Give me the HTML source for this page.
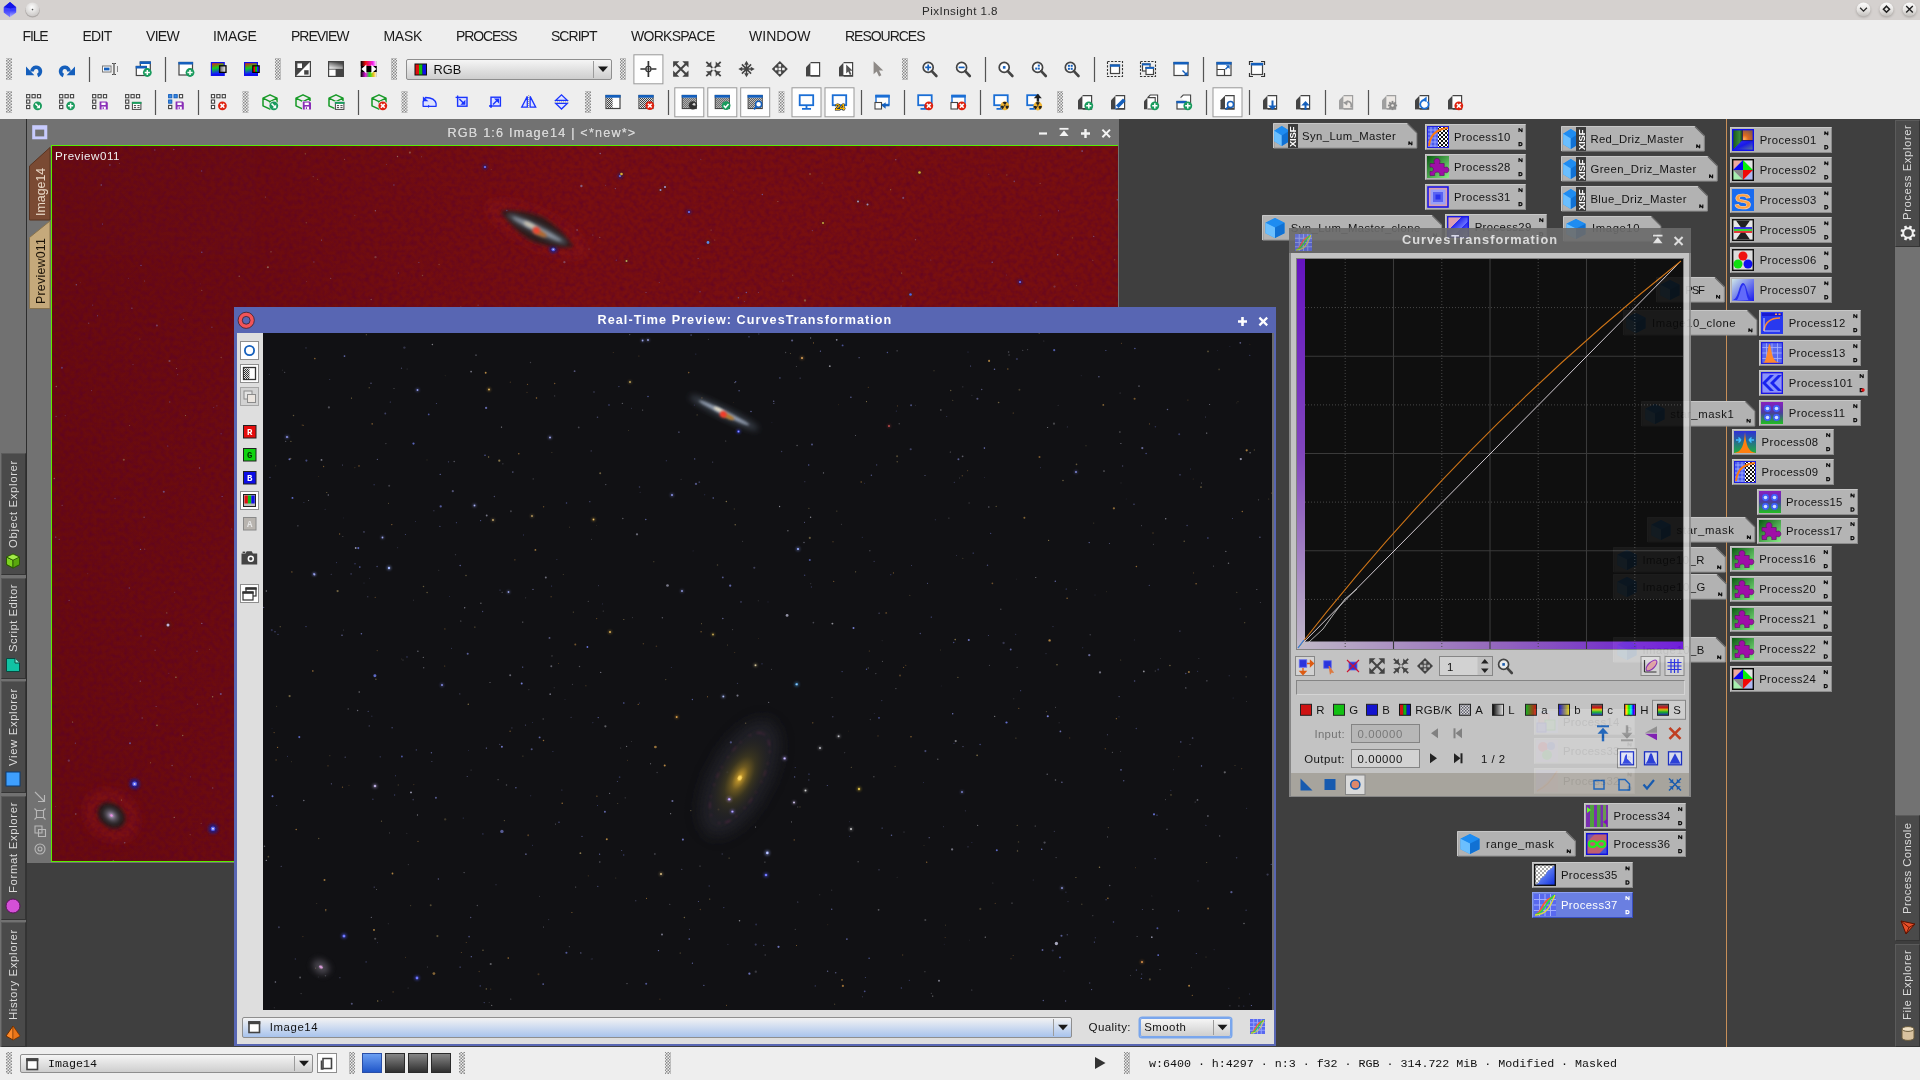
<!DOCTYPE html>
<html><head><meta charset="utf-8"><title>PixInsight 1.8</title>
<style>
html,body{margin:0;padding:0}
body{width:1920px;height:1080px;position:relative;overflow:hidden;background:#404040;
 font-family:"Liberation Sans",sans-serif;font-size:12px;color:#111}
.a{position:absolute}
.t{position:absolute;white-space:nowrap;line-height:1}
.mono{font-family:"Liberation Mono",monospace}
svg{position:absolute;overflow:visible}
.vt{position:absolute;white-space:nowrap;line-height:1;transform-origin:0 0;transform:rotate(-90deg);color:#dcdcdc;font-size:12.6px}
.card{position:absolute;background:#b5b5b5;box-sizing:border-box;border:1px solid #c9c9c9;border-right-color:#8d8d8d;border-bottom-color:#8d8d8d}
.ct{position:absolute;white-space:nowrap;line-height:1;font-size:12.4px;color:#151515}
.nd{position:absolute;font-size:6.5px;font-weight:bold;line-height:1;color:#111}
</style></head><body><div id="root" style="position:absolute;left:0;top:0;width:1920px;height:1080px;will-change:transform;opacity:.999">
<div class="a" style="left:0px;top:0px;width:1920px;height:20px;background:#d6d2d0"></div><svg style="left:0px;top:0px" width="60" height="20" viewBox="0 0 60 20"><defs><linearGradient id="gem" x1="0" y1="0" x2="0" y2="1"><stop offset="0" stop-color="#2a2cff"/><stop offset=".55" stop-color="#3a3cff"/><stop offset="1" stop-color="#b9b9ff"/></linearGradient><radialGradient id="rbt" cx=".45" cy=".35" r=".7"><stop offset="0" stop-color="#fdfdfd"/><stop offset="1" stop-color="#c9c6c4"/></radialGradient></defs><path d="M10 2l6.2 5.2v5.2l-6.2 4.8-6.2-4.8v-5.2z" fill="url(#gem)"/><path d="M10 2l6.2 5.2-6.2 1.2-6.2-1.2z" fill="#1414e8"/><path d="M10 8.4v8.8l-6.2-4.8v-5.2z" fill="#4a4cff" opacity=".55"/><ellipse cx="32.500" cy="10.600" rx="7.300" ry="7" fill="#8f8b88" opacity=".55"/><circle cx="32.500" cy="9.400" r="6.900" fill="url(#rbt)"/><circle cx="32.5" cy="9.6" r=".8" fill="#555"/></svg><div class="t" style="left:922.0px;top:5.0px;font-size:11.6px;color:#2b2b2b;letter-spacing:0.454px;line-height:12px;">PixInsight 1.8</div><svg style="left:0px;top:0px" width="1920" height="20" viewBox="0 0 1920 20"><defs><linearGradient id="rb2" x1="0" y1="0" x2="0" y2="1"><stop offset="0" stop-color="#fdfdfd"/><stop offset=".55" stop-color="#e6e4e2"/><stop offset="1" stop-color="#c4c1be"/></linearGradient><filter id="tbl" x="-30%" y="-30%" width="160%" height="160%"><feGaussianBlur stdDeviation=".9"/></filter></defs><ellipse cx="1863.5" cy="10.600" rx="7.300" ry="7" fill="#8f8b88" opacity=".55" filter="url(#tbl)"/><circle cx="1863.5" cy="9.400" r="6.900" fill="url(#rb2)"/><path d="M1860.1 7.8l3.400 3.400 3.400-3.400" stroke="#2a2a2a" stroke-width="1.300" fill="none"/><ellipse cx="1886.5" cy="10.600" rx="7.300" ry="7" fill="#8f8b88" opacity=".55" filter="url(#tbl)"/><circle cx="1886.5" cy="9.400" r="6.900" fill="url(#rb2)"/><path d="M1886.5 6.2l3 3-3 3-3-3z" stroke="#222" stroke-width="1.600" fill="none"/><ellipse cx="1909.5" cy="10.600" rx="7.300" ry="7" fill="#8f8b88" opacity=".55" filter="url(#tbl)"/><circle cx="1909.5" cy="9.400" r="6.900" fill="url(#rb2)"/><path d="M1906.2 6l6.600 6.600M1912.8 6l-6.600 6.600" stroke="#222" stroke-width="1.400"/></svg><div class="a" style="left:0px;top:20px;width:1920px;height:99px;background:#efefef"></div><div class="t" style="left:22.5px;top:28.0px;font-size:14px;color:#1c1c1c;letter-spacing:-1.142px;line-height:16px;">FILE</div><div class="t" style="left:82.5px;top:28.0px;font-size:14px;color:#1c1c1c;letter-spacing:-0.723px;line-height:16px;">EDIT</div><div class="t" style="left:146.0px;top:28.0px;font-size:14px;color:#1c1c1c;letter-spacing:-0.695px;line-height:16px;">VIEW</div><div class="t" style="left:213.0px;top:28.0px;font-size:14px;color:#1c1c1c;letter-spacing:-0.324px;line-height:16px;">IMAGE</div><div class="t" style="left:291.0px;top:28.0px;font-size:14px;color:#1c1c1c;letter-spacing:-1.009px;line-height:16px;">PREVIEW</div><div class="t" style="left:383.5px;top:28.0px;font-size:14px;color:#1c1c1c;letter-spacing:-0.294px;line-height:16px;">MASK</div><div class="t" style="left:456.0px;top:28.0px;font-size:14px;color:#1c1c1c;letter-spacing:-1.138px;line-height:16px;">PROCESS</div><div class="t" style="left:551.0px;top:28.0px;font-size:14px;color:#1c1c1c;letter-spacing:-0.973px;line-height:16px;">SCRIPT</div><div class="t" style="left:631.0px;top:28.0px;font-size:14px;color:#1c1c1c;letter-spacing:-0.720px;line-height:16px;">WORKSPACE</div><div class="t" style="left:749.0px;top:28.0px;font-size:14px;color:#1c1c1c;letter-spacing:0.012px;line-height:16px;">WINDOW</div><div class="t" style="left:845.0px;top:28.0px;font-size:14px;color:#1c1c1c;letter-spacing:-1.020px;line-height:16px;">RESOURCES</div><svg style="left:0px;top:0px" width="1920" height="119" viewBox="0 0 1920 119"><defs><pattern id="ck" width="2" height="2" patternUnits="userSpaceOnUse"><rect width="2" height="2" fill="#ddd"/><rect width="1" height="1" fill="#444"/><rect x="1" y="1" width="1" height="1" fill="#444"/></pattern><pattern id="grip" width="4" height="4" patternUnits="userSpaceOnUse"><rect width="4" height="4" fill="#efefef"/><rect width="2" height="2" fill="#7a7a7a"/><rect x="2" y="2" width="2" height="2" fill="#7a7a7a"/></pattern><pattern id="grip2" width="3" height="3" patternUnits="userSpaceOnUse"><rect width="3" height="3" fill="#ececec"/><rect width="1.500" height="1.500" fill="#8c8c8c"/><rect x="1.500" y="1.500" width="1.500" height="1.500" fill="#8c8c8c"/></pattern></defs><rect x="6.0" y="58" width="6" height="22" fill="url(#grip2)"/><rect x="275.0" y="58" width="6" height="22" fill="url(#grip2)"/><rect x="391.0" y="58" width="6" height="22" fill="url(#grip2)"/><rect x="620.0" y="58" width="6" height="22" fill="url(#grip2)"/><rect x="902.0" y="58" width="6" height="22" fill="url(#grip2)"/><rect x="6.0" y="91" width="6" height="22" fill="url(#grip2)"/><rect x="242.5" y="91" width="6" height="22" fill="url(#grip2)"/><rect x="401.5" y="91" width="6" height="22" fill="url(#grip2)"/><rect x="585.0" y="91" width="6" height="22" fill="url(#grip2)"/><rect x="778.5" y="91" width="6" height="22" fill="url(#grip2)"/><rect x="1057.0" y="91" width="6" height="22" fill="url(#grip2)"/><rect x="88.9" y="57" width="1.2" height="25" fill="#555"/><rect x="164.9" y="57" width="1.2" height="25" fill="#555"/><rect x="984.9" y="57" width="1.2" height="25" fill="#555"/><rect x="1093.9" y="57" width="1.2" height="25" fill="#555"/><rect x="1202.9" y="57" width="1.2" height="25" fill="#555"/><rect x="154.9" y="90" width="1.2" height="25" fill="#555"/><rect x="197.9" y="90" width="1.2" height="25" fill="#555"/><rect x="357.9" y="90" width="1.2" height="25" fill="#555"/><rect x="667.9" y="90" width="1.2" height="25" fill="#555"/><rect x="860.9" y="90" width="1.2" height="25" fill="#555"/><rect x="903.9" y="90" width="1.2" height="25" fill="#555"/><rect x="979.9" y="90" width="1.2" height="25" fill="#555"/><rect x="1205.9" y="90" width="1.2" height="25" fill="#555"/><rect x="1248.9" y="90" width="1.2" height="25" fill="#555"/><rect x="1324.9" y="90" width="1.2" height="25" fill="#555"/><rect x="1367.9" y="90" width="1.2" height="25" fill="#555"/><rect x="633.9" y="54.8" width="29" height="29" fill="#fff" stroke="#9a9a9a" stroke-width="1"/><g transform="translate(26.0,61.0)"><path d="M11.6 14.4A4.2 4.2 0 1 0 6 10.4" stroke="#1560bd" stroke-width="3.7" fill="none"/><path d="M0 14.2V5.6L8.4 14.2z" fill="#1560bd"/></g><g transform="translate(59.0,61.0)"><g transform="translate(16,0) scale(-1,1)"><path d="M11.6 14.4A4.2 4.2 0 1 0 6 10.4" stroke="#1560bd" stroke-width="3.7" fill="none"/><path d="M0 14.2V5.6L8.4 14.2z" fill="#1560bd"/></g></g><g transform="translate(102.0,61.0)"><rect x=".5" y="5" width="8.5" height="6" fill="#fff" stroke="#777" stroke-width="1"/><rect x="2" y="6.6" width="5.5" height="2.8" fill="#1560bd"/><path d="M10 2.5h1.5m1 0h1.5M12 2.5v11M10 13.5h1.5m1 0h1.5" stroke="#454545" stroke-width="1.2" fill="none"/><path d="M15.5 5v6" stroke="#888" stroke-width="1"/></g><g transform="translate(135.3,61.0)"><rect x="5" y="1" width="10" height="8" fill="#fff" stroke="#454545" stroke-width="1.2"/><rect x="4.4" y="0.4" width="11.2" height="2.6" fill="#1560bd"/><rect x="1" y="5.5" width="10" height="9" fill="#fff" stroke="#454545" stroke-width="1.2"/><rect x="0.4" y="4.9" width="11.2" height="2.6" fill="#1560bd"/><circle cx="12" cy="11.5" r="4.4" fill="#1a9c5e"/><path d="M9.4 11.5h5.2M12 8.9v5.2" stroke="#fff" stroke-width="1.5"/></g><g transform="translate(178.0,61.0)"><rect x="1" y="1.5" width="13.5" height="12.5" fill="#fff" stroke="#454545" stroke-width="1.2"/><rect x="0.4" y="0.9" width="14.7" height="2.6" fill="#1560bd"/><circle cx="12" cy="11.5" r="4.4" fill="#1a9c5e"/><path d="M9.4 11.5h5.2M12 8.9v5.2" stroke="#fff" stroke-width="1.5"/></g><g transform="translate(210.8,61.0)"><defs><linearGradient id="gq1" x1="0" y1="0" x2=".25" y2="1"><stop offset="0" stop-color="#e82010"/><stop offset=".5" stop-color="#10d020"/><stop offset="1" stop-color="#1020ff"/></linearGradient><linearGradient id="gq1g" x1="0" y1="0" x2="1" y2="0"><stop offset="0" stop-color="#666"/><stop offset="1" stop-color="#f4f4f4"/></linearGradient></defs><rect x="0" y="1" width="14" height="14" fill="#1010ee"/><rect x="1.2" y="2.2" width="11.6" height="10.6" fill="url(#gq1)"/><rect x="8.800" y="4.800" width="6.400" height="6.600" fill="url(#gq1g)" stroke="#000" stroke-width="1.300"/></g><g transform="translate(244.0,61.0)"><defs><linearGradient id="gq2" x1="0" y1="0" x2=".25" y2="1"><stop offset="0" stop-color="#e82010"/><stop offset=".5" stop-color="#10d020"/><stop offset="1" stop-color="#1020ff"/></linearGradient><linearGradient id="gq2g" x1="0" y1="0" x2="1" y2="0"><stop offset="0" stop-color="#666"/><stop offset="1" stop-color="#f4f4f4"/></linearGradient></defs><rect x="0" y="1" width="14" height="14" fill="#1010ee"/><rect x="1.2" y="2.2" width="11.6" height="10.6" fill="url(#gq2)"/><rect x="8.200" y="4.200" width="7.600" height="7.800" fill="#000"/><rect x="9.400" y="5.400" width="1.800" height="5.400" fill="#f00"/><rect x="11.200" y="5.400" width="1.800" height="5.400" fill="#0c0"/><rect x="13" y="5.400" width="1.700" height="5.400" fill="#22f"/></g><g transform="translate(295.0,61.0)"><rect x=".6" y=".6" width="14.8" height="14.8" fill="#fff" stroke="#454545" stroke-width="1.2"/><path d="M.6 .6h14.8L.6 15.400z" fill="#454545"/><rect x="2.4" y="2.4" width="4.6" height="4.6" fill="#fff"/><rect x="9.2" y="9.2" width="4.4" height="4.400" fill="#454545"/></g><g transform="translate(328.0,61.0)"><defs><linearGradient id="gg1" x1="0" y1="1" x2=".6" y2="0"><stop offset="0" stop-color="#fff"/><stop offset="1" stop-color="#4a4a4a"/></linearGradient></defs><rect x="0" y="0" width="16" height="16" fill="#454545"/><rect x="1.2" y="1.2" width="13.6" height="6.6" fill="url(#gg1)"/><rect x="1.2" y="8.6" width="6.4" height="6.2" fill="#fff"/></g><g transform="translate(360.8,61.0)"><defs><linearGradient id="rnb1" x1="0" y1="0" x2="1" y2="0"><stop offset="0" stop-color="#000"/><stop offset=".3" stop-color="#f01010"/><stop offset=".75" stop-color="#f020f0"/><stop offset="1" stop-color="#fff"/></linearGradient><linearGradient id="rnb2" x1="0" y1="0" x2="1" y2="0"><stop offset="0" stop-color="#000"/><stop offset=".3" stop-color="#e020e0"/><stop offset=".55" stop-color="#20e020"/><stop offset=".8" stop-color="#f0c020"/><stop offset="1" stop-color="#fff"/></linearGradient></defs><rect x="0" y="0" width="16" height="16" fill="#000"/><rect x="0" y="0" width="16" height="5" fill="url(#rnb1)"/><rect x="0" y="11" width="16" height="5" fill="url(#rnb2)"/><rect x="4" y="6" width="8.500" height="4" fill="#000"/><path d="M.6 8l5-4.600v9.200z" fill="#fff"/><path d="M15.600 8l-5-4.600v9.200z" fill="#fff"/><path d="M5 6.600h6v2.800h-6z" fill="#fff" opacity=".0"/></g><g transform="translate(640.4,61.0)"><path d="M8 0v16M0 8h16" stroke="#333" stroke-width="1.700"/><rect x="5.200" y="5.200" width="5.600" height="5.600" fill="#fff"/><circle cx="8" cy="8" r="2.600" fill="#fff" stroke="#333" stroke-width="1.200"/><path d="M8 5.400v5.200M5.400 8h5.200" stroke="#333" stroke-width="1.200"/></g><g transform="translate(672.8,61.0)"><path d="M2 2l12 12M14 2l-12 12" stroke="#454545" stroke-width="2"/><path d="M0.3 0.3h6.2l-6.2 6.2z" fill="#454545"/><path d="M15.7 0.3h-6.2l6.2 6.2z" fill="#454545"/><path d="M0.3 15.7h6.2l-6.2 -6.2z" fill="#454545"/><path d="M15.7 15.7h-6.2l6.2 -6.2z" fill="#454545"/></g><g transform="translate(705.5,61.0)"><path d="M.8 .8l14.4 14.4M15.2 .8l-14.4 14.4" stroke="#454545" stroke-width="1.8"/><path d="M5.8 5.8h-5.4l5.4 -5.4z" fill="#454545"/><path d="M10.2 5.8h5.4l-5.4 -5.4z" fill="#454545"/><path d="M5.8 10.2h-5.4l5.4 5.4z" fill="#454545"/><path d="M10.2 10.2h5.4l-5.4 5.4z" fill="#454545"/><rect x="6.6" y="6.6" width="2.8" height="2.8" fill="#efefef"/></g><g transform="translate(738.5,61.0)"><path d="M8 2v12M2 8h12M3.400 3.400l9.200 9.200M12.600 3.400l-9.200 9.200" stroke="#454545" stroke-width="1.500"/><path d="M8.00 -0.20L10.30 3.78L5.70 3.78z" fill="#454545"/><path d="M8.00 16.20L5.70 12.22L10.30 12.22z" fill="#454545"/><path d="M-0.20 8.00L3.78 5.70L3.78 10.30z" fill="#454545"/><path d="M16.20 8.00L12.22 10.30L12.22 5.70z" fill="#454545"/></g><g transform="translate(771.8,61.0)"><path d="M8 0l8 8-8 8-8-8z" fill="#454545"/><rect x="6.7" y="3.1000000000000005" width="2.600" height="2.600" fill="#efefef"/><rect x="3.1000000000000005" y="6.7" width="2.600" height="2.600" fill="#efefef"/><rect x="10.299999999999999" y="6.7" width="2.600" height="2.600" fill="#efefef"/><rect x="6.7" y="10.299999999999999" width="2.600" height="2.600" fill="#efefef"/><rect x="6.7" y="6.7" width="2.600" height="2.600" fill="#efefef"/></g><g transform="translate(805.0,61.0)"><path d="M1 6.2L5.6 1.6v13.6H1z" fill="#454545"/><path d="M5.6 1.6h9v13.6h-9" fill="#fff" stroke="#454545" stroke-width="1.2"/><path d="M1 14.6h13.6" stroke="#454545" stroke-width="1.2"/></g><g transform="translate(838.0,61.0)"><path d="M1 6.2L5.6 1.6v13.6H1z" fill="#454545"/><path d="M5.6 1.6h9v13.6h-9" fill="#fff" stroke="#454545" stroke-width="1.2"/><path d="M1 14.6h13.6" stroke="#454545" stroke-width="1.2"/><path transform="translate(8.2,3.6) scale(0.8)" d="M0 0v11l2.6-2.3 2 4.3 2-1-2-4.2h3.6z" fill="#555"/></g><g transform="translate(871.0,61.0)"><path transform="translate(2.6,0.2) scale(1.18)" d="M0 0v11l2.6-2.3 2 4.3 2-1-2-4.2h3.6z" fill="#8f8b88"/></g><g transform="translate(921.6,61.0)"><circle cx="6.6" cy="6.4" r="5" fill="#fff" stroke="#454545" stroke-width="1.7"/><path d="M10.2 10.2l4.6 4.8" stroke="#454545" stroke-width="2.6" stroke-linecap="round"/><path d="M3.6 6.4h6M6.6 3.4v6" stroke="#1560bd" stroke-width="1.7"/></g><g transform="translate(955.0,61.0)"><circle cx="6.6" cy="6.4" r="5" fill="#fff" stroke="#454545" stroke-width="1.7"/><path d="M10.2 10.2l4.6 4.8" stroke="#454545" stroke-width="2.6" stroke-linecap="round"/><path d="M3.6 6.4h6" stroke="#1560bd" stroke-width="1.7"/></g><g transform="translate(997.6,61.0)"><circle cx="6.6" cy="6.4" r="5" fill="#fff" stroke="#454545" stroke-width="1.7"/><path d="M10.2 10.2l4.6 4.8" stroke="#454545" stroke-width="2.6" stroke-linecap="round"/><rect x="5.3" y="5.1" width="2.6" height="2.6" fill="#1560bd"/></g><g transform="translate(1031.0,61.0)"><circle cx="6.6" cy="6.4" r="5" fill="#fff" stroke="#454545" stroke-width="1.7"/><path d="M10.2 10.2l4.6 4.8" stroke="#454545" stroke-width="2.6" stroke-linecap="round"/><rect x="6.8" y="3.6" width="2" height="2" fill="#1560bd"/><rect x="4.2" y="6.6" width="2" height="2" fill="#1560bd"/><rect x="6.8" y="6.6" width="2" height="2" fill="#1560bd"/></g><g transform="translate(1063.7,61.0)"><circle cx="6.6" cy="6.4" r="5" fill="#fff" stroke="#454545" stroke-width="1.7"/><path d="M10.2 10.2l4.6 4.8" stroke="#454545" stroke-width="2.6" stroke-linecap="round"/><rect x="4.2" y="3.8" width="2" height="2" fill="#1560bd"/><rect x="7" y="3.8" width="2" height="2" fill="#1560bd"/><rect x="4.2" y="6.8" width="2" height="2" fill="#1560bd"/><rect x="7" y="6.8" width="2" height="2" fill="#1560bd"/></g><g transform="translate(1107.0,61.0)"><rect x="0.5" y="0.5" width="15" height="15" fill="none" stroke="#333" stroke-width="1.1" stroke-dasharray="2.2 1.4"/><rect x="3.5" y="4" width="9" height="8.5" fill="#fff" stroke="#454545" stroke-width="1.2"/><rect x="2.9" y="3.4" width="10.2" height="2.4" fill="#1560bd"/></g><g transform="translate(1140.0,61.0)"><rect x="0.5" y="0.5" width="15" height="15" fill="none" stroke="#333" stroke-width="1.1" stroke-dasharray="2.2 1.4"/><rect x="2.5" y="3" width="7.5" height="7" fill="#fff" stroke="#454545" stroke-width="1.2"/><rect x="1.9" y="2.4" width="8.7" height="2" fill="#1560bd"/><rect x="6" y="6.5" width="7.5" height="7" fill="#fff" stroke="#454545" stroke-width="1.2"/><rect x="5.4" y="5.9" width="8.7" height="2" fill="#1560bd"/></g><g transform="translate(1173.0,61.0)"><rect x="1" y="1.5" width="14" height="13" fill="#fff" stroke="#454545" stroke-width="1.2"/><rect x="0.4" y="0.9" width="15.2" height="2.6" fill="#1560bd"/><path d="M9.5 9.5l4.5 4.5" stroke="#1560bd" stroke-width="1.4"/><path d="M14.6 14.6v-4.2l-4.2 4.2z" fill="#1560bd"/></g><g transform="translate(1216.0,61.0)"><rect x="1" y="1.5" width="14" height="13" fill="#fff" stroke="#454545" stroke-width="1.2"/><rect x="0.4" y="0.9" width="15.2" height="2.8" fill="#1560bd"/><path d="M1 8.5h7.5v6" stroke="#454545" stroke-width="1.2" fill="none"/><path d="M9.5 8.2l3.2-3.2" stroke="#1560bd" stroke-width="1.4"/><path d="M13.6 4.2v3.8l-3.8-3.8z" fill="#1560bd"/></g><g transform="translate(1249.0,61.0)"><path d="M.5 4v-3.5h3.5M12 .5h3.5v3.5M15.5 12v3.5h-3.5M4 15.5h-3.5v-3.5" fill="none" stroke="#333" stroke-width="1.2"/><rect x="2.5" y="2.5" width="11" height="11" fill="#fff" stroke="#454545" stroke-width="1.2"/><rect x="1.9" y="1.9" width="12.2" height="2.6" fill="#1560bd"/></g><rect x="674.8" y="87.8" width="29" height="29" fill="#fff" stroke="#9a9a9a" stroke-width="1"/><rect x="707.8" y="87.8" width="29" height="29" fill="#fff" stroke="#9a9a9a" stroke-width="1"/><rect x="740.7" y="87.8" width="29" height="29" fill="#fff" stroke="#9a9a9a" stroke-width="1"/><rect x="792.0" y="87.8" width="29" height="29" fill="#fff" stroke="#9a9a9a" stroke-width="1"/><rect x="825.0" y="87.8" width="29" height="29" fill="#fff" stroke="#9a9a9a" stroke-width="1"/><rect x="1213.0" y="87.8" width="29" height="29" fill="#fff" stroke="#9a9a9a" stroke-width="1"/><g transform="translate(26.0,94.0)"><rect x="0.6" y="0.6" width="3.2" height="3.2" fill="#fff" stroke="#454545" stroke-width="1.1"/><rect x="6" y="0.6" width="3.2" height="3.2" fill="#fff" stroke="#454545" stroke-width="1.1"/><rect x="11.4" y="0.6" width="3.2" height="3.2" fill="#fff" stroke="#454545" stroke-width="1.1"/><rect x="0.6" y="6" width="3.2" height="3.2" fill="#fff" stroke="#454545" stroke-width="1.1"/><rect x="0.6" y="11.4" width="3.2" height="3.2" fill="#fff" stroke="#454545" stroke-width="1.1"/><circle cx="11.6" cy="11.8" r="4.4" fill="#1a9c5e"/><path d="M9.399999999999999 9.600000000000001l3.6 3.6" stroke="#fff" stroke-width="1.5"/><path d="M14.0 10.600000000000001v3.6h-3.6z" fill="#fff"/></g><g transform="translate(59.0,94.0)"><rect x="0.6" y="0.6" width="3.2" height="3.2" fill="#fff" stroke="#454545" stroke-width="1.1"/><rect x="6" y="0.6" width="3.2" height="3.2" fill="#fff" stroke="#454545" stroke-width="1.1"/><rect x="11.4" y="0.6" width="3.2" height="3.2" fill="#fff" stroke="#454545" stroke-width="1.1"/><rect x="0.6" y="6" width="3.2" height="3.2" fill="#fff" stroke="#454545" stroke-width="1.1"/><rect x="0.6" y="11.4" width="3.2" height="3.2" fill="#fff" stroke="#454545" stroke-width="1.1"/><circle cx="11.6" cy="11.8" r="4.4" fill="#1a9c5e"/><path d="M9.0 11.8h5.2M11.6 9.200000000000001v5.2" stroke="#fff" stroke-width="1.5"/></g><g transform="translate(92.0,94.0)"><rect x="0.6" y="0.6" width="3.2" height="3.2" fill="#fff" stroke="#454545" stroke-width="1.1"/><rect x="6" y="0.6" width="3.2" height="3.2" fill="#fff" stroke="#454545" stroke-width="1.1"/><rect x="11.4" y="0.6" width="3.2" height="3.2" fill="#fff" stroke="#454545" stroke-width="1.1"/><rect x="0.6" y="6" width="3.2" height="3.2" fill="#fff" stroke="#454545" stroke-width="1.1"/><rect x="0.6" y="11.4" width="3.2" height="3.2" fill="#fff" stroke="#454545" stroke-width="1.1"/><path d="M7.6 7.6h7l1.2 1.2v6.8h-8.2z" fill="#8b2fb8"/><rect x="9.4" y="8.6" width="4.2" height="2.4" fill="#fff"/><rect x="9.6" y="12.6" width="4.2" height="3" fill="#fff"/><rect x="10.6" y="13.2" width="1.2" height="1.8" fill="#8b2fb8"/></g><g transform="translate(125.0,94.0)"><rect x="0.6" y="0.6" width="3.2" height="3.2" fill="#fff" stroke="#454545" stroke-width="1.1"/><rect x="6" y="0.6" width="3.2" height="3.2" fill="#fff" stroke="#454545" stroke-width="1.1"/><rect x="11.4" y="0.6" width="3.2" height="3.2" fill="#fff" stroke="#454545" stroke-width="1.1"/><rect x="0.6" y="6" width="3.2" height="3.2" fill="#fff" stroke="#454545" stroke-width="1.1"/><rect x="0.6" y="11.4" width="3.2" height="3.2" fill="#fff" stroke="#454545" stroke-width="1.1"/><rect x="7.4" y="8.4" width="8.5" height="7" fill="#fff" stroke="#454545" stroke-width="1"/><rect x="6.9" y="7.9" width="9.5" height="2" fill="#1a9c5e"/><path d="M8.9 11.600000000000001h2.2M12.4 11.600000000000001h2.2M8.9 13.600000000000001h2.2M12.4 13.600000000000001h2.2" stroke="#454545" stroke-width="1"/></g><g transform="translate(168.0,94.0)"><rect x="0.6" y="0.6" width="3.2" height="3.2" fill="#3b8de8" stroke="#1560bd" stroke-width="1"/><rect x="6" y="0.6" width="3.2" height="3.2" fill="#3b8de8" stroke="#1560bd" stroke-width="1"/><rect x="11.4" y="0.6" width="3.2" height="3.2" fill="#fff" stroke="#454545" stroke-width="1.1"/><rect x="0.6" y="6" width="3.2" height="3.2" fill="#3b8de8" stroke="#1560bd" stroke-width="1"/><rect x="0.6" y="11.4" width="3.2" height="3.2" fill="#fff" stroke="#454545" stroke-width="1.1"/><path d="M7.6 7.6h7l1.2 1.2v6.8h-8.2z" fill="#8b2fb8"/><rect x="9.4" y="8.6" width="4.2" height="2.4" fill="#fff"/><rect x="9.6" y="12.6" width="4.2" height="3" fill="#fff"/><rect x="10.6" y="13.2" width="1.2" height="1.8" fill="#8b2fb8"/></g><g transform="translate(210.8,94.0)"><rect x="0.6" y="0.6" width="3.2" height="3.2" fill="#fff" stroke="#454545" stroke-width="1.1"/><rect x="6" y="0.6" width="3.2" height="3.2" fill="#fff" stroke="#454545" stroke-width="1.1"/><rect x="11.4" y="0.6" width="3.2" height="3.2" fill="#fff" stroke="#454545" stroke-width="1.1"/><rect x="0.6" y="6" width="3.2" height="3.2" fill="#fff" stroke="#454545" stroke-width="1.1"/><rect x="0.6" y="11.4" width="3.2" height="3.2" fill="#fff" stroke="#454545" stroke-width="1.1"/><circle cx="11.6" cy="11.8" r="4.4" fill="#e0220f"/><path d="M9.7 9.9l3.8 3.8M13.5 9.9l-3.8 3.8" stroke="#fff" stroke-width="1.6"/></g><g transform="translate(262.0,94.0)"><path d="M8 .8l7 3.4v7.6l-7 3.4-7-3.4v-7.6zM1 4.2l7 3.4 7-3.4M8 7.6v7.6" fill="none" stroke="#169a26" stroke-width="1.5" stroke-linejoin="round"/><circle cx="11.8" cy="11.8" r="5" fill="#efefef"/><circle cx="11.8" cy="11.8" r="4.4" fill="#1a9c5e"/><path d="M9.600000000000001 9.600000000000001l3.6 3.6" stroke="#fff" stroke-width="1.5"/><path d="M14.200000000000001 10.600000000000001v3.6h-3.6z" fill="#fff"/></g><g transform="translate(295.0,94.0)"><path d="M8 .8l7 3.4v7.6l-7 3.4-7-3.4v-7.6zM1 4.2l7 3.4 7-3.4M8 7.6v7.6" fill="none" stroke="#169a26" stroke-width="1.5" stroke-linejoin="round"/><rect x="7" y="7" width="9.5" height="9.5" fill="#efefef"/><path d="M7.8 7.6h7l1.2 1.2v6.8h-8.2z" fill="#8b2fb8"/><rect x="9.6" y="8.6" width="4.2" height="2.4" fill="#fff"/><rect x="9.8" y="12.6" width="4.2" height="3" fill="#fff"/><rect x="10.8" y="13.2" width="1.2" height="1.8" fill="#8b2fb8"/></g><g transform="translate(328.0,94.0)"><path d="M8 .8l7 3.4v7.6l-7 3.4-7-3.4v-7.6zM1 4.2l7 3.4 7-3.4M8 7.6v7.6" fill="none" stroke="#169a26" stroke-width="1.5" stroke-linejoin="round"/><rect x="6.5" y="7" width="10" height="9.5" fill="#efefef"/><rect x="7.4" y="8.4" width="8.5" height="7" fill="#fff" stroke="#454545" stroke-width="1"/><rect x="6.9" y="7.9" width="9.5" height="2" fill="#1a9c5e"/><path d="M8.9 11.600000000000001h2.2M12.4 11.600000000000001h2.2M8.9 13.600000000000001h2.2M12.4 13.600000000000001h2.2" stroke="#454545" stroke-width="1"/></g><g transform="translate(371.0,94.0)"><path d="M8 .8l7 3.4v7.6l-7 3.4-7-3.4v-7.6zM1 4.2l7 3.4 7-3.4M8 7.6v7.6" fill="none" stroke="#169a26" stroke-width="1.5" stroke-linejoin="round"/><circle cx="11.8" cy="11.8" r="5" fill="#efefef"/><circle cx="11.8" cy="11.8" r="4.4" fill="#e0220f"/><path d="M9.9 9.9l3.8 3.8M13.700000000000001 9.9l-3.8 3.8" stroke="#fff" stroke-width="1.6"/></g><g transform="translate(421.5,94.0)"><path d="M1.600 12.300h13v-2.600C13.800 5.600 9.500 3.600 4 3.500L1.600 7.600z" fill="#dfe3ff" stroke="#1a35ff" stroke-width="1.300" stroke-linejoin="round"/><path d="M1.400 2.400l5.600 4.800h-5.600z" fill="#1a35ff"/><path d="M8.500 12.300l-2 -1.600v3.200z" fill="#1a35ff"/></g><g transform="translate(454.0,94.0)"><rect x="3.600" y="3.400" width="9.400" height="8.800" fill="#dfe3ff" stroke="#1a35ff" stroke-width="1.400"/><path d="M1.600 3.400h3M3.600 1.400v3" stroke="#1a35ff" stroke-width="1.300"/><path d="M11.400 10.800v-5l-5 5z" fill="#1a35ff"/><path d="M5.400 5l4 4" stroke="#1a35ff" stroke-width="1.400"/></g><g transform="translate(487.0,94.0)"><rect x="4" y="3.200" width="9.400" height="8.800" fill="#dfe3ff" stroke="#1a35ff" stroke-width="1.400"/><path d="M2 12h3M4 14v-3" stroke="#1a35ff" stroke-width="1.300"/><path d="M12 4.600h-5l5 5z" fill="#1a35ff"/><path d="M6 10.400l4-4" stroke="#1a35ff" stroke-width="1.400"/></g><g transform="translate(520.5,94.0)"><path d="M6.800 2.400v10.800h-5.600zM9.600 2.400v10.800h5.600z" fill="#dfe3ff" stroke="#1a35ff" stroke-width="1.300"/><path d="M8.200 1v14" stroke="#888" stroke-width=".9" stroke-dasharray="1 1"/></g><g transform="translate(553.5,94.0)"><path d="M2.200 6.400h11.600l-5.800-5.600zM2.200 9.400h11.600l-5.800 5.600z" fill="#dfe3ff" stroke="#1a35ff" stroke-width="1.300"/><path d="M1.400 7.900h13.200" stroke="#888" stroke-width=".9" stroke-dasharray="1 1"/></g><g transform="translate(605.0,94.0)"><rect x="1" y="1.5" width="14" height="13" fill="#fff" stroke="#454545" stroke-width="1.2"/><rect x="1.6" y="3.5" width="6" height="10.4" fill="url(#ck)"/><rect x=".4" y=".9" width="15.2" height="2.8" fill="#1560bd"/></g><g transform="translate(638.0,94.0)"><rect x="1" y="1.5" width="14" height="13" fill="#fff" stroke="#454545" stroke-width="1.2"/><rect x="1.6" y="3.5" width="13" height="10.4" fill="url(#ck)"/><rect x=".4" y=".9" width="15.2" height="2.8" fill="#1560bd"/><circle cx="11.8" cy="11.6" r="4.4" fill="#e0220f"/><path d="M9.9 9.7l3.8 3.8M13.700000000000001 9.7l-3.8 3.8" stroke="#fff" stroke-width="1.6"/></g><g transform="translate(681.3,94.0)"><rect x="1" y="1.5" width="14" height="13" fill="#fff" stroke="#454545" stroke-width="1.2"/><rect x="1.6" y="3.5" width="13" height="10.4" fill="url(#ck)"/><rect x=".4" y=".9" width="15.2" height="2.8" fill="#1560bd"/><circle cx="11.6" cy="11.4" r="4.2" fill="#333"/><path d="M12.799999999999999 8.8a3 3 0 0 1 1.6 2.4a3.4 3.4 0 0 1 -3.6 -0.6z" fill="#ddd"/></g><g transform="translate(714.3,94.0)"><rect x="1" y="1.5" width="14" height="13" fill="#fff" stroke="#454545" stroke-width="1.2"/><rect x="1.6" y="3.5" width="13" height="10.4" fill="url(#ck)"/><rect x=".4" y=".9" width="15.2" height="2.8" fill="#1560bd"/><circle cx="11.8" cy="11.6" r="4.4" fill="#1a9c5e"/><path d="M9.4 11.6l1.8 1.9 3-3.6" stroke="#fff" stroke-width="1.5" fill="none"/></g><g transform="translate(747.2,94.0)"><rect x="1" y="1.5" width="14" height="13" fill="#fff" stroke="#454545" stroke-width="1.2"/><rect x="1.6" y="3.5" width="13" height="10.4" fill="url(#ck)"/><rect x=".4" y=".9" width="15.2" height="2.8" fill="#1560bd"/><circle cx="11.5" cy="10.5" r="3.6" fill="#efefef" opacity="0"/><circle cx="11.4" cy="10.2" r="3" fill="#fff" stroke="#1560bd" stroke-width="1.5"/><path d="M9.4 12.399999999999999l-2.6 2.8" stroke="#1560bd" stroke-width="2"/></g><g transform="translate(798.5,94.0)"><rect x="1.2" y="1.2" width="13.5" height="10" fill="#fff" stroke="#1b6fd6" stroke-width="1.8"/><path d="M8 11.5v2.8M3.5 14.8h9" stroke="#1b6fd6" stroke-width="1.8"/></g><g transform="translate(831.5,94.0)"><rect x="1.2" y="1.2" width="13.5" height="10" fill="#fff" stroke="#1b6fd6" stroke-width="1.8"/><path d="M8 11.5v2.8M3.5 14.8h9" stroke="#1b6fd6" stroke-width="1.8"/><text x="3.6" y="15.6" font-family="Liberation Sans" font-weight="bold" font-size="9.5" fill="#f5b400" stroke="#111" stroke-width=".8" paint-order="stroke" letter-spacing="-.6">24</text></g><g transform="translate(874.0,94.0)"><rect x="2" y="1.5" width="13" height="9" fill="#fff" stroke="#1b6fd6" stroke-width="1.4"/><rect x="1.3" y="0.8" width="14.4" height="2.8" fill="#1b6fd6"/><rect x="1" y="8.5" width="6.5" height="6.5" fill="#fff" stroke="#454545" stroke-width="1.1"/><path d="M15.5 11.5h-6" stroke="#1560bd" stroke-width="1.6"/><path d="M7.6 11.5l4-3.2v6.4z" fill="#1560bd"/></g><g transform="translate(917.0,94.0)"><rect x="1.2" y="1.2" width="13.5" height="10" fill="#fff" stroke="#1b6fd6" stroke-width="1.8"/><path d="M8 11.5v2.8M3.5 14.8h9" stroke="#1b6fd6" stroke-width="1.8"/><circle cx="11.8" cy="11.8" r="4.4" fill="#e0220f"/><path d="M9.9 9.9l3.8 3.8M13.700000000000001 9.9l-3.8 3.8" stroke="#fff" stroke-width="1.6"/></g><g transform="translate(950.0,94.0)"><rect x="2" y="1.5" width="13" height="9" fill="#fff" stroke="#1b6fd6" stroke-width="1.4"/><rect x="1.3" y="0.8" width="14.4" height="2.8" fill="#1b6fd6"/><rect x="1" y="8.5" width="6.5" height="6.5" fill="#fff" stroke="#454545" stroke-width="1.1"/><circle cx="11.8" cy="11.8" r="4.4" fill="#e0220f"/><path d="M9.9 9.9l3.8 3.8M13.700000000000001 9.9l-3.8 3.8" stroke="#fff" stroke-width="1.6"/></g><g transform="translate(993.0,94.0)"><rect x="1.2" y="1.2" width="13.5" height="10" fill="#fff" stroke="#1b6fd6" stroke-width="1.8"/><path d="M8 11.5v2.8M3.5 14.8h9" stroke="#1b6fd6" stroke-width="1.8"/><circle cx="11.8" cy="11.8" r="4.4" fill="#f2b632"/><path d="M11.8 11.8L15.85 11.80A4.048000000000001 4.048000000000001 0 0 1 13.82 15.31z" fill="#222"/><path d="M11.8 11.8L9.78 15.31A4.048000000000001 4.048000000000001 0 0 1 7.75 11.80z" fill="#222"/><path d="M11.8 11.8L9.78 8.29A4.048000000000001 4.048000000000001 0 0 1 13.82 8.29z" fill="#222"/><circle cx="11.8" cy="11.8" r="1.3" fill="#f2b632"/><circle cx="11.8" cy="11.8" r=".7" fill="#222"/></g><g transform="translate(1026.0,94.0)"><rect x="1.2" y="1.2" width="11" height="10" fill="#fff" stroke="#1b6fd6" stroke-width="1.8"/><path d="M8 11.5v2.8M3.5 14.8h9" stroke="#1b6fd6" stroke-width="1.8"/><circle cx="11.8" cy="12" r="4.4" fill="#f2b632"/><path d="M11.8 12L15.85 12.00A4.048000000000001 4.048000000000001 0 0 1 13.82 15.51z" fill="#222"/><path d="M11.8 12L9.78 15.51A4.048000000000001 4.048000000000001 0 0 1 7.75 12.00z" fill="#222"/><path d="M11.8 12L9.78 8.49A4.048000000000001 4.048000000000001 0 0 1 13.82 8.49z" fill="#222"/><circle cx="11.8" cy="12" r="1.3" fill="#f2b632"/><circle cx="11.8" cy="12" r=".7" fill="#222"/><path d="M11.8 7.5v-4" stroke="#222" stroke-width="2.2"/><path d="M11.8 -.2l4 4.4h-8z" fill="#222"/></g><g transform="translate(1077.0,94.0)"><path d="M1 6.2L5.6 1.6v13.6H1z" fill="#454545"/><path d="M5.6 1.6h9v13.6h-9" fill="#fff" stroke="#454545" stroke-width="1.2"/><path d="M1 14.6h13.6" stroke="#454545" stroke-width="1.2"/><circle cx="11.8" cy="11.8" r="4.4" fill="#1a9c5e"/><path d="M9.200000000000001 11.8h5.2M11.8 9.200000000000001v5.2" stroke="#fff" stroke-width="1.5"/></g><g transform="translate(1110.0,94.0)"><path d="M1 6.2L5.6 1.6v13.6H1z" fill="#454545"/><path d="M5.6 1.6h9v13.6h-9" fill="#fff" stroke="#454545" stroke-width="1.2"/><path d="M1 14.6h13.6" stroke="#454545" stroke-width="1.2"/><path d="M5.2 14.8l1-3.6 6.8-6.8 2.6 2.6-6.8 6.8z" fill="#1560bd"/><path d="M5.2 14.8l1-3.6 2.6 2.6z" fill="#fff" stroke="#1560bd" stroke-width=".6"/></g><g transform="translate(1143.0,94.0)"><path d="M1 7.2L4.6 3.6v11.6H1z" fill="#454545"/><path d="M4.6 3.6l2.6-2.6h7.4v11" fill="#fff" stroke="#454545" stroke-width="1.1"/><path d="M4.6 3.6h7.6v11.4h-7.6" fill="#fff" stroke="#454545" stroke-width="1.1"/><circle cx="11.8" cy="11.8" r="4.4" fill="#1a9c5e"/><path d="M9.200000000000001 11.8h5.2M11.8 9.200000000000001v5.2" stroke="#fff" stroke-width="1.5"/></g><g transform="translate(1176.0,94.0)"><path d="M4.6 3.6l2.6-2.6h7.4v11" fill="#fff" stroke="#454545" stroke-width="1.1"/><rect x="1" y="7.5" width="9" height="7.5" fill="#fff" stroke="#454545" stroke-width="1.2"/><rect x="0.4" y="6.9" width="10.2" height="2.4" fill="#1560bd"/><circle cx="11.8" cy="11.8" r="4.4" fill="#1a9c5e"/><path d="M9.200000000000001 11.8h5.2M11.8 9.200000000000001v5.2" stroke="#fff" stroke-width="1.5"/></g><g transform="translate(1219.5,94.0)"><path d="M1 6.2L5.6 1.6v13.6H1z" fill="#454545"/><path d="M5.6 1.6h9v13.6h-9" fill="#fff" stroke="#454545" stroke-width="1.2"/><path d="M1 14.6h13.6" stroke="#454545" stroke-width="1.2"/><circle cx="11" cy="10.4" r="3" fill="#fff" stroke="#1560bd" stroke-width="1.5"/><path d="M9 12.600000000000001l-2.6 2.8" stroke="#1560bd" stroke-width="2"/></g><g transform="translate(1262.0,94.0)"><path d="M1 6.2L5.6 1.6v13.6H1z" fill="#454545"/><path d="M5.6 1.6h9v13.6h-9" fill="#fff" stroke="#454545" stroke-width="1.2"/><path d="M1 14.6h13.6" stroke="#454545" stroke-width="1.2"/><path d="M10.5 6.5v6" stroke="#1560bd" stroke-width="2"/><path d="M10.5 16l-4.2-4.6h8.4z" fill="#1560bd"/></g><g transform="translate(1295.0,94.0)"><path d="M1 6.2L5.6 1.6v13.6H1z" fill="#454545"/><path d="M5.6 1.6h9v13.6h-9" fill="#fff" stroke="#454545" stroke-width="1.2"/><path d="M1 14.6h13.6" stroke="#454545" stroke-width="1.2"/><path d="M10.5 10.5v5.5" stroke="#1560bd" stroke-width="2"/><path d="M10.5 7l-4.2 4.6h8.4z" fill="#1560bd"/></g><g transform="translate(1338.0,94.0)"><path d="M1 6.2L5.6 1.6v13.6H1z" fill="#a0a0a0"/><path d="M5.6 1.6h9v13.6h-9" fill="#eeeae6" stroke="#a0a0a0" stroke-width="1.2"/><path d="M1 14.6h13.6" stroke="#a0a0a0" stroke-width="1.2"/><path d="M13 13.5C14.4 9.6 12 6.6 8.6 7.6" stroke="#999" stroke-width="1.8" fill="none"/><path d="M5 8.4l5-1.8-1 5z" fill="#999"/></g><g transform="translate(1381.0,94.0)"><path d="M1 6.2L5.6 1.6v13.6H1z" fill="#a0a0a0"/><path d="M5.6 1.6h9v13.6h-9" fill="#eeeae6" stroke="#a0a0a0" stroke-width="1.2"/><path d="M1 14.6h13.6" stroke="#a0a0a0" stroke-width="1.2"/><path d="M13.90 11.50L16.10 11.50" stroke="#8a8a8a" stroke-width="1.8"/><path d="M13.20 13.20L14.75 14.75" stroke="#8a8a8a" stroke-width="1.8"/><path d="M11.50 13.90L11.50 16.10" stroke="#8a8a8a" stroke-width="1.8"/><path d="M9.80 13.20L8.25 14.75" stroke="#8a8a8a" stroke-width="1.8"/><path d="M9.10 11.50L6.90 11.50" stroke="#8a8a8a" stroke-width="1.8"/><path d="M9.80 9.80L8.25 8.25" stroke="#8a8a8a" stroke-width="1.8"/><path d="M11.50 9.10L11.50 6.90" stroke="#8a8a8a" stroke-width="1.8"/><path d="M13.20 9.80L14.75 8.25" stroke="#8a8a8a" stroke-width="1.8"/><circle cx="11.5" cy="11.5" r="3" fill="#8a8a8a"/><circle cx="11.5" cy="11.5" r="1.3" fill="#eeeae6"/></g><g transform="translate(1414.0,94.0)"><path d="M1 6.2L5.6 1.6v13.6H1z" fill="#454545"/><path d="M5.6 1.6h9v13.6h-9" fill="#fff" stroke="#454545" stroke-width="1.2"/><path d="M1 14.6h13.6" stroke="#454545" stroke-width="1.2"/><path d="M13.6 7.6a4.2 4.2 0 1 1 -3.4 -1.4" stroke="#1b6fd6" stroke-width="1.7" fill="none"/><path d="M12.6 2.6v5.4l-4.6-1.8z" fill="#1b6fd6"/></g><g transform="translate(1447.0,94.0)"><path d="M1 6.2L5.6 1.6v13.6H1z" fill="#454545"/><path d="M5.6 1.6h9v13.6h-9" fill="#fff" stroke="#454545" stroke-width="1.2"/><path d="M1 14.6h13.6" stroke="#454545" stroke-width="1.2"/><circle cx="11.8" cy="11.8" r="4.4" fill="#e0220f"/><path d="M9.9 9.9l3.8 3.8M13.700000000000001 9.9l-3.8 3.8" stroke="#fff" stroke-width="1.6"/></g></svg><div class="a" style="left:406px;top:58.5px;width:206px;height:21px;background:linear-gradient(#f6f6f6,#cfcfcf);border:1px solid #8f8f8f;box-sizing:border-box;border-radius:2px;"></div><div class="a" style="left:593px;top:60.5px;width:1px;height:17px;background:#9c9c9c"></div><svg style="left:0px;top:0px" width="1" height="1" viewBox="0 0 1 1"><path d="M598.0 66.4h10l-5 5.6z" fill="#1a1a1a"/></svg><svg style="left:413.5px;top:62.5px" width="14" height="13" viewBox="0 0 14 13"><rect x=".5" y=".5" width="12.5" height="12" fill="#111"/><rect x="1.5" y="1.5" width="3.5" height="10" fill="#e01010"/><rect x="5" y="1.5" width="3.5" height="10" fill="#10c010"/><rect x="8.5" y="1.5" width="3.5" height="10" fill="#1010e8"/></svg><div class="t" style="left:433.5px;top:62.0px;font-size:12.8px;color:#111;line-height:15px;">RGB</div><div class="a" style="left:0px;top:119px;width:1920px;height:928px;background:#404040"></div><div class="a" style="left:1726px;top:119px;width:1px;height:928px;background:#c8905a"></div><div class="a" style="left:0px;top:119px;width:27px;height:928px;background:#727272"></div><div class="a" style="left:26px;top:119px;width:1px;height:928px;background:#343434"></div><div class="a" style="left:1px;top:453px;width:25px;height:122px;background:#4b4b4b;box-sizing:border-box;border:1px solid #5c5c5c;border-right-color:#353535;border-bottom-color:#353535"></div><svg style="left:4.5px;top:553px" width="16" height="16" viewBox="0 0 16 16"><path d="M8 1l6.5 3v7.6l-6.5 3.4-6.5-3.4v-7.6z" fill="#7ed321" stroke="#2d5a06" stroke-width="1"/><path d="M1.5 4l6.5 3.2 6.5-3.2M8 7.2v7.8" fill="none" stroke="#2d5a06" stroke-width="1"/><path d="M8 7.2l6.5-3.2v7.6l-6.5 3.4z" fill="#5aa80e"/><path d="M8 1l6.5 3-6.5 3.2-6.5-3.2z" fill="#a4ec4a"/><path d="M8 1l6.5 3v7.6l-6.5 3.4-6.5-3.4v-7.6zM1.5 4l6.5 3.2 6.5-3.2M8 7.2v7.8" fill="none" stroke="#2d5a06" stroke-width=".9"/></svg><div class="vt" style="left:8.1px;top:548.0px;font-size:11.4px;color:#dcdcdc;letter-spacing:0.629px;">Object Explorer</div><div class="a" style="left:1px;top:578px;width:25px;height:101px;background:#4b4b4b;box-sizing:border-box;border:1px solid #5c5c5c;border-right-color:#353535;border-bottom-color:#353535"></div><svg style="left:4.5px;top:657px" width="16" height="16" viewBox="0 0 16 16"><path d="M1.5 1.5h8.5l4.5 4.5v8.5h-13z" fill="#12c3a4" stroke="#0a4a40" stroke-width="1"/><path d="M10 1.5v4.5h4.5" fill="#8ee8d8" stroke="#0a4a40" stroke-width="1"/></svg><div class="vt" style="left:8.1px;top:652.0px;font-size:11.4px;color:#dcdcdc;letter-spacing:0.455px;">Script Editor</div><div class="a" style="left:1px;top:681px;width:25px;height:112px;background:#4b4b4b;box-sizing:border-box;border:1px solid #5c5c5c;border-right-color:#353535;border-bottom-color:#353535"></div><svg style="left:4.5px;top:771px" width="16" height="16" viewBox="0 0 16 16"><rect x="1" y="1" width="14" height="14" fill="#3fa0ff" stroke="#0d3d75" stroke-width="1"/></svg><div class="vt" style="left:8.1px;top:766.0px;font-size:11.4px;color:#dcdcdc;letter-spacing:0.606px;">View Explorer</div><div class="a" style="left:1px;top:796px;width:25px;height:124px;background:#4b4b4b;box-sizing:border-box;border:1px solid #5c5c5c;border-right-color:#353535;border-bottom-color:#353535"></div><svg style="left:4.5px;top:898px" width="16" height="16" viewBox="0 0 16 16"><circle cx="8" cy="8" r="7" fill="#d551d8" stroke="#5a145c" stroke-width="1"/></svg><div class="vt" style="left:8.1px;top:893.0px;font-size:11.4px;color:#dcdcdc;letter-spacing:0.632px;">Format Explorer</div><div class="a" style="left:1px;top:922px;width:25px;height:125px;background:#4b4b4b;box-sizing:border-box;border:1px solid #5c5c5c;border-right-color:#353535;border-bottom-color:#353535"></div><svg style="left:4.5px;top:1025px" width="16" height="16" viewBox="0 0 16 16"><path d="M8 1l7 10-7 4-7-4z" fill="#ff8a2a" stroke="#6a2e00" stroke-width="1"/><path d="M8 1v14" stroke="#6a2e00" stroke-width="1"/><path d="M8 1l7 10-7 4z" fill="#e06a10" opacity=".6"/></svg><div class="vt" style="left:8.1px;top:1020.0px;font-size:11.4px;color:#dcdcdc;letter-spacing:0.620px;">History Explorer</div><div class="a" style="left:1894px;top:119px;width:26px;height:928px;background:#3f3f3f"></div><div class="a" style="left:1895px;top:247px;width:25px;height:568px;background:#737373"></div><div class="a" style="left:1895px;top:119.5px;width:25px;height:127.5px;background:#4b4b4b;box-sizing:border-box;border:1px solid #5c5c5c;border-right-color:#353535;border-bottom-color:#353535"></div><svg style="left:1899.7px;top:225px" width="16" height="16" viewBox="0 0 16 16"><path d="M12.16 9.72L15.02 10.91" stroke="#f2f2f2" stroke-width="2.6"/><path d="M9.72 12.16L10.91 15.02" stroke="#f2f2f2" stroke-width="2.6"/><path d="M6.28 12.16L5.09 15.02" stroke="#f2f2f2" stroke-width="2.6"/><path d="M3.84 9.72L0.98 10.91" stroke="#f2f2f2" stroke-width="2.6"/><path d="M3.84 6.28L0.98 5.09" stroke="#f2f2f2" stroke-width="2.6"/><path d="M6.28 3.84L5.09 0.98" stroke="#f2f2f2" stroke-width="2.6"/><path d="M9.72 3.84L10.91 0.98" stroke="#f2f2f2" stroke-width="2.6"/><path d="M12.16 6.28L15.02 5.09" stroke="#f2f2f2" stroke-width="2.6"/><circle cx="8" cy="8" r="4.8" fill="none" stroke="#f2f2f2" stroke-width="2"/></svg><div class="vt" style="left:1902.1px;top:220.0px;font-size:11.4px;color:#dcdcdc;letter-spacing:0.544px;">Process Explorer</div><div class="a" style="left:1895px;top:815px;width:25px;height:125.5px;background:#4b4b4b;box-sizing:border-box;border:1px solid #5c5c5c;border-right-color:#353535;border-bottom-color:#353535"></div><svg style="left:1899.7px;top:918.5px" width="16" height="16" viewBox="0 0 16 16"><path d="M1 2l14 3-9 10z" fill="#e8502a" stroke="#5a1200" stroke-width="1"/><path d="M1 2l8 6.5 6-3.5M9 8.5l-3 6.5" fill="none" stroke="#5a1200" stroke-width=".9"/></svg><div class="vt" style="left:1902.1px;top:913.5px;font-size:11.4px;color:#dcdcdc;letter-spacing:0.355px;">Process Console</div><div class="a" style="left:1895px;top:943.7px;width:25px;height:103.29999999999995px;background:#4b4b4b;box-sizing:border-box;border:1px solid #5c5c5c;border-right-color:#353535;border-bottom-color:#353535"></div><svg style="left:1899.7px;top:1025px" width="16" height="16" viewBox="0 0 16 16"><path d="M2 4v9a6 2.4 0 0 0 12 0v-9" fill="#d9c3a0" stroke="#6a5a3a" stroke-width="1"/><ellipse cx="8" cy="4" rx="6" ry="2.4" fill="#efe0c4" stroke="#6a5a3a" stroke-width="1"/></svg><div class="vt" style="left:1902.1px;top:1020.0px;font-size:11.4px;color:#dcdcdc;letter-spacing:0.493px;">File Explorer</div><div class="a" style="left:27px;top:119px;width:1092px;height:744px;background:#737373"></div><div class="a" style="left:26px;top:119px;width:1px;height:744px;background:#2e2e2e"></div><div class="t" style="left:447.5px;top:126.0px;font-size:12.6px;color:#d6d6d6;letter-spacing:1.209px;line-height:14px;text-shadow:0 0 .4px #d6d6d6;">RGB 1:6 Image14 | &lt;*new*&gt;</div><svg style="left:32px;top:125px" width="16" height="15" viewBox="0 0 16 15"><rect x="1" y="1" width="13.5" height="12.5" fill="#c9ccff"/><rect x="3.2" y="4.6" width="9" height="6.8" fill="#737373" stroke="#c9ccff" stroke-width="0"/><rect x="1" y="1" width="13.5" height="12.5" fill="none" stroke="#c9ccff" stroke-width="1.6"/></svg><svg style="left:0px;top:0px" width="1200" height="150" viewBox="0 0 1200 150"><path d="M1039 133.5h8" stroke="#f4f4f4" stroke-width="2.2"/><path d="M1059.5 128.8h9" stroke="#f4f4f4" stroke-width="1.8"/><path d="M1064 130.5l4.6 5.6h-9.2z" fill="#f4f4f4"/><path d="M1081 133.5h9M1085.5 129v9" stroke="#f4f4f4" stroke-width="2.4"/><path d="M1102.4 129.6l7.6 7.6M1110 129.6l-7.6 7.6" stroke="#f4f4f4" stroke-width="2"/></svg><svg style="left:27px;top:140px" width="26" height="175" viewBox="0 0 26 175"><path d="M2.500 26l20.500-18.500v72.500h-20.500z" fill="#7b4b33" stroke="#5b3420" stroke-width="1"/><path d="M2.500 97.500l20.500-16.500v87.500h-20.500z" fill="#c6aa7c" stroke="#8a744e" stroke-width="1"/></svg><div class="vt" style="left:34.600px;top:215.500px;font-size:12.400px;color:#ead9c8">Image14</div><div class="vt" style="left:34.600px;top:303.500px;font-size:12.400px;letter-spacing:.23px;color:#1c1408">Preview011</div><svg style="left:32px;top:789px" width="16" height="70" viewBox="0 0 16 70"><g stroke="#b9b9b9" stroke-width="1.1" fill="none"><path d="M3 3l9 9M12.5 6v6.5h-6.5"/><path d="M4.5 21.5h7v7h-7zM2.5 19.5l2 2M13.5 19.5l-2 2M2.5 30.5l2-2M13.5 30.5l-2-2"/><path d="M3 37h7v7h-7zM6.5 40.5h7v7h-7z"/><circle cx="8" cy="60" r="5"/><circle cx="8" cy="60" r="2"/></g></svg><div class="a" style="left:51px;top:145px;width:1066px;height:715px;border:1px solid #58f000;border-right:none;overflow:hidden"><svg style="left:0;top:0" width="1066" height="715" viewBox="0 0 1066 715"><defs><filter id="bl05" x="-50%" y="-50%" width="200%" height="200%"><feGaussianBlur stdDeviation=".55"/></filter><filter id="bl1" x="-50%" y="-50%" width="200%" height="200%"><feGaussianBlur stdDeviation="1.4"/></filter><filter id="bl2" x="-50%" y="-50%" width="200%" height="200%"><feGaussianBlur stdDeviation="2.2"/></filter><filter id="bl4" x="-50%" y="-50%" width="200%" height="200%"><feGaussianBlur stdDeviation="5"/></filter><filter id="nz" x="0" y="0" width="100%" height="100%"><feTurbulence type="fractalNoise" baseFrequency=".22" numOctaves="2" seed="7"/><feColorMatrix type="matrix" values="0 0 0 0 0.1  0 0 0 0 0  0 0 0 0 0.03  2 0 0 0 -0.72"/></filter></defs><defs><linearGradient id="redbg" x1="0" y1="0" x2="1" y2="0"><stop offset="0" stop-color="#6a0c0f"/><stop offset=".2" stop-color="#6e0d10"/><stop offset=".5" stop-color="#7a1011"/><stop offset="1" stop-color="#791010"/></linearGradient></defs><rect width="1066" height="715" fill="url(#redbg)"/><g transform="translate(485,83) rotate(26)"><ellipse rx="56" ry="19" fill="#8c1412" opacity=".6" filter="url(#bl4)"/></g><g transform="translate(59.5,669.5) rotate(38)"><ellipse rx="30" ry="25" fill="#8c1412" opacity=".55" filter="url(#bl4)"/></g><rect width="1066" height="715" filter="url(#nz)" opacity=".5"/><circle cx="482.2" cy="400.2" r="0.99" fill="#8a80b0" opacity="0.68"/><circle cx="202.4" cy="574.8" r="0.66" fill="#a09868" opacity="0.34"/><circle cx="323.4" cy="64.8" r="0.69" fill="#8f8cb8" opacity="0.57"/><circle cx="422.3" cy="323.9" r="0.68" fill="#8a80b0" opacity="0.31"/><circle cx="563.3" cy="42.6" r="0.53" fill="#8f8cb8" opacity="0.65"/><circle cx="347.8" cy="422.5" r="0.53" fill="#7880c8" opacity="0.52"/><circle cx="706.2" cy="327.0" r="0.80" fill="#8f8cb8" opacity="0.62"/><circle cx="336.1" cy="164.2" r="0.47" fill="#8f8cb8" opacity="0.48"/><circle cx="902.5" cy="276.4" r="1.14" fill="#8f8cb8" opacity="0.40"/><circle cx="988.2" cy="37.4" r="0.70" fill="#b0a890" opacity="0.33"/><circle cx="671.0" cy="556.6" r="0.48" fill="#7880c8" opacity="0.31"/><circle cx="437.1" cy="659.8" r="0.70" fill="#8f8cb8" opacity="0.33"/><circle cx="849.6" cy="127.0" r="0.61" fill="#a09868" opacity="0.74"/><circle cx="820.3" cy="299.7" r="0.59" fill="#a09868" opacity="0.30"/><circle cx="921.4" cy="697.0" r="0.80" fill="#8f8cb8" opacity="0.39"/><circle cx="420.3" cy="610.9" r="0.49" fill="#a09868" opacity="0.40"/><circle cx="275.3" cy="552.5" r="0.55" fill="#8f8cb8" opacity="0.33"/><circle cx="222.5" cy="455.2" r="0.58" fill="#8a80b0" opacity="0.50"/><circle cx="1022.4" cy="345.9" r="0.75" fill="#a09868" opacity="0.58"/><circle cx="331.3" cy="163.3" r="0.70" fill="#a09868" opacity="0.63"/><circle cx="1002.5" cy="140.6" r="1.15" fill="#8a80b0" opacity="0.34"/><circle cx="50.5" cy="78.0" r="0.54" fill="#6a78d0" opacity="0.62"/><circle cx="273.9" cy="589.0" r="0.55" fill="#a09868" opacity="0.72"/><circle cx="1041.7" cy="90.4" r="0.68" fill="#8a80b0" opacity="0.58"/><circle cx="298.7" cy="655.9" r="0.46" fill="#7880c8" opacity="0.49"/><circle cx="265.5" cy="33.3" r="0.64" fill="#a09868" opacity="0.34"/><circle cx="147.5" cy="322.0" r="0.71" fill="#8a80b0" opacity="0.56"/><circle cx="149.6" cy="25.1" r="0.77" fill="#6a78d0" opacity="0.44"/><circle cx="35.8" cy="427.8" r="0.47" fill="#7880c8" opacity="0.44"/><circle cx="1065.3" cy="53.8" r="0.71" fill="#6a78d0" opacity="0.63"/><circle cx="138.1" cy="688.8" r="0.48" fill="#b0a890" opacity="0.71"/><circle cx="928.6" cy="298.3" r="0.75" fill="#8a80b0" opacity="0.31"/><circle cx="706.0" cy="271.1" r="0.48" fill="#8f8cb8" opacity="0.59"/><circle cx="1058.9" cy="629.1" r="0.59" fill="#6a78d0" opacity="0.61"/><circle cx="488.0" cy="330.8" r="0.63" fill="#8a80b0" opacity="0.31"/><circle cx="641.0" cy="343.9" r="0.69" fill="#b0a890" opacity="0.65"/><circle cx="703.7" cy="347.7" r="0.95" fill="#a09868" opacity="0.61"/><circle cx="215.9" cy="121.3" r="1.06" fill="#b0a890" opacity="0.52"/><circle cx="257.4" cy="289.4" r="0.67" fill="#a09868" opacity="0.70"/><circle cx="409.8" cy="416.9" r="0.50" fill="#b0a890" opacity="0.46"/><circle cx="954.8" cy="29.0" r="0.79" fill="#a09868" opacity="0.35"/><circle cx="502.5" cy="661.9" r="0.58" fill="#8a80b0" opacity="0.52"/><circle cx="336.2" cy="600.0" r="0.98" fill="#8f8cb8" opacity="0.67"/><circle cx="296.5" cy="434.4" r="0.55" fill="#7880c8" opacity="0.44"/><circle cx="843.8" cy="13.7" r="0.61" fill="#8f8cb8" opacity="0.65"/><circle cx="284.0" cy="557.2" r="0.79" fill="#8f8cb8" opacity="0.50"/><circle cx="671.5" cy="468.4" r="0.79" fill="#6a78d0" opacity="0.39"/><circle cx="878.2" cy="183.1" r="0.71" fill="#8a80b0" opacity="0.62"/><circle cx="190.9" cy="194.7" r="0.69" fill="#8a80b0" opacity="0.53"/><circle cx="1062.6" cy="113.8" r="0.69" fill="#a09868" opacity="0.34"/><circle cx="994.2" cy="516.5" r="0.61" fill="#6a78d0" opacity="0.70"/><circle cx="7.2" cy="393.3" r="0.63" fill="#7880c8" opacity="0.51"/><circle cx="694.3" cy="146.5" r="0.74" fill="#6a78d0" opacity="0.72"/><circle cx="131.6" cy="173.2" r="0.48" fill="#7880c8" opacity="0.54"/><circle cx="843.0" cy="229.1" r="1.14" fill="#7880c8" opacity="0.53"/><circle cx="39.6" cy="244.6" r="0.55" fill="#8f8cb8" opacity="0.40"/><circle cx="924.8" cy="306.7" r="0.64" fill="#6a78d0" opacity="0.65"/><circle cx="149.8" cy="106.3" r="0.70" fill="#6a78d0" opacity="0.61"/><circle cx="1008.2" cy="352.2" r="0.83" fill="#a09868" opacity="0.50"/><circle cx="595.7" cy="594.3" r="0.51" fill="#8a80b0" opacity="0.68"/><circle cx="596.9" cy="222.9" r="0.75" fill="#8a80b0" opacity="0.39"/><circle cx="906.9" cy="692.4" r="0.65" fill="#a09868" opacity="0.48"/><circle cx="121.8" cy="3.5" r="0.64" fill="#8f8cb8" opacity="0.53"/><circle cx="427.0" cy="572.8" r="0.62" fill="#6a78d0" opacity="0.38"/><circle cx="992.3" cy="328.1" r="1.12" fill="#b0a890" opacity="0.42"/><circle cx="504.4" cy="90.8" r="0.74" fill="#b0a890" opacity="0.54"/><circle cx="115.8" cy="300.0" r="0.54" fill="#6a78d0" opacity="0.65"/><circle cx="24.3" cy="138.8" r="0.69" fill="#7880c8" opacity="0.63"/><circle cx="260.6" cy="356.7" r="0.65" fill="#8a80b0" opacity="0.58"/><circle cx="765.1" cy="501.5" r="0.81" fill="#6a78d0" opacity="0.49"/><circle cx="564.3" cy="114.2" r="0.67" fill="#6a78d0" opacity="0.40"/><circle cx="230.4" cy="388.2" r="0.50" fill="#6a78d0" opacity="0.58"/><circle cx="370.5" cy="129.5" r="0.76" fill="#a09868" opacity="0.40"/><circle cx="1064.2" cy="634.6" r="0.53" fill="#6a78d0" opacity="0.34"/><circle cx="413.5" cy="310.9" r="1.02" fill="#6a78d0" opacity="0.36"/><circle cx="429.4" cy="489.9" r="0.52" fill="#6a78d0" opacity="0.46"/><circle cx="875.2" cy="258.3" r="0.67" fill="#7880c8" opacity="0.53"/><circle cx="730.9" cy="135.1" r="0.49" fill="#8f8cb8" opacity="0.64"/><circle cx="653.8" cy="647.1" r="0.52" fill="#8f8cb8" opacity="0.39"/><circle cx="895.7" cy="708.1" r="0.84" fill="#8f8cb8" opacity="0.36"/><circle cx="725.9" cy="55.5" r="0.59" fill="#b0a890" opacity="0.53"/><circle cx="458.5" cy="429.7" r="0.70" fill="#a09868" opacity="0.38"/><circle cx="483.9" cy="528.6" r="0.52" fill="#a09868" opacity="0.34"/><circle cx="844.6" cy="231.4" r="0.74" fill="#6a78d0" opacity="0.72"/><circle cx="607.3" cy="136.5" r="0.57" fill="#7880c8" opacity="0.43"/><circle cx="123.9" cy="531.2" r="0.78" fill="#a09868" opacity="0.70"/><circle cx="937.9" cy="496.8" r="0.72" fill="#b0a890" opacity="0.39"/><circle cx="197.0" cy="570.1" r="0.49" fill="#7880c8" opacity="0.75"/><circle cx="962.3" cy="35.4" r="0.79" fill="#7880c8" opacity="0.45"/><circle cx="703.3" cy="407.2" r="0.59" fill="#b0a890" opacity="0.59"/><circle cx="747.5" cy="544.6" r="0.81" fill="#8a80b0" opacity="0.35"/><circle cx="252.7" cy="317.2" r="0.72" fill="#6a78d0" opacity="0.47"/><circle cx="104.9" cy="179.4" r="1.02" fill="#8a80b0" opacity="0.49"/><circle cx="555.0" cy="605.2" r="0.61" fill="#6a78d0" opacity="0.33"/><circle cx="637.0" cy="542.9" r="0.78" fill="#a09868" opacity="0.47"/><circle cx="1034.1" cy="611.8" r="0.66" fill="#b0a890" opacity="0.73"/><circle cx="448.5" cy="376.6" r="0.58" fill="#7880c8" opacity="0.52"/><circle cx="287.6" cy="664.6" r="0.71" fill="#8f8cb8" opacity="0.31"/><circle cx="261.2" cy="30.6" r="0.71" fill="#b0a890" opacity="0.32"/><circle cx="335.9" cy="284.4" r="0.70" fill="#7880c8" opacity="0.33"/><circle cx="965.3" cy="307.1" r="0.79" fill="#a09868" opacity="0.32"/><circle cx="105.0" cy="579.3" r="0.86" fill="#a09868" opacity="0.57"/><circle cx="122.7" cy="446.3" r="0.52" fill="#8f8cb8" opacity="0.46"/><circle cx="164.9" cy="259.8" r="0.60" fill="#8a80b0" opacity="0.42"/><circle cx="620.7" cy="300.0" r="0.64" fill="#a09868" opacity="0.73"/><circle cx="782.7" cy="170.5" r="0.76" fill="#8a80b0" opacity="0.58"/><circle cx="382.9" cy="194.1" r="0.65" fill="#8a80b0" opacity="0.39"/><circle cx="297.0" cy="171.2" r="1.00" fill="#6a78d0" opacity="0.71"/><circle cx="936.8" cy="28.2" r="0.54" fill="#b0a890" opacity="0.31"/><circle cx="40.6" cy="159.1" r="0.71" fill="#6a78d0" opacity="0.37"/><circle cx="250.2" cy="701.8" r="0.57" fill="#7880c8" opacity="0.45"/><circle cx="794.0" cy="599.6" r="0.49" fill="#8a80b0" opacity="0.68"/><circle cx="819.7" cy="317.7" r="0.59" fill="#a09868" opacity="0.47"/><circle cx="696.8" cy="707.3" r="0.64" fill="#6a78d0" opacity="0.67"/><circle cx="196.0" cy="467.5" r="0.61" fill="#7880c8" opacity="0.34"/><circle cx="88.5" cy="403.4" r="0.69" fill="#7880c8" opacity="0.67"/><circle cx="9.9" cy="221.8" r="1.04" fill="#6a78d0" opacity="0.44"/><circle cx="772.8" cy="496.2" r="0.50" fill="#7880c8" opacity="0.60"/><circle cx="348.7" cy="648.0" r="0.60" fill="#8a80b0" opacity="0.71"/><circle cx="1002.0" cy="653.1" r="0.73" fill="#7880c8" opacity="0.51"/><circle cx="235.8" cy="692.0" r="0.63" fill="#8f8cb8" opacity="0.46"/><circle cx="389.7" cy="259.8" r="0.59" fill="#a09868" opacity="0.63"/><circle cx="392.6" cy="279.0" r="0.66" fill="#a09868" opacity="0.38"/><circle cx="809.0" cy="629.8" r="0.46" fill="#8a80b0" opacity="0.33"/><circle cx="169.2" cy="211.6" r="0.74" fill="#b0a890" opacity="0.33"/><circle cx="582.9" cy="563.5" r="0.48" fill="#6a78d0" opacity="0.35"/><circle cx="334.5" cy="18.6" r="0.48" fill="#6a78d0" opacity="0.49"/><circle cx="759.2" cy="349.6" r="0.94" fill="#b0a890" opacity="0.48"/><circle cx="360.1" cy="692.3" r="0.62" fill="#8a80b0" opacity="0.66"/><circle cx="77.3" cy="442.0" r="0.71" fill="#6a78d0" opacity="0.46"/><circle cx="4.1" cy="270.3" r="0.61" fill="#8a80b0" opacity="0.59"/><circle cx="558.4" cy="507.7" r="0.60" fill="#b0a890" opacity="0.71"/><circle cx="261.9" cy="116.0" r="0.69" fill="#7880c8" opacity="0.39"/><circle cx="453.0" cy="208.8" r="0.82" fill="#7880c8" opacity="0.63"/><circle cx="323.5" cy="111.2" r="1.16" fill="#b0a890" opacity="0.31"/><circle cx="512.8" cy="572.3" r="0.52" fill="#7880c8" opacity="0.40"/><circle cx="250.9" cy="512.8" r="0.53" fill="#a09868" opacity="0.70"/><circle cx="429.1" cy="651.1" r="1.05" fill="#8a80b0" opacity="0.52"/><circle cx="277.7" cy="634.5" r="0.94" fill="#8a80b0" opacity="0.65"/><circle cx="98.5" cy="616.7" r="0.53" fill="#a09868" opacity="0.66"/><circle cx="410.4" cy="377.2" r="0.55" fill="#8f8cb8" opacity="0.60"/><circle cx="253.3" cy="7.8" r="0.58" fill="#a09868" opacity="0.62"/><circle cx="646.1" cy="112.5" r="0.56" fill="#7880c8" opacity="0.71"/><circle cx="863.5" cy="93.7" r="0.67" fill="#8a80b0" opacity="0.54"/><circle cx="160.6" cy="550.8" r="0.74" fill="#a09868" opacity="0.67"/><circle cx="87.9" cy="193.0" r="0.48" fill="#b0a890" opacity="0.61"/><circle cx="88.3" cy="535.2" r="0.63" fill="#8f8cb8" opacity="0.66"/><circle cx="444.5" cy="655.5" r="0.74" fill="#a09868" opacity="0.32"/><circle cx="440.4" cy="353.3" r="1.19" fill="#7880c8" opacity="0.44"/><circle cx="81.0" cy="218.6" r="0.70" fill="#7880c8" opacity="0.33"/><circle cx="149.8" cy="477.4" r="0.71" fill="#8f8cb8" opacity="0.59"/><circle cx="13.2" cy="269.6" r="0.53" fill="#8a80b0" opacity="0.35"/><circle cx="822.8" cy="612.1" r="0.70" fill="#8a80b0" opacity="0.37"/><circle cx="669.2" cy="670.3" r="0.78" fill="#b0a890" opacity="0.55"/><circle cx="92.7" cy="134.9" r="0.49" fill="#7880c8" opacity="0.73"/><circle cx="600.0" cy="517.5" r="0.74" fill="#8f8cb8" opacity="0.35"/><circle cx="662.8" cy="94.0" r="0.51" fill="#a09868" opacity="0.48"/><circle cx="892.2" cy="423.8" r="0.53" fill="#a09868" opacity="0.74"/><circle cx="462.4" cy="551.4" r="0.74" fill="#8a80b0" opacity="0.36"/><circle cx="219.0" cy="105.8" r="0.62" fill="#b0a890" opacity="0.58"/><circle cx="774.9" cy="438.4" r="0.73" fill="#a09868" opacity="0.60"/><circle cx="648.8" cy="13.3" r="0.57" fill="#6a78d0" opacity="0.50"/><circle cx="594.0" cy="146.5" r="0.55" fill="#8f8cb8" opacity="0.58"/><circle cx="168.8" cy="548.1" r="1.02" fill="#7880c8" opacity="0.58"/><circle cx="547.3" cy="410.5" r="0.78" fill="#6a78d0" opacity="0.62"/><circle cx="997.7" cy="405.7" r="0.68" fill="#8f8cb8" opacity="0.36"/><circle cx="509.4" cy="298.5" r="0.48" fill="#7880c8" opacity="0.42"/><circle cx="941.3" cy="323.4" r="0.53" fill="#8a80b0" opacity="0.54"/><circle cx="597.7" cy="400.6" r="0.77" fill="#7880c8" opacity="0.57"/><circle cx="130.7" cy="589.6" r="0.76" fill="#a09868" opacity="0.64"/><circle cx="387.1" cy="118.6" r="0.73" fill="#b0a890" opacity="0.31"/><circle cx="192.0" cy="705.7" r="1.06" fill="#7880c8" opacity="0.64"/><circle cx="903.3" cy="648.1" r="0.67" fill="#8f8cb8" opacity="0.37"/><circle cx="439.2" cy="23.6" r="0.49" fill="#b0a890" opacity="0.38"/><circle cx="554.1" cy="188.5" r="0.57" fill="#6a78d0" opacity="0.65"/><circle cx="769.3" cy="563.1" r="0.62" fill="#8f8cb8" opacity="0.51"/><circle cx="438.6" cy="446.0" r="0.72" fill="#7880c8" opacity="0.52"/><circle cx="1060.3" cy="599.3" r="0.96" fill="#b0a890" opacity="0.35"/><circle cx="122.2" cy="671.3" r="0.63" fill="#b0a890" opacity="0.71"/><circle cx="341.9" cy="39.1" r="0.77" fill="#6a78d0" opacity="0.47"/><circle cx="343.2" cy="564.5" r="1.15" fill="#a09868" opacity="0.36"/><circle cx="476.5" cy="359.4" r="0.47" fill="#6a78d0" opacity="0.35"/><circle cx="970.0" cy="389.7" r="0.78" fill="#8f8cb8" opacity="0.75"/><circle cx="779.0" cy="623.1" r="0.64" fill="#8a80b0" opacity="0.66"/><circle cx="236.4" cy="533.8" r="0.77" fill="#8f8cb8" opacity="0.53"/><circle cx="138.5" cy="630.8" r="0.61" fill="#7880c8" opacity="0.41"/><circle cx="319.0" cy="232.2" r="0.76" fill="#8a80b0" opacity="0.48"/><circle cx="380.0" cy="418.6" r="0.46" fill="#7880c8" opacity="0.44"/><circle cx="531.3" cy="667.8" r="0.99" fill="#a09868" opacity="0.39"/><circle cx="915.7" cy="495.2" r="0.56" fill="#7880c8" opacity="0.70"/><circle cx="17.1" cy="454.3" r="0.65" fill="#8a80b0" opacity="0.58"/><circle cx="204.1" cy="629.3" r="0.49" fill="#6a78d0" opacity="0.67"/><circle cx="1024.8" cy="195.8" r="0.76" fill="#7880c8" opacity="0.61"/><circle cx="999.7" cy="318.3" r="0.53" fill="#7880c8" opacity="0.35"/><circle cx="736.8" cy="192.3" r="0.63" fill="#7880c8" opacity="0.66"/><circle cx="397.1" cy="473.3" r="1.04" fill="#a09868" opacity="0.74"/><circle cx="954.6" cy="129.1" r="0.50" fill="#6a78d0" opacity="0.34"/><circle cx="1047.9" cy="314.8" r="0.64" fill="#8f8cb8" opacity="0.30"/><circle cx="625.3" cy="384.1" r="0.65" fill="#a09868" opacity="0.43"/><circle cx="805.6" cy="175.8" r="0.64" fill="#a09868" opacity="0.66"/><circle cx="160.7" cy="642.0" r="0.77" fill="#8a80b0" opacity="0.47"/><circle cx="990.6" cy="357.4" r="0.64" fill="#6a78d0" opacity="0.71"/><circle cx="342.0" cy="345.7" r="0.55" fill="#6a78d0" opacity="0.61"/><circle cx="554.9" cy="680.3" r="0.72" fill="#a09868" opacity="0.35"/><circle cx="464.3" cy="477.9" r="0.54" fill="#6a78d0" opacity="0.66"/><circle cx="251.5" cy="349.7" r="0.65" fill="#b0a890" opacity="0.42"/><circle cx="215.9" cy="694.0" r="0.61" fill="#a09868" opacity="0.45"/><circle cx="648.4" cy="435.1" r="0.63" fill="#6a78d0" opacity="0.42"/><circle cx="851.2" cy="51.9" r="1.03" fill="#8a80b0" opacity="0.56"/><circle cx="769.9" cy="445.6" r="0.60" fill="#6a78d0" opacity="0.44"/><circle cx="662.2" cy="375.7" r="0.66" fill="#8f8cb8" opacity="0.59"/><circle cx="544.3" cy="270.9" r="0.62" fill="#6a78d0" opacity="0.67"/><circle cx="838.6" cy="43.7" r="0.58" fill="#a09868" opacity="0.62"/><circle cx="1020.4" cy="91.8" r="0.66" fill="#a09868" opacity="0.37"/><circle cx="485.4" cy="532.6" r="0.53" fill="#8a80b0" opacity="0.36"/><circle cx="418.9" cy="213.1" r="0.48" fill="#8f8cb8" opacity="0.61"/><circle cx="764.3" cy="697.9" r="0.55" fill="#8f8cb8" opacity="0.55"/><circle cx="257.6" cy="330.0" r="0.95" fill="#7880c8" opacity="0.73"/><circle cx="984.1" cy="156.1" r="0.65" fill="#8f8cb8" opacity="0.63"/><circle cx="604.9" cy="652.1" r="1.17" fill="#a09868" opacity="0.51"/><circle cx="418.9" cy="602.8" r="0.72" fill="#a09868" opacity="0.49"/><circle cx="262.8" cy="567.2" r="0.62" fill="#b0a890" opacity="0.40"/><circle cx="498.6" cy="220.6" r="0.80" fill="#6a78d0" opacity="0.38"/><circle cx="519.3" cy="386.3" r="0.47" fill="#7880c8" opacity="0.46"/><circle cx="292.6" cy="13.3" r="0.54" fill="#b0a890" opacity="0.56"/><circle cx="692.3" cy="155.5" r="0.47" fill="#6a78d0" opacity="0.72"/><circle cx="383.5" cy="547.5" r="0.77" fill="#8f8cb8" opacity="0.75"/><circle cx="894.2" cy="321.7" r="0.95" fill="#7880c8" opacity="0.65"/><circle cx="553.6" cy="39.3" r="0.53" fill="#8f8cb8" opacity="0.38"/><circle cx="547.8" cy="91.3" r="0.59" fill="#b0a890" opacity="0.54"/><circle cx="145.0" cy="505.2" r="0.70" fill="#6a78d0" opacity="0.47"/><circle cx="938.2" cy="596.7" r="0.61" fill="#a09868" opacity="0.47"/><circle cx="923.1" cy="161.6" r="0.57" fill="#a09868" opacity="0.36"/><circle cx="904.2" cy="534.2" r="0.45" fill="#6a78d0" opacity="0.43"/><circle cx="714.7" cy="657.1" r="0.69" fill="#6a78d0" opacity="0.35"/><circle cx="825.9" cy="267.5" r="0.54" fill="#b0a890" opacity="0.35"/><circle cx="525.4" cy="350.3" r="0.91" fill="#6a78d0" opacity="0.43"/><circle cx="169.1" cy="287.8" r="0.51" fill="#6a78d0" opacity="0.62"/><circle cx="554.8" cy="531.1" r="1.12" fill="#b0a890" opacity="0.56"/><circle cx="747.7" cy="395.5" r="0.46" fill="#b0a890" opacity="0.35"/><circle cx="969.7" cy="652.4" r="0.58" fill="#8a80b0" opacity="0.43"/><circle cx="766.7" cy="633.5" r="0.46" fill="#7880c8" opacity="0.70"/><circle cx="603.1" cy="187.3" r="0.52" fill="#b0a890" opacity="0.47"/><circle cx="364.0" cy="641.9" r="0.70" fill="#a09868" opacity="0.65"/><circle cx="668.7" cy="443.9" r="0.60" fill="#7880c8" opacity="0.33"/><circle cx="494.6" cy="321.4" r="0.95" fill="#a09868" opacity="0.61"/><circle cx="290.9" cy="353.9" r="0.46" fill="#8a80b0" opacity="0.39"/><circle cx="243.6" cy="486.3" r="0.45" fill="#8a80b0" opacity="0.74"/><circle cx="3.7" cy="391.1" r="0.72" fill="#8f8cb8" opacity="0.58"/><circle cx="597.8" cy="594.2" r="0.93" fill="#7880c8" opacity="0.35"/><circle cx="20.6" cy="576.0" r="0.59" fill="#a09868" opacity="0.73"/><circle cx="878.8" cy="114.0" r="0.62" fill="#8a80b0" opacity="0.43"/><circle cx="442.2" cy="262.3" r="0.62" fill="#6a78d0" opacity="0.41"/><circle cx="346.4" cy="127.1" r="0.49" fill="#8f8cb8" opacity="0.75"/><circle cx="871.8" cy="633.2" r="0.75" fill="#8a80b0" opacity="0.65"/><circle cx="512.4" cy="116.2" r="1.15" fill="#8f8cb8" opacity="0.46"/><circle cx="423.6" cy="528.7" r="0.54" fill="#6a78d0" opacity="0.41"/><circle cx="763.0" cy="233.7" r="0.72" fill="#8a80b0" opacity="0.67"/><circle cx="604.9" cy="300.7" r="0.67" fill="#7880c8" opacity="0.66"/><circle cx="133.5" cy="269.5" r="0.53" fill="#a09868" opacity="0.74"/><circle cx="503.0" cy="496.1" r="0.77" fill="#7880c8" opacity="0.61"/><circle cx="447.0" cy="451.5" r="0.78" fill="#a09868" opacity="0.32"/><circle cx="760.3" cy="84.6" r="0.55" fill="#6a78d0" opacity="0.54"/><circle cx="854.6" cy="289.3" r="1.13" fill="#b0a890" opacity="0.38"/><circle cx="71.8" cy="313.7" r="1.06" fill="#a09868" opacity="0.48"/><circle cx="658.5" cy="547.2" r="0.96" fill="#6a78d0" opacity="0.40"/><circle cx="301.3" cy="619.7" r="0.74" fill="#8a80b0" opacity="0.72"/><circle cx="268.0" cy="349.1" r="0.56" fill="#8f8cb8" opacity="0.42"/><circle cx="606.4" cy="195.7" r="0.56" fill="#8f8cb8" opacity="0.52"/><circle cx="390.0" cy="185.6" r="0.47" fill="#7880c8" opacity="0.60"/><circle cx="4.3" cy="240.5" r="0.73" fill="#b0a890" opacity="0.52"/><circle cx="441.9" cy="577.0" r="0.47" fill="#8a80b0" opacity="0.58"/><circle cx="881.7" cy="180.5" r="0.55" fill="#a09868" opacity="0.75"/><circle cx="472.5" cy="596.1" r="0.51" fill="#8f8cb8" opacity="0.73"/><circle cx="574.6" cy="482.5" r="0.46" fill="#8a80b0" opacity="0.44"/><circle cx="548.2" cy="7.5" r="0.79" fill="#8f8cb8" opacity="0.65"/><circle cx="282.4" cy="175.2" r="1.00" fill="#7880c8" opacity="0.66"/><circle cx="882.3" cy="548.9" r="0.84" fill="#b0a890" opacity="0.48"/><circle cx="751.8" cy="179.1" r="0.81" fill="#8a80b0" opacity="0.36"/><circle cx="345.0" cy="517.9" r="0.55" fill="#7880c8" opacity="0.58"/><circle cx="479.5" cy="223.2" r="0.68" fill="#8a80b0" opacity="0.34"/><circle cx="356.9" cy="530.3" r="0.71" fill="#8a80b0" opacity="0.44"/><circle cx="219.6" cy="248.4" r="0.58" fill="#a09868" opacity="0.49"/><circle cx="10.1" cy="359.3" r="0.56" fill="#8a80b0" opacity="0.68"/><circle cx="811.7" cy="14.9" r="0.47" fill="#8a80b0" opacity="0.35"/><circle cx="1052.7" cy="307.5" r="0.89" fill="#b0a890" opacity="0.65"/><circle cx="946.4" cy="581.0" r="0.59" fill="#7880c8" opacity="0.70"/><circle cx="829.0" cy="375.4" r="0.71" fill="#6a78d0" opacity="0.47"/><circle cx="686.4" cy="151.8" r="0.76" fill="#6a78d0" opacity="0.58"/><circle cx="538.2" cy="405.9" r="0.74" fill="#6a78d0" opacity="0.63"/><circle cx="465.0" cy="334.1" r="0.63" fill="#b0a890" opacity="0.57"/><circle cx="610.6" cy="368.4" r="0.67" fill="#b0a890" opacity="0.43"/><circle cx="49.2" cy="39.0" r="0.64" fill="#7880c8" opacity="0.75"/><circle cx="786.7" cy="223.8" r="0.80" fill="#b0a890" opacity="0.32"/><circle cx="1032.0" cy="538.3" r="0.84" fill="#a09868" opacity="0.68"/><circle cx="692.1" cy="670.5" r="0.73" fill="#8a80b0" opacity="0.41"/><circle cx="278.7" cy="132.2" r="0.57" fill="#8a80b0" opacity="0.66"/><circle cx="484.0" cy="383.5" r="0.88" fill="#7880c8" opacity="0.73"/><circle cx="254.3" cy="76.7" r="0.71" fill="#a09868" opacity="0.33"/><circle cx="529.4" cy="40.0" r="1.19" fill="#8f8cb8" opacity="0.66"/><circle cx="161.8" cy="261.6" r="0.46" fill="#7880c8" opacity="0.73"/><circle cx="234.1" cy="206.3" r="0.67" fill="#8f8cb8" opacity="0.68"/><circle cx="657.8" cy="644.8" r="0.80" fill="#a09868" opacity="0.54"/><circle cx="337.3" cy="684.3" r="1.02" fill="#b0a890" opacity="0.47"/><circle cx="870.4" cy="500.4" r="0.78" fill="#6a78d0" opacity="0.57"/><circle cx="740.7" cy="129.2" r="0.69" fill="#b0a890" opacity="0.32"/><circle cx="296.6" cy="184.9" r="0.67" fill="#7880c8" opacity="0.39"/><circle cx="1060.5" cy="494.5" r="0.58" fill="#7880c8" opacity="0.65"/><circle cx="213.4" cy="51.1" r="0.58" fill="#8a80b0" opacity="0.48"/><circle cx="486.9" cy="362.1" r="0.94" fill="#6a78d0" opacity="0.49"/><circle cx="525.1" cy="84.1" r="0.76" fill="#8f8cb8" opacity="0.60"/><circle cx="485.0" cy="667.6" r="0.71" fill="#8a80b0" opacity="0.40"/><circle cx="681.9" cy="262.4" r="0.65" fill="#6a78d0" opacity="0.73"/><circle cx="312.3" cy="496.9" r="0.54" fill="#b0a890" opacity="0.47"/><circle cx="632.5" cy="619.4" r="0.55" fill="#8f8cb8" opacity="0.67"/><circle cx="906.4" cy="422.4" r="0.48" fill="#a09868" opacity="0.34"/><circle cx="387.6" cy="267.8" r="0.68" fill="#7880c8" opacity="0.75"/><circle cx="869.5" cy="624.3" r="0.50" fill="#8f8cb8" opacity="0.46"/><circle cx="495.5" cy="226.0" r="0.66" fill="#a09868" opacity="0.74"/><circle cx="1058.1" cy="282.5" r="0.68" fill="#6a78d0" opacity="0.35"/><circle cx="61.3" cy="714.8" r="0.73" fill="#a09868" opacity="0.53"/><circle cx="622.9" cy="355.6" r="0.63" fill="#8f8cb8" opacity="0.63"/><circle cx="89.0" cy="119.3" r="0.67" fill="#6a78d0" opacity="0.71"/><circle cx="707.1" cy="693.5" r="0.76" fill="#b0a890" opacity="0.51"/><circle cx="16.8" cy="614.7" r="1.16" fill="#8f8cb8" opacity="0.35"/><circle cx="440.2" cy="401.2" r="1.11" fill="#8f8cb8" opacity="0.44"/><circle cx="540.8" cy="89.1" r="0.50" fill="#8f8cb8" opacity="0.53"/><circle cx="328.8" cy="252.2" r="0.66" fill="#b0a890" opacity="0.32"/><circle cx="232.0" cy="323.0" r="0.61" fill="#8f8cb8" opacity="0.66"/><circle cx="537.0" cy="102.9" r="0.51" fill="#8a80b0" opacity="0.58"/><circle cx="920.9" cy="689.1" r="0.45" fill="#a09868" opacity="0.66"/><circle cx="116.8" cy="527.2" r="0.55" fill="#8a80b0" opacity="0.31"/><circle cx="117.5" cy="215.0" r="1.06" fill="#8f8cb8" opacity="0.48"/><circle cx="319.2" cy="153.5" r="0.68" fill="#b0a890" opacity="0.45"/><circle cx="521.3" cy="467.6" r="1.18" fill="#8a80b0" opacity="0.74"/><circle cx="988.3" cy="69.5" r="0.54" fill="#8a80b0" opacity="0.42"/><circle cx="392.1" cy="306.9" r="0.58" fill="#b0a890" opacity="0.45"/><circle cx="124.5" cy="222.5" r="0.51" fill="#b0a890" opacity="0.55"/><circle cx="426.1" cy="159.2" r="0.58" fill="#7880c8" opacity="0.46"/><circle cx="1013.7" cy="371.7" r="0.71" fill="#7880c8" opacity="0.48"/><circle cx="1030.1" cy="5.1" r="0.79" fill="#7880c8" opacity="0.73"/><circle cx="739.6" cy="600.7" r="0.72" fill="#8f8cb8" opacity="0.44"/><circle cx="530.5" cy="369.1" r="0.47" fill="#8f8cb8" opacity="0.40"/><circle cx="628.4" cy="577.5" r="1.06" fill="#7880c8" opacity="0.48"/><circle cx="304.6" cy="486.1" r="0.79" fill="#7880c8" opacity="0.45"/><circle cx="338.3" cy="585.8" r="0.67" fill="#8f8cb8" opacity="0.75"/><circle cx="522.7" cy="282.6" r="0.50" fill="#7880c8" opacity="0.59"/><circle cx="23.8" cy="668.0" r="0.65" fill="#8f8cb8" opacity="0.67"/><circle cx="510.8" cy="239.9" r="0.77" fill="#8f8cb8" opacity="0.38"/><circle cx="89.0" cy="490.0" r="0.71" fill="#6a78d0" opacity="0.50"/><circle cx="125.8" cy="228.7" r="0.48" fill="#8f8cb8" opacity="0.73"/><circle cx="379.4" cy="594.6" r="0.70" fill="#b0a890" opacity="0.44"/><circle cx="1016.8" cy="400.5" r="0.88" fill="#b0a890" opacity="0.45"/><circle cx="149.2" cy="677.4" r="0.55" fill="#b0a890" opacity="0.31"/><circle cx="460.5" cy="269.9" r="0.77" fill="#b0a890" opacity="0.50"/><circle cx="851.4" cy="365.7" r="0.64" fill="#a09868" opacity="0.65"/><circle cx="345.5" cy="10.5" r="0.68" fill="#b0a890" opacity="0.57"/><circle cx="554.3" cy="277.8" r="0.74" fill="#7880c8" opacity="0.65"/><circle cx="157.6" cy="503.2" r="0.48" fill="#b0a890" opacity="0.41"/><circle cx="278.5" cy="522.2" r="0.54" fill="#8f8cb8" opacity="0.66"/><circle cx="271.6" cy="173.9" r="0.77" fill="#8f8cb8" opacity="0.55"/><circle cx="1040.1" cy="650.4" r="0.62" fill="#a09868" opacity="0.38"/><circle cx="660.9" cy="485.8" r="0.50" fill="#6a78d0" opacity="0.46"/><circle cx="170.1" cy="350.5" r="0.61" fill="#7880c8" opacity="0.66"/><circle cx="104.1" cy="560.6" r="0.52" fill="#8a80b0" opacity="0.63"/><circle cx="366.9" cy="116.6" r="0.51" fill="#7880c8" opacity="0.61"/><circle cx="388.0" cy="680.0" r="0.55" fill="#6a78d0" opacity="0.74"/><circle cx="117.7" cy="256.0" r="0.76" fill="#6a78d0" opacity="0.43"/><circle cx="269.6" cy="94.1" r="0.55" fill="#7880c8" opacity="0.66"/><circle cx="1005.7" cy="108.8" r="0.74" fill="#8a80b0" opacity="0.68"/><circle cx="649.6" cy="388.8" r="0.64" fill="#6a78d0" opacity="0.62"/><circle cx="628.1" cy="456.5" r="0.60" fill="#7880c8" opacity="0.59"/><circle cx="578.3" cy="343.9" r="0.57" fill="#a09868" opacity="0.72"/><circle cx="539.0" cy="404.7" r="0.53" fill="#8a80b0" opacity="0.35"/><circle cx="1002.6" cy="469.9" r="0.77" fill="#8f8cb8" opacity="0.72"/><circle cx="1024.5" cy="139.6" r="0.57" fill="#a09868" opacity="0.33"/><circle cx="710.3" cy="48.5" r="0.65" fill="#6a78d0" opacity="0.74"/><circle cx="1039.0" cy="657.6" r="0.60" fill="#6a78d0" opacity="0.38"/><circle cx="561.5" cy="253.3" r="0.52" fill="#6a78d0" opacity="0.35"/><circle cx="148.7" cy="137.9" r="0.46" fill="#8a80b0" opacity="0.34"/><circle cx="958.8" cy="183.1" r="0.55" fill="#a09868" opacity="0.74"/><circle cx="1012.6" cy="661.6" r="1.17" fill="#8f8cb8" opacity="0.57"/><circle cx="848.0" cy="712.5" r="0.76" fill="#7880c8" opacity="0.72"/><circle cx="92.1" cy="371.3" r="0.81" fill="#8f8cb8" opacity="0.43"/><circle cx="320.6" cy="705.9" r="0.50" fill="#a09868" opacity="0.61"/><circle cx="554.1" cy="414.8" r="0.73" fill="#8f8cb8" opacity="0.47"/><circle cx="1021.4" cy="154.6" r="0.53" fill="#7880c8" opacity="0.45"/><circle cx="369.6" cy="10.7" r="0.54" fill="#8a80b0" opacity="0.47"/><circle cx="770.6" cy="372.6" r="0.68" fill="#b0a890" opacity="0.38"/><circle cx="159.9" cy="181.2" r="0.72" fill="#7880c8" opacity="0.38"/><circle cx="722.9" cy="436.3" r="0.65" fill="#8a80b0" opacity="0.69"/><circle cx="196.7" cy="166.0" r="0.57" fill="#6a78d0" opacity="0.39"/><circle cx="36.7" cy="177.2" r="0.69" fill="#8a80b0" opacity="0.41"/><circle cx="232.2" cy="296.3" r="0.95" fill="#7880c8" opacity="0.33"/><circle cx="78.0" cy="597.3" r="0.97" fill="#6a78d0" opacity="0.65"/><circle cx="360.5" cy="565.2" r="0.55" fill="#8a80b0" opacity="0.72"/><circle cx="72.7" cy="696.7" r="0.82" fill="#8f8cb8" opacity="0.47"/><circle cx="69.4" cy="653.9" r="0.52" fill="#b0a890" opacity="0.73"/><circle cx="993.0" cy="244.5" r="0.86" fill="#6a78d0" opacity="0.44"/><circle cx="45.6" cy="169.7" r="0.53" fill="#6a78d0" opacity="0.70"/><circle cx="712.4" cy="262.7" r="0.77" fill="#a09868" opacity="0.72"/><circle cx="76.4" cy="132.2" r="0.47" fill="#7880c8" opacity="0.44"/><circle cx="620.9" cy="195.8" r="0.74" fill="#b0a890" opacity="0.64"/><circle cx="561.5" cy="677.2" r="0.53" fill="#8f8cb8" opacity="0.71"/><circle cx="1039.9" cy="667.9" r="0.52" fill="#7880c8" opacity="0.59"/><circle cx="111.8" cy="345.8" r="1.04" fill="#7880c8" opacity="0.57"/><circle cx="901.8" cy="332.5" r="0.78" fill="#6a78d0" opacity="0.31"/><circle cx="813.0" cy="286.4" r="0.51" fill="#a09868" opacity="0.48"/><circle cx="876.9" cy="687.3" r="0.60" fill="#b0a890" opacity="0.58"/><circle cx="67.3" cy="17.6" r="0.51" fill="#8f8cb8" opacity="0.45"/><circle cx="903.9" cy="401.8" r="0.54" fill="#6a78d0" opacity="0.44"/><circle cx="380.1" cy="632.0" r="0.60" fill="#8a80b0" opacity="0.56"/><circle cx="273.3" cy="678.8" r="0.69" fill="#8a80b0" opacity="0.68"/><circle cx="940.2" cy="116.3" r="0.79" fill="#7880c8" opacity="0.64"/><circle cx="995.5" cy="224.2" r="0.59" fill="#6a78d0" opacity="0.73"/><circle cx="302.8" cy="69.3" r="0.57" fill="#8a80b0" opacity="0.35"/><circle cx="794.4" cy="572.4" r="0.69" fill="#6a78d0" opacity="0.52"/><circle cx="286.8" cy="410.6" r="0.61" fill="#8f8cb8" opacity="0.44"/><circle cx="681.4" cy="44.1" r="0.46" fill="#8a80b0" opacity="0.50"/><circle cx="90.2" cy="572.0" r="0.74" fill="#8f8cb8" opacity="0.41"/><circle cx="962.4" cy="360.3" r="0.64" fill="#8f8cb8" opacity="0.52"/><circle cx="514.0" cy="207.8" r="0.63" fill="#7880c8" opacity="0.72"/><circle cx="689.3" cy="493.1" r="0.55" fill="#6a78d0" opacity="0.71"/><circle cx="730.3" cy="570.2" r="0.73" fill="#a09868" opacity="0.35"/><circle cx="507.1" cy="510.8" r="0.73" fill="#8a80b0" opacity="0.60"/><circle cx="502.0" cy="460.5" r="0.59" fill="#6a78d0" opacity="0.69"/><circle cx="1040.8" cy="114.2" r="0.55" fill="#b0a890" opacity="0.44"/><circle cx="198.2" cy="496.4" r="0.79" fill="#8a80b0" opacity="0.59"/><circle cx="798.5" cy="478.4" r="0.59" fill="#b0a890" opacity="0.65"/><circle cx="931.2" cy="406.9" r="1.06" fill="#b0a890" opacity="0.40"/><circle cx="758.0" cy="27.9" r="1.00" fill="#a09868" opacity="0.40"/><circle cx="659.1" cy="84.1" r="0.60" fill="#b0a890" opacity="0.42"/><circle cx="199.7" cy="463.2" r="0.78" fill="#7880c8" opacity="0.45"/><circle cx="57.9" cy="19.0" r="0.65" fill="#7880c8" opacity="0.73"/><circle cx="825.2" cy="238.3" r="0.63" fill="#b0a890" opacity="0.33"/><circle cx="103.1" cy="504.2" r="0.71" fill="#8a80b0" opacity="0.41"/><circle cx="212.4" cy="415.3" r="0.56" fill="#8f8cb8" opacity="0.45"/><circle cx="1022.0" cy="211.4" r="1.14" fill="#8a80b0" opacity="0.49"/><circle cx="433.6" cy="168.3" r="0.79" fill="#8f8cb8" opacity="0.49"/><circle cx="507.4" cy="297.4" r="0.73" fill="#8a80b0" opacity="0.71"/><circle cx="267.8" cy="387.0" r="1.01" fill="#a09868" opacity="0.38"/><circle cx="1052.1" cy="439.9" r="0.79" fill="#6a78d0" opacity="0.56"/><circle cx="996.6" cy="191.7" r="0.46" fill="#8f8cb8" opacity="0.51"/><circle cx="461.0" cy="76.2" r="0.78" fill="#8f8cb8" opacity="0.55"/><circle cx="2.3" cy="332.4" r="0.75" fill="#b0a890" opacity="0.52"/><circle cx="836.5" cy="175.0" r="0.53" fill="#8a80b0" opacity="0.48"/><circle cx="92.7" cy="403.2" r="0.65" fill="#b0a890" opacity="0.31"/><circle cx="77.7" cy="279.6" r="0.49" fill="#a09868" opacity="0.68"/><circle cx="518.8" cy="420.3" r="0.79" fill="#8f8cb8" opacity="0.45"/><circle cx="23.4" cy="597.2" r="0.65" fill="#6a78d0" opacity="0.48"/><circle cx="945.6" cy="184.1" r="0.70" fill="#b0a890" opacity="0.39"/><circle cx="706.4" cy="146.4" r="0.52" fill="#8f8cb8" opacity="0.49"/><circle cx="323.8" cy="552.5" r="0.62" fill="#8a80b0" opacity="0.50"/><circle cx="400.8" cy="642.1" r="1.11" fill="#b0a890" opacity="0.70"/><circle cx="79.9" cy="162.2" r="0.66" fill="#8a80b0" opacity="0.60"/><circle cx="712.9" cy="311.1" r="0.53" fill="#8f8cb8" opacity="0.54"/><circle cx="1044.6" cy="244.3" r="0.46" fill="#b0a890" opacity="0.46"/><circle cx="454.8" cy="64.6" r="0.75" fill="#7880c8" opacity="0.75"/><circle cx="209.6" cy="652.6" r="0.65" fill="#a09868" opacity="0.68"/><circle cx="417.1" cy="422.1" r="0.72" fill="#6a78d0" opacity="0.46"/><circle cx="509.7" cy="183.2" r="0.59" fill="#a09868" opacity="0.74"/><circle cx="145.5" cy="558.2" r="0.70" fill="#8f8cb8" opacity="0.42"/><circle cx="604.6" cy="377.7" r="0.51" fill="#6a78d0" opacity="0.66"/><circle cx="527.1" cy="348.4" r="1.19" fill="#6a78d0" opacity="0.37"/><circle cx="645.8" cy="329.2" r="0.80" fill="#8a80b0" opacity="0.31"/><circle cx="309.4" cy="309.3" r="0.45" fill="#8a80b0" opacity="0.61"/><circle cx="735.8" cy="592.3" r="0.55" fill="#7880c8" opacity="0.56"/><circle cx="547.6" cy="385.7" r="0.59" fill="#7880c8" opacity="0.58"/><circle cx="889.5" cy="437.1" r="0.46" fill="#8f8cb8" opacity="0.59"/><circle cx="28.5" cy="136.8" r="0.47" fill="#8a80b0" opacity="0.31"/><circle cx="872.9" cy="614.6" r="0.70" fill="#6a78d0" opacity="0.44"/><circle cx="865.1" cy="646.6" r="0.70" fill="#8f8cb8" opacity="0.50"/><circle cx="865.9" cy="407.5" r="0.80" fill="#a09868" opacity="0.55"/><circle cx="641.7" cy="228.4" r="0.77" fill="#b0a890" opacity="0.70"/><circle cx="187.2" cy="130.3" r="0.72" fill="#b0a890" opacity="0.46"/><circle cx="753.0" cy="154.5" r="1.15" fill="#a09868" opacity="0.52"/><circle cx="63.0" cy="352.5" r="0.75" fill="#6a78d0" opacity="0.33"/><circle cx="896.6" cy="388.4" r="0.48" fill="#8f8cb8" opacity="0.57"/><circle cx="812.0" cy="351.7" r="0.59" fill="#8f8cb8" opacity="0.49"/><circle cx="968.9" cy="439.4" r="0.47" fill="#a09868" opacity="0.61"/><circle cx="343.7" cy="334.2" r="0.65" fill="#7880c8" opacity="0.41"/><circle cx="3.7" cy="660.5" r="0.46" fill="#7880c8" opacity="0.44"/><circle cx="631.1" cy="192.1" r="0.75" fill="#b0a890" opacity="0.60"/><circle cx="202.5" cy="389.7" r="1.15" fill="#6a78d0" opacity="0.50"/><circle cx="765.4" cy="174.6" r="0.58" fill="#7880c8" opacity="0.51"/><circle cx="563.8" cy="381.1" r="0.76" fill="#a09868" opacity="0.43"/><circle cx="315.7" cy="280.0" r="0.46" fill="#b0a890" opacity="0.43"/><circle cx="203.9" cy="621.1" r="0.69" fill="#6a78d0" opacity="0.47"/><circle cx="1006.4" cy="64.7" r="0.53" fill="#8a80b0" opacity="0.75"/><circle cx="977.5" cy="597.3" r="0.54" fill="#7880c8" opacity="0.54"/><circle cx="548.8" cy="221.5" r="1.01" fill="#8f8cb8" opacity="0.54"/><circle cx="120.1" cy="619.5" r="0.70" fill="#8f8cb8" opacity="0.50"/><circle cx="1055.0" cy="640.6" r="0.64" fill="#8f8cb8" opacity="0.56"/><circle cx="184.6" cy="331.8" r="1.07" fill="#a09868" opacity="0.72"/><circle cx="695.4" cy="580.9" r="1.17" fill="#8a80b0" opacity="0.31"/><circle cx="234.5" cy="469.5" r="0.48" fill="#7880c8" opacity="0.45"/><circle cx="1021.0" cy="399.5" r="0.67" fill="#7880c8" opacity="0.38"/><circle cx="849.1" cy="160.0" r="0.57" fill="#6a78d0" opacity="0.66"/><circle cx="149.8" cy="144.3" r="0.51" fill="#b0a890" opacity="0.59"/><circle cx="1049.4" cy="575.6" r="1.10" fill="#7880c8" opacity="0.59"/><circle cx="655.8" cy="668.8" r="0.65" fill="#b0a890" opacity="0.70"/><circle cx="699.8" cy="277.2" r="0.60" fill="#6a78d0" opacity="0.74"/><circle cx="255.8" cy="199.4" r="1.07" fill="#8f8cb8" opacity="0.41"/><circle cx="740.9" cy="272.4" r="1.07" fill="#8f8cb8" opacity="0.74"/><circle cx="713.9" cy="448.9" r="0.70" fill="#b0a890" opacity="0.30"/><circle cx="437.5" cy="420.5" r="0.54" fill="#8f8cb8" opacity="0.31"/><circle cx="1047.7" cy="265.4" r="0.50" fill="#8a80b0" opacity="0.59"/><circle cx="648.0" cy="145.8" r="0.68" fill="#6a78d0" opacity="0.55"/><circle cx="254.6" cy="135.6" r="0.48" fill="#8f8cb8" opacity="0.36"/><circle cx="408.9" cy="161.2" r="0.58" fill="#a09868" opacity="0.64"/><circle cx="770.1" cy="36.9" r="0.50" fill="#a09868" opacity="0.58"/><circle cx="955.4" cy="172.7" r="0.50" fill="#6a78d0" opacity="0.32"/><circle cx="902.2" cy="430.1" r="0.81" fill="#8f8cb8" opacity="0.40"/><circle cx="191.8" cy="322.0" r="0.48" fill="#8a80b0" opacity="0.38"/><circle cx="179.8" cy="382.9" r="0.50" fill="#8a80b0" opacity="0.64"/><circle cx="102.8" cy="4.0" r="0.80" fill="#8f8cb8" opacity="0.39"/><circle cx="357.9" cy="6.6" r="1.04" fill="#b0a890" opacity="0.43"/><circle cx="304.8" cy="475.3" r="0.73" fill="#7880c8" opacity="0.72"/><circle cx="114.8" cy="466.9" r="0.55" fill="#a09868" opacity="0.64"/><circle cx="836.1" cy="500.1" r="0.87" fill="#b0a890" opacity="0.69"/><circle cx="82.6" cy="637.9" r="5.28" fill="#1f1f8a" opacity=".85" filter="url(#bl1)"/><circle cx="82.6" cy="637.9" r="2.4" fill="#5a64f0" filter="url(#bl05)"/><circle cx="82.6" cy="637.9" r="1.008" fill="#dcd8ff" filter="url(#bl05)"/><circle cx="161" cy="682.8" r="5.06" fill="#1f1f8a" opacity=".85" filter="url(#bl1)"/><circle cx="161" cy="682.8" r="2.3" fill="#5a64f0" filter="url(#bl05)"/><circle cx="161" cy="682.8" r="0.9659999999999999" fill="#dcd8ff" filter="url(#bl05)"/><circle cx="501.3" cy="103.3" r="4.18" fill="#1f1f8a" opacity=".85" filter="url(#bl1)"/><circle cx="501.3" cy="103.3" r="1.9" fill="#5a64f0" filter="url(#bl05)"/><circle cx="501.3" cy="103.3" r="0.7979999999999999" fill="#dcd8ff" filter="url(#bl05)"/><circle cx="433" cy="21" r="2.4200000000000004" fill="#1f1f8a" opacity=".85" filter="url(#bl1)"/><circle cx="433" cy="21" r="1.1" fill="#5a64f0" filter="url(#bl05)"/><circle cx="433" cy="21" r="0.462" fill="#dcd8ff" filter="url(#bl05)"/><circle cx="568" cy="30" r="2.4200000000000004" fill="#1f1f8a" opacity=".85" filter="url(#bl1)"/><circle cx="568" cy="30" r="1.1" fill="#5a64f0" filter="url(#bl05)"/><circle cx="568" cy="30" r="0.462" fill="#dcd8ff" filter="url(#bl05)"/><circle cx="637" cy="66" r="2.2" fill="#1f1f8a" opacity=".85" filter="url(#bl1)"/><circle cx="637" cy="66" r="1" fill="#5a64f0" filter="url(#bl05)"/><circle cx="637" cy="66" r="0.42" fill="#dcd8ff" filter="url(#bl05)"/><circle cx="968" cy="136" r="2.2" fill="#1f1f8a" opacity=".85" filter="url(#bl1)"/><circle cx="968" cy="136" r="1" fill="#5a64f0" filter="url(#bl05)"/><circle cx="968" cy="136" r="0.42" fill="#dcd8ff" filter="url(#bl05)"/><circle cx="569.5" cy="28" r="2.3400000000000003" fill="#3a2a20" opacity=".5" filter="url(#bl1)"/><circle cx="569.5" cy="28" r="1.3" fill="#d8b030" filter="url(#bl05)"/><circle cx="867.5" cy="26.5" r="2.3400000000000003" fill="#3a2a20" opacity=".5" filter="url(#bl1)"/><circle cx="867.5" cy="26.5" r="1.3" fill="#c8b030" filter="url(#bl05)"/><circle cx="771" cy="77" r="1.8" fill="#3a2a20" opacity=".5" filter="url(#bl1)"/><circle cx="771" cy="77" r="1" fill="#c0b040" filter="url(#bl05)"/><circle cx="656" cy="96.5" r="2.52" fill="#3a2a20" opacity=".5" filter="url(#bl1)"/><circle cx="656" cy="96.5" r="1.4" fill="#5a8ae8" filter="url(#bl05)"/><circle cx="858.5" cy="148.5" r="2.3400000000000003" fill="#3a2a20" opacity=".5" filter="url(#bl1)"/><circle cx="858.5" cy="148.5" r="1.3" fill="#4a6ae8" filter="url(#bl05)"/><circle cx="613" cy="41" r="1.8" fill="#3a2a20" opacity=".5" filter="url(#bl1)"/><circle cx="613" cy="41" r="1" fill="#a0a0d8" filter="url(#bl05)"/><circle cx="608.5" cy="44" r="1.8" fill="#3a2a20" opacity=".5" filter="url(#bl1)"/><circle cx="608.5" cy="44" r="1" fill="#9090d0" filter="url(#bl05)"/><circle cx="806" cy="55.5" r="1.8" fill="#3a2a20" opacity=".5" filter="url(#bl1)"/><circle cx="806" cy="55.5" r="1" fill="#a0a0c0" filter="url(#bl05)"/><circle cx="815.5" cy="58.5" r="1.8" fill="#3a2a20" opacity=".5" filter="url(#bl1)"/><circle cx="815.5" cy="58.5" r="1" fill="#a090c0" filter="url(#bl05)"/><circle cx="574.5" cy="115" r="1.8" fill="#3a2a20" opacity=".5" filter="url(#bl1)"/><circle cx="574.5" cy="115" r="1" fill="#b0b060" filter="url(#bl05)"/><circle cx="116" cy="479" r="2.7" fill="#3a2a20" opacity=".5" filter="url(#bl1)"/><circle cx="116" cy="479" r="1.5" fill="#c0b8e0" filter="url(#bl05)"/><g transform="translate(485,83) rotate(26)"><path d="M-41 0C-24 -10 -9 -13 0 -13C10 -13 27 -8 41 0C27 9 10 13 0 13C-9 13 -24 9 -41 0z" fill="#2a1e1e" filter="url(#bl2)"/><ellipse rx="33" ry="5.200" fill="#4d525c" filter="url(#bl2)"/><ellipse rx="27" ry="2.600" fill="#8a929e" filter="url(#bl1)"/><ellipse cx="-8" cy="-.5" rx="7" ry="2" fill="#d2cab6" filter="url(#bl1)"/><ellipse cx="5" cy="2.500" rx="7" ry="2.600" fill="#b86a2c" filter="url(#bl1)"/><ellipse cx="0" cy="1.500" rx="3.600" ry="3.600" fill="#ee4430" filter="url(#bl1)"/></g><g transform="translate(59.5,669.5) rotate(38)"><ellipse rx="15" ry="11.500" fill="#241a1a" filter="url(#bl2)"/><ellipse rx="8.500" ry="6" fill="#5a5560" filter="url(#bl2)"/><ellipse rx="3.400" ry="2.600" fill="#a898b8" filter="url(#bl1)"/><ellipse rx="1.500" ry="1.300" fill="#f090e8" filter="url(#bl05)"/></g></svg></div><div class="t" style="left:55.0px;top:150.0px;font-size:11.6px;color:#f0f0f0;letter-spacing:0.525px;line-height:12px;">Preview011</div><svg style="left:1272.9px;top:123.2px" width="144.8" height="26.6" viewBox="0 0 144.8 26.6"><path d="M.5 .5h134.0l9.3 9.3v15.3h-142.8z" fill="#b3b3b3" stroke="#8d8d8d" stroke-width="1"/><path d="M.5 25.1v-24.6h134.0" fill="none" stroke="#c9c9c9" stroke-width="1"/><path d="M134.5 .5l9.3 9.3" stroke="#6a6a6a" stroke-width="1.200"/></svg><svg style="left:1273.4px;top:125.0px" width="22" height="22" viewBox="0 0 22 22"><g transform="translate(0,0) scale(.8,1)"><path d="M11 1l9.500 4.800v10.400l-9.500 4.800-9.500-4.800v-10.400z" fill="#2b95f0"/><path d="M11 1l9.500 4.800-9.500 4.600-9.500-4.600z" fill="#1f8df2"/><path d="M1.500 5.800l9.500 4.600v10.600l-9.500-4.800z" fill="#6cc0ff"/><path d="M20.500 5.800l-9.500 4.600v10.600l9.500-4.800z" fill="#1272d4"/></g></svg><div class="a" style="left:1288.0px;top:124.10000000000001px;width:9.7px;height:23.9px;background:#3c3c3c"></div><div class="vt" style="left:1288.4px;top:147.2px;font-size:9.400px;font-weight:bold;color:#fff;letter-spacing:-.15px">XISF</div><div class="t" style="left:1302.1px;top:130.0px;font-size:11.3px;color:#151515;letter-spacing:0.389px;line-height:12px;">Syn_Lum_Master</div><svg style="left:0px;top:0px" width="1" height="1" viewBox="0 0 1 1"><path d="M1408.8999999999999 145.10000000000002v-3.600l3 3.600v-3.600" stroke="#111" stroke-width="1.150" stroke-linejoin="bevel" fill="none"/></svg><svg style="left:1561.2px;top:126.2px" width="144.3" height="26.6" viewBox="0 0 144.3 26.6"><path d="M.5 .5h133.5l9.3 9.3v15.3h-142.3z" fill="#b3b3b3" stroke="#8d8d8d" stroke-width="1"/><path d="M.5 25.1v-24.6h133.5" fill="none" stroke="#c9c9c9" stroke-width="1"/><path d="M134.0 .5l9.3 9.3" stroke="#6a6a6a" stroke-width="1.200"/></svg><svg style="left:1561.7px;top:128.0px" width="22" height="22" viewBox="0 0 22 22"><g transform="translate(0,0) scale(.8,1)"><path d="M11 1l9.500 4.800v10.400l-9.500 4.800-9.500-4.800v-10.400z" fill="#2b95f0"/><path d="M11 1l9.500 4.800-9.500 4.600-9.500-4.600z" fill="#1f8df2"/><path d="M1.500 5.800l9.500 4.600v10.600l-9.500-4.800z" fill="#6cc0ff"/><path d="M20.500 5.800l-9.500 4.600v10.600l9.500-4.800z" fill="#1272d4"/></g></svg><div class="a" style="left:1576.3px;top:127.10000000000001px;width:9.7px;height:23.9px;background:#3c3c3c"></div><div class="vt" style="left:1576.7px;top:150.2px;font-size:9.400px;font-weight:bold;color:#fff;letter-spacing:-.15px">XISF</div><div class="t" style="left:1590.4px;top:133.0px;font-size:11.3px;color:#151515;letter-spacing:0.372px;line-height:12px;">Red_Driz_Master</div><svg style="left:0px;top:0px" width="1" height="1" viewBox="0 0 1 1"><path d="M1696.6999999999998 148.10000000000002v-3.600l3 3.600v-3.600" stroke="#111" stroke-width="1.150" stroke-linejoin="bevel" fill="none"/></svg><svg style="left:1561.2px;top:156.2px" width="157.2" height="26.6" viewBox="0 0 157.2 26.6"><path d="M.5 .5h146.39999999999998l9.3 9.3v15.3h-155.2z" fill="#b3b3b3" stroke="#8d8d8d" stroke-width="1"/><path d="M.5 25.1v-24.6h146.39999999999998" fill="none" stroke="#c9c9c9" stroke-width="1"/><path d="M146.89999999999998 .5l9.3 9.3" stroke="#6a6a6a" stroke-width="1.200"/></svg><svg style="left:1561.7px;top:158.0px" width="22" height="22" viewBox="0 0 22 22"><g transform="translate(0,0) scale(.8,1)"><path d="M11 1l9.500 4.800v10.400l-9.500 4.800-9.500-4.800v-10.400z" fill="#2b95f0"/><path d="M11 1l9.500 4.800-9.500 4.600-9.500-4.600z" fill="#1f8df2"/><path d="M1.500 5.800l9.500 4.600v10.600l-9.500-4.800z" fill="#6cc0ff"/><path d="M20.500 5.800l-9.500 4.600v10.600l9.500-4.800z" fill="#1272d4"/></g></svg><div class="a" style="left:1576.3px;top:157.1px;width:9.7px;height:23.9px;background:#3c3c3c"></div><div class="vt" style="left:1576.7px;top:180.2px;font-size:9.400px;font-weight:bold;color:#fff;letter-spacing:-.15px">XISF</div><div class="t" style="left:1590.4px;top:163.0px;font-size:11.3px;color:#151515;letter-spacing:0.459px;line-height:12px;">Green_Driz_Master</div><svg style="left:0px;top:0px" width="1" height="1" viewBox="0 0 1 1"><path d="M1709.6 178.1v-3.600l3 3.600v-3.600" stroke="#111" stroke-width="1.150" stroke-linejoin="bevel" fill="none"/></svg><svg style="left:1561.2px;top:186.2px" width="147.4" height="26.6" viewBox="0 0 147.4 26.6"><path d="M.5 .5h136.6l9.3 9.3v15.3h-145.4z" fill="#b3b3b3" stroke="#8d8d8d" stroke-width="1"/><path d="M.5 25.1v-24.6h136.6" fill="none" stroke="#c9c9c9" stroke-width="1"/><path d="M137.1 .5l9.3 9.3" stroke="#6a6a6a" stroke-width="1.200"/></svg><svg style="left:1561.7px;top:188.0px" width="22" height="22" viewBox="0 0 22 22"><g transform="translate(0,0) scale(.8,1)"><path d="M11 1l9.500 4.800v10.400l-9.500 4.800-9.500-4.800v-10.400z" fill="#2b95f0"/><path d="M11 1l9.500 4.800-9.500 4.600-9.500-4.600z" fill="#1f8df2"/><path d="M1.500 5.800l9.500 4.600v10.600l-9.500-4.800z" fill="#6cc0ff"/><path d="M20.500 5.800l-9.500 4.600v10.600l9.500-4.800z" fill="#1272d4"/></g></svg><div class="a" style="left:1576.3px;top:187.1px;width:9.7px;height:23.9px;background:#3c3c3c"></div><div class="vt" style="left:1576.7px;top:210.2px;font-size:9.400px;font-weight:bold;color:#fff;letter-spacing:-.15px">XISF</div><div class="t" style="left:1590.4px;top:193.0px;font-size:11.3px;color:#151515;letter-spacing:0.425px;line-height:12px;">Blue_Driz_Master</div><svg style="left:0px;top:0px" width="1" height="1" viewBox="0 0 1 1"><path d="M1699.8 208.1v-3.600l3 3.600v-3.600" stroke="#111" stroke-width="1.150" stroke-linejoin="bevel" fill="none"/></svg><svg style="left:1261.6px;top:215.2px" width="180.6" height="26.6" viewBox="0 0 180.6 26.6"><path d="M.5 .5h169.79999999999998l9.3 9.3v15.3h-178.6z" fill="#b3b3b3" stroke="#8d8d8d" stroke-width="1"/><path d="M.5 25.1v-24.6h169.79999999999998" fill="none" stroke="#c9c9c9" stroke-width="1"/><path d="M170.29999999999998 .5l9.3 9.3" stroke="#6a6a6a" stroke-width="1.200"/></svg><svg style="left:1264.1px;top:217.0px" width="22" height="22" viewBox="0 0 22 22"><path d="M11 1l9.500 4.800v10.400l-9.500 4.800-9.500-4.800v-10.400z" fill="#2b95f0"/><path d="M11 1l9.500 4.800-9.500 4.600-9.500-4.600z" fill="#1f8df2"/><path d="M1.500 5.800l9.500 4.600v10.600l-9.500-4.800z" fill="#6cc0ff"/><path d="M20.500 5.800l-9.500 4.600v10.600l9.500-4.800z" fill="#1272d4"/></svg><div class="t" style="left:1290.8px;top:222.0px;font-size:11.3px;color:#151515;letter-spacing:0.397px;line-height:12px;">Syn_Lum_Master_clone</div><svg style="left:0px;top:0px" width="1" height="1" viewBox="0 0 1 1"><path d="M1433.3999999999996 237.1v-3.600l3 3.600v-3.600" stroke="#111" stroke-width="1.150" stroke-linejoin="bevel" fill="none"/></svg><svg style="left:1562.9px;top:215.7px" width="98.80000000000001" height="26.6" viewBox="0 0 98.80000000000001 26.6"><path d="M.5 .5h88.00000000000001l9.3 9.3v15.3h-96.80000000000001z" fill="#b3b3b3" stroke="#8d8d8d" stroke-width="1"/><path d="M.5 25.1v-24.6h88.00000000000001" fill="none" stroke="#c9c9c9" stroke-width="1"/><path d="M88.50000000000001 .5l9.3 9.3" stroke="#6a6a6a" stroke-width="1.200"/></svg><svg style="left:1565.4px;top:217.5px" width="22" height="22" viewBox="0 0 22 22"><path d="M11 1l9.500 4.800v10.400l-9.500 4.800-9.500-4.800v-10.400z" fill="#2b95f0"/><path d="M11 1l9.500 4.800-9.500 4.600-9.500-4.600z" fill="#1f8df2"/><path d="M1.500 5.800l9.500 4.600v10.600l-9.500-4.800z" fill="#6cc0ff"/><path d="M20.500 5.800l-9.500 4.600v10.600l9.500-4.800z" fill="#1272d4"/></svg><div class="t" style="left:1592.1px;top:222.0px;font-size:11.3px;color:#151515;letter-spacing:0.575px;line-height:12px;">Image10</div><svg style="left:0px;top:0px" width="1" height="1" viewBox="0 0 1 1"><path d="M1652.8999999999999 237.6v-3.600l3 3.600v-3.600" stroke="#111" stroke-width="1.150" stroke-linejoin="bevel" fill="none"/></svg><svg style="left:1656.1px;top:276.7px" width="69.30000000000001" height="26.6" viewBox="0 0 69.30000000000001 26.6"><path d="M.5 .5h58.500000000000014l9.3 9.3v15.3h-67.30000000000001z" fill="#b3b3b3" stroke="#8d8d8d" stroke-width="1"/><path d="M.5 25.1v-24.6h58.500000000000014" fill="none" stroke="#c9c9c9" stroke-width="1"/><path d="M59.000000000000014 .5l9.3 9.3" stroke="#6a6a6a" stroke-width="1.200"/></svg><svg style="left:1658.6px;top:278.5px" width="22" height="22" viewBox="0 0 22 22"><path d="M11 1l9.500 4.800v10.400l-9.500 4.800-9.500-4.800v-10.400z" fill="#2b95f0"/><path d="M11 1l9.500 4.800-9.500 4.600-9.500-4.600z" fill="#1f8df2"/><path d="M1.500 5.800l9.500 4.600v10.600l-9.500-4.800z" fill="#6cc0ff"/><path d="M20.500 5.800l-9.500 4.600v10.600l9.500-4.800z" fill="#1272d4"/></svg><div class="t" style="left:1685.3px;top:284.0px;font-size:11.3px;color:#151515;letter-spacing:-1.159px;line-height:12px;">PSF</div><svg style="left:0px;top:0px" width="1" height="1" viewBox="0 0 1 1"><path d="M1716.5999999999997 298.6v-3.600l3 3.600v-3.600" stroke="#111" stroke-width="1.150" stroke-linejoin="bevel" fill="none"/></svg><svg style="left:1622.9px;top:310.2px" width="134.8" height="26.6" viewBox="0 0 134.8 26.6"><path d="M.5 .5h124.00000000000001l9.3 9.3v15.3h-132.8z" fill="#b3b3b3" stroke="#8d8d8d" stroke-width="1"/><path d="M.5 25.1v-24.6h124.00000000000001" fill="none" stroke="#c9c9c9" stroke-width="1"/><path d="M124.50000000000001 .5l9.3 9.3" stroke="#6a6a6a" stroke-width="1.200"/></svg><svg style="left:1625.4px;top:312.0px" width="22" height="22" viewBox="0 0 22 22"><path d="M11 1l9.500 4.800v10.400l-9.500 4.800-9.500-4.800v-10.400z" fill="#2b95f0"/><path d="M11 1l9.500 4.800-9.500 4.600-9.500-4.600z" fill="#1f8df2"/><path d="M1.500 5.800l9.500 4.600v10.600l-9.500-4.800z" fill="#6cc0ff"/><path d="M20.500 5.800l-9.500 4.600v10.600l9.500-4.800z" fill="#1272d4"/></svg><div class="t" style="left:1652.1px;top:317.0px;font-size:11.3px;color:#151515;letter-spacing:0.517px;line-height:12px;">Image10_clone</div><svg style="left:0px;top:0px" width="1" height="1" viewBox="0 0 1 1"><path d="M1748.8999999999999 332.1v-3.600l3 3.600v-3.600" stroke="#111" stroke-width="1.150" stroke-linejoin="bevel" fill="none"/></svg><svg style="left:1641.1px;top:400.7px" width="114.80000000000001" height="26.6" viewBox="0 0 114.80000000000001 26.6"><path d="M.5 .5h104.00000000000001l9.3 9.3v15.3h-112.80000000000001z" fill="#b3b3b3" stroke="#8d8d8d" stroke-width="1"/><path d="M.5 25.1v-24.6h104.00000000000001" fill="none" stroke="#c9c9c9" stroke-width="1"/><path d="M104.50000000000001 .5l9.3 9.3" stroke="#6a6a6a" stroke-width="1.200"/></svg><svg style="left:1643.6px;top:402.5px" width="22" height="22" viewBox="0 0 22 22"><path d="M11 1l9.500 4.800v10.400l-9.500 4.800-9.500-4.800v-10.400z" fill="#2b95f0"/><path d="M11 1l9.500 4.800-9.500 4.600-9.500-4.600z" fill="#1f8df2"/><path d="M1.500 5.800l9.500 4.600v10.600l-9.500-4.800z" fill="#6cc0ff"/><path d="M20.500 5.800l-9.500 4.600v10.600l9.500-4.800z" fill="#1272d4"/></svg><div class="t" style="left:1670.3px;top:408.0px;font-size:11.3px;color:#151515;letter-spacing:0.560px;line-height:12px;">star_mask1</div><svg style="left:0px;top:0px" width="1" height="1" viewBox="0 0 1 1"><path d="M1747.0999999999997 422.6v-3.600l3 3.600v-3.600" stroke="#111" stroke-width="1.150" stroke-linejoin="bevel" fill="none"/></svg><svg style="left:1647.4px;top:517.2px" width="108.80000000000001" height="26.6" viewBox="0 0 108.80000000000001 26.6"><path d="M.5 .5h98.00000000000001l9.3 9.3v15.3h-106.80000000000001z" fill="#b3b3b3" stroke="#8d8d8d" stroke-width="1"/><path d="M.5 25.1v-24.6h98.00000000000001" fill="none" stroke="#c9c9c9" stroke-width="1"/><path d="M98.50000000000001 .5l9.3 9.3" stroke="#6a6a6a" stroke-width="1.200"/></svg><svg style="left:1649.9px;top:519.0px" width="22" height="22" viewBox="0 0 22 22"><path d="M11 1l9.500 4.800v10.400l-9.500 4.800-9.500-4.800v-10.400z" fill="#2b95f0"/><path d="M11 1l9.500 4.800-9.500 4.600-9.500-4.600z" fill="#1f8df2"/><path d="M1.500 5.800l9.500 4.600v10.600l-9.500-4.800z" fill="#6cc0ff"/><path d="M20.500 5.800l-9.500 4.600v10.600l9.500-4.800z" fill="#1272d4"/></svg><div class="t" style="left:1676.6px;top:524.0px;font-size:11.3px;color:#151515;letter-spacing:0.653px;line-height:12px;">star_mask</div><svg style="left:0px;top:0px" width="1" height="1" viewBox="0 0 1 1"><path d="M1747.3999999999999 539.1v-3.600l3 3.600v-3.600" stroke="#111" stroke-width="1.150" stroke-linejoin="bevel" fill="none"/></svg><svg style="left:1613.2px;top:547.2px" width="113.30000000000001" height="26.6" viewBox="0 0 113.30000000000001 26.6"><path d="M.5 .5h102.50000000000001l9.3 9.3v15.3h-111.30000000000001z" fill="#b3b3b3" stroke="#8d8d8d" stroke-width="1"/><path d="M.5 25.1v-24.6h102.50000000000001" fill="none" stroke="#c9c9c9" stroke-width="1"/><path d="M103.00000000000001 .5l9.3 9.3" stroke="#6a6a6a" stroke-width="1.200"/></svg><svg style="left:1615.7px;top:549.0px" width="22" height="22" viewBox="0 0 22 22"><path d="M11 1l9.500 4.800v10.400l-9.500 4.800-9.500-4.800v-10.400z" fill="#2b95f0"/><path d="M11 1l9.500 4.800-9.500 4.600-9.500-4.600z" fill="#1f8df2"/><path d="M1.500 5.800l9.500 4.600v10.600l-9.500-4.800z" fill="#6cc0ff"/><path d="M20.500 5.800l-9.500 4.600v10.600l9.500-4.800z" fill="#1272d4"/></svg><div class="t" style="left:1642.4px;top:554.0px;font-size:11.3px;color:#151515;letter-spacing:0.453px;line-height:12px;">Image10_R</div><svg style="left:0px;top:0px" width="1" height="1" viewBox="0 0 1 1"><path d="M1717.6999999999998 569.1v-3.600l3 3.600v-3.600" stroke="#111" stroke-width="1.150" stroke-linejoin="bevel" fill="none"/></svg><svg style="left:1613.2px;top:574.2px" width="114.30000000000001" height="26.6" viewBox="0 0 114.30000000000001 26.6"><path d="M.5 .5h103.50000000000001l9.3 9.3v15.3h-112.30000000000001z" fill="#b3b3b3" stroke="#8d8d8d" stroke-width="1"/><path d="M.5 25.1v-24.6h103.50000000000001" fill="none" stroke="#c9c9c9" stroke-width="1"/><path d="M104.00000000000001 .5l9.3 9.3" stroke="#6a6a6a" stroke-width="1.200"/></svg><svg style="left:1615.7px;top:576.0px" width="22" height="22" viewBox="0 0 22 22"><path d="M11 1l9.500 4.800v10.400l-9.500 4.800-9.500-4.800v-10.400z" fill="#2b95f0"/><path d="M11 1l9.500 4.800-9.500 4.600-9.500-4.600z" fill="#1f8df2"/><path d="M1.500 5.800l9.500 4.600v10.600l-9.500-4.800z" fill="#6cc0ff"/><path d="M20.500 5.800l-9.500 4.600v10.600l9.500-4.800z" fill="#1272d4"/></svg><div class="t" style="left:1642.4px;top:581.0px;font-size:11.3px;color:#151515;letter-spacing:0.494px;line-height:12px;">Image10_G</div><svg style="left:0px;top:0px" width="1" height="1" viewBox="0 0 1 1"><path d="M1718.6999999999998 596.1v-3.600l3 3.600v-3.600" stroke="#111" stroke-width="1.150" stroke-linejoin="bevel" fill="none"/></svg><svg style="left:1613.2px;top:637.2px" width="113.30000000000001" height="26.6" viewBox="0 0 113.30000000000001 26.6"><path d="M.5 .5h102.50000000000001l9.3 9.3v15.3h-111.30000000000001z" fill="#b3b3b3" stroke="#8d8d8d" stroke-width="1"/><path d="M.5 25.1v-24.6h102.50000000000001" fill="none" stroke="#c9c9c9" stroke-width="1"/><path d="M103.00000000000001 .5l9.3 9.3" stroke="#6a6a6a" stroke-width="1.200"/></svg><svg style="left:1615.7px;top:639.0px" width="22" height="22" viewBox="0 0 22 22"><path d="M11 1l9.500 4.800v10.400l-9.500 4.800-9.500-4.800v-10.400z" fill="#2b95f0"/><path d="M11 1l9.500 4.800-9.500 4.600-9.500-4.600z" fill="#1f8df2"/><path d="M1.500 5.800l9.500 4.600v10.600l-9.500-4.800z" fill="#6cc0ff"/><path d="M20.500 5.800l-9.500 4.600v10.600l9.500-4.800z" fill="#1272d4"/></svg><div class="t" style="left:1642.4px;top:644.0px;font-size:11.3px;color:#151515;letter-spacing:0.522px;line-height:12px;">Image10_B</div><svg style="left:0px;top:0px" width="1" height="1" viewBox="0 0 1 1"><path d="M1717.6999999999998 659.1v-3.600l3 3.600v-3.600" stroke="#111" stroke-width="1.150" stroke-linejoin="bevel" fill="none"/></svg><svg style="left:1456.8px;top:831.2px" width="119.30000000000001" height="26.6" viewBox="0 0 119.30000000000001 26.6"><path d="M.5 .5h108.50000000000001l9.3 9.3v15.3h-117.30000000000001z" fill="#b3b3b3" stroke="#8d8d8d" stroke-width="1"/><path d="M.5 25.1v-24.6h108.50000000000001" fill="none" stroke="#c9c9c9" stroke-width="1"/><path d="M109.00000000000001 .5l9.3 9.3" stroke="#6a6a6a" stroke-width="1.200"/></svg><svg style="left:1459.3px;top:833.0px" width="22" height="22" viewBox="0 0 22 22"><path d="M11 1l9.500 4.800v10.400l-9.500 4.800-9.500-4.800v-10.400z" fill="#2b95f0"/><path d="M11 1l9.500 4.800-9.500 4.600-9.500-4.600z" fill="#1f8df2"/><path d="M1.500 5.800l9.500 4.600v10.600l-9.500-4.800z" fill="#6cc0ff"/><path d="M20.500 5.800l-9.500 4.600v10.600l9.500-4.800z" fill="#1272d4"/></svg><div class="t" style="left:1486.0px;top:838.0px;font-size:11.3px;color:#151515;letter-spacing:0.632px;line-height:12px;">range_mask</div><svg style="left:0px;top:0px" width="1" height="1" viewBox="0 0 1 1"><path d="M1567.2999999999997 853.1v-3.600l3 3.600v-3.600" stroke="#111" stroke-width="1.150" stroke-linejoin="bevel" fill="none"/></svg><div class="card" style="left:1424.5px;top:124px;width:101.9px;height:25.800px;"></div><svg style="left:1426.5px;top:126px" width="22" height="22" viewBox="0 0 22 22"><defs><pattern id="cc1" width="4" height="4" patternUnits="userSpaceOnUse"><rect width="4" height="4" fill="#fff"/><rect width="2" height="2" fill="#111"/><rect x="2" y="2" width="2" height="2" fill="#111"/></pattern></defs><rect width="22" height="22" fill="#4a5cf0"/><path d="M4 0v22M8 0v22M0 4h22M0 8h22M0 12h22M0 16h22M0 20h22" stroke="#aab4ff" stroke-width=".8"/><rect x="11" y="1" width="11" height="20" fill="url(#cc1)"/><rect x=".5" y=".5" width="21" height="21" fill="none" stroke="#2020e0" stroke-width="1"/><path d="M2 20C3 9 10 3 21 2" stroke="#ff7a10" stroke-width="1.8" fill="none"/></svg><div class="t" style="left:1453.9px;top:131.0px;font-size:11.3px;color:#151515;letter-spacing:0.390px;line-height:12px;">Process10</div><svg style="left:0px;top:0px" width="1" height="1" viewBox="0 0 1 1"><path d="M1519.0 131.9v-3.600l3 3.600v-3.600" stroke="#111" stroke-width="1.150" stroke-linejoin="bevel" fill="none"/><path d="M1519.1000000000001 142.5v3.200h1.300a1.600 1.600 0 0 0 0-3.200z" stroke="#111" stroke-width="1.250" fill="none"/></svg><div class="card" style="left:1424.5px;top:154px;width:101.9px;height:25.800px;"></div><svg style="left:1426.5px;top:156px" width="22" height="22" viewBox="0 0 22 22"><defs><linearGradient id="pz2" x1="0" y1="0" x2="1" y2="1"><stop offset="0" stop-color="#0a5a12"/><stop offset="1" stop-color="#8af088"/></linearGradient></defs><rect width="22" height="22" fill="url(#pz2)"/><path d="M3 7.5h4.6c-1.6-3 .4-5 2.4-5s4 2 2.4 5h4.8v4.2c3-1.6 4.6.2 4.6 2.2s-1.8 3.8-4.6 2.2v3.4h-4.6c1-2.2-.4-3.4-2.4-3.4s-3.4 1.400-2.400 3.400h-4.800v-4.200c1.800 1 3.400-.200 3.400-2s-1.600-3-3.400-2z" fill="#a010a8" stroke="#5a0a60" stroke-width=".6"/></svg><div class="t" style="left:1453.9px;top:161.0px;font-size:11.3px;color:#151515;letter-spacing:0.390px;line-height:12px;">Process28</div><svg style="left:0px;top:0px" width="1" height="1" viewBox="0 0 1 1"><path d="M1519.0 161.9v-3.600l3 3.600v-3.600" stroke="#111" stroke-width="1.150" stroke-linejoin="bevel" fill="none"/><path d="M1519.1000000000001 172.5v3.200h1.300a1.600 1.600 0 0 0 0-3.200z" stroke="#111" stroke-width="1.250" fill="none"/></svg><div class="card" style="left:1424.5px;top:184px;width:101.9px;height:25.800px;"></div><svg style="left:1426.5px;top:186px" width="22" height="22" viewBox="0 0 22 22"><rect width="22" height="22" fill="#d8a0b0"/><rect x="1" y="1" width="20" height="20" fill="none" stroke="#1818e8" stroke-width="1.6"/><rect x="3.5" y="3.5" width="15" height="15" fill="#9aa0f8"/><rect x="6" y="6" width="10" height="10" fill="#5a64f4"/><rect x="8.5" y="8.500" width="5" height="5" fill="#2a34ee"/></svg><div class="t" style="left:1453.9px;top:191.0px;font-size:11.3px;color:#151515;letter-spacing:0.390px;line-height:12px;">Process31</div><svg style="left:0px;top:0px" width="1" height="1" viewBox="0 0 1 1"><path d="M1519.0 191.9v-3.600l3 3.600v-3.600" stroke="#111" stroke-width="1.150" stroke-linejoin="bevel" fill="none"/><path d="M1519.1000000000001 202.5v3.200h1.300a1.600 1.600 0 0 0 0-3.200z" stroke="#111" stroke-width="1.250" fill="none"/></svg><div class="card" style="left:1445.3px;top:214px;width:101.9px;height:25.800px;"></div><svg style="left:1447.3px;top:216px" width="22" height="22" viewBox="0 0 22 22"><defs><linearGradient id="dg4" x1="0" y1="0" x2="1" y2="1"><stop offset="0" stop-color="#e8a0a0"/><stop offset=".35" stop-color="#d8a0b8"/><stop offset=".36" stop-color="#2a2af0"/><stop offset=".6" stop-color="#6a74ff"/><stop offset=".61" stop-color="#2a2af0"/><stop offset="1" stop-color="#8a94ff"/></linearGradient></defs><rect width="22" height="22" fill="url(#dg4)"/><rect x=".7" y=".7" width="20.6" height="20.6" fill="none" stroke="#1818e8" stroke-width="1.4"/></svg><div class="t" style="left:1474.7px;top:221.0px;font-size:11.3px;color:#151515;letter-spacing:0.390px;line-height:12px;">Process29</div><svg style="left:0px;top:0px" width="1" height="1" viewBox="0 0 1 1"><path d="M1539.8 221.9v-3.600l3 3.600v-3.600" stroke="#111" stroke-width="1.150" stroke-linejoin="bevel" fill="none"/><path d="M1539.9 232.5v3.200h1.300a1.600 1.600 0 0 0 0-3.200z" stroke="#111" stroke-width="1.250" fill="none"/></svg><div class="card" style="left:1730.3px;top:127.2px;width:101.9px;height:25.800px;"></div><svg style="left:1732.3px;top:129.2px" width="22" height="22" viewBox="0 0 22 22"><defs><linearGradient id="p1g5" x1="0" y1="0" x2="1" y2="0"><stop offset="0" stop-color="#1a5a1a"/><stop offset=".7" stop-color="#3a8a3a"/><stop offset="1" stop-color="#1a4a1a"/></linearGradient><radialGradient id="p1o5" cx=".15" cy=".9" r="1"><stop offset="0" stop-color="#ffb060"/><stop offset=".4" stop-color="#e06a20"/><stop offset="1" stop-color="#8a5a48"/></radialGradient><linearGradient id="p1b5" x1="0" y1="0" x2="1" y2="1"><stop offset="0" stop-color="#3a3aff"/><stop offset=".5" stop-color="#1a1ae8"/><stop offset="1" stop-color="#5a7a9a"/></linearGradient></defs><rect width="22" height="22" fill="#1010f0"/><path d="M1.200 1.200h9v10.600l-9 9z" fill="url(#p1g5)"/><rect x="10.600" y="1.200" width="10.200" height="10" fill="url(#p1o5)"/><path d="M10.200 11.600h10.600v9.200h-19.600z" fill="url(#p1b5)"/><path d="M10.400 1.200v10.400h10.400" stroke="#1a1a1a" stroke-width=".8" fill="none" opacity=".7"/><rect x=".6" y=".6" width="20.800" height="20.800" fill="none" stroke="#1010f0" stroke-width="1.200"/></svg><div class="t" style="left:1759.7px;top:134.0px;font-size:11.3px;color:#151515;letter-spacing:0.390px;line-height:12px;">Process01</div><svg style="left:0px;top:0px" width="1" height="1" viewBox="0 0 1 1"><path d="M1824.8 135.10000000000002v-3.600l3 3.600v-3.600" stroke="#111" stroke-width="1.150" stroke-linejoin="bevel" fill="none"/><path d="M1824.9 145.70000000000002v3.200h1.300a1.600 1.600 0 0 0 0-3.200z" stroke="#111" stroke-width="1.250" fill="none"/></svg><div class="card" style="left:1730.3px;top:157.2px;width:101.9px;height:25.800px;"></div><svg style="left:1732.3px;top:159.2px" width="22" height="22" viewBox="0 0 22 22"><rect width="22" height="22" fill="#f4f4f4"/><path d="M1 1h10l-10 10z" fill="#f0a8a0"/><path d="M21 1v10l-10-10z" fill="#e4e4e4"/><path d="M1 21v-10l10 10z" fill="#a8f0b0"/><path d="M21 21h-10l10-10z" fill="#b0b8f0"/><path d="M11 1v10h-10z" fill="#0808f0"/><path d="M11 1l10 10h-10z" fill="#08f008"/><path d="M1 11h10v10z" fill="#8a8a8a"/><path d="M11 11h10l-10 10z" fill="#f00808"/><rect x=".7" y=".7" width="20.600" height="20.600" fill="none" stroke="#080808" stroke-width="1.400"/></svg><div class="t" style="left:1759.7px;top:164.0px;font-size:11.3px;color:#151515;letter-spacing:0.390px;line-height:12px;">Process02</div><svg style="left:0px;top:0px" width="1" height="1" viewBox="0 0 1 1"><path d="M1824.8 165.1v-3.600l3 3.600v-3.600" stroke="#111" stroke-width="1.150" stroke-linejoin="bevel" fill="none"/><path d="M1824.9 175.7v3.200h1.300a1.600 1.600 0 0 0 0-3.200z" stroke="#111" stroke-width="1.250" fill="none"/></svg><div class="card" style="left:1730.3px;top:187.2px;width:101.9px;height:25.800px;"></div><svg style="left:1732.3px;top:189.2px" width="22" height="22" viewBox="0 0 22 22"><rect width="22" height="22" fill="#1a6cf0"/><text x="11" y="18.500" text-anchor="middle" font-family="Liberation Sans" font-weight="bold" font-size="23" fill="#ffa040" stroke="#ffd0a0" stroke-width=".6" transform="translate(-1.500,1.200) scale(1.12,1)">S</text></svg><div class="t" style="left:1759.7px;top:194.0px;font-size:11.3px;color:#151515;letter-spacing:0.390px;line-height:12px;">Process03</div><svg style="left:0px;top:0px" width="1" height="1" viewBox="0 0 1 1"><path d="M1824.8 195.1v-3.600l3 3.600v-3.600" stroke="#111" stroke-width="1.150" stroke-linejoin="bevel" fill="none"/><path d="M1824.9 205.7v3.200h1.300a1.600 1.600 0 0 0 0-3.200z" stroke="#111" stroke-width="1.250" fill="none"/></svg><div class="card" style="left:1730.3px;top:217.2px;width:101.9px;height:25.800px;"></div><svg style="left:1732.3px;top:219.2px" width="22" height="22" viewBox="0 0 22 22"><rect width="22" height="22" fill="#e8e8e8"/><path d="M4 1.500h14l-5 7h-4zM4 20.500h14l-5-7h-4z" fill="#222"/><path d="M2 9h18" stroke="#1010e0" stroke-width="1.6"/><path d="M2 11h18" stroke="#10d010" stroke-width="1.6"/><path d="M2 13h18" stroke="#e01010" stroke-width="1.600"/><rect x=".7" y=".7" width="20.6" height="20.6" fill="none" stroke="#111" stroke-width="1.4"/></svg><div class="t" style="left:1759.7px;top:224.0px;font-size:11.3px;color:#151515;letter-spacing:0.390px;line-height:12px;">Process05</div><svg style="left:0px;top:0px" width="1" height="1" viewBox="0 0 1 1"><path d="M1824.8 225.1v-3.600l3 3.600v-3.600" stroke="#111" stroke-width="1.150" stroke-linejoin="bevel" fill="none"/><path d="M1824.9 235.7v3.200h1.300a1.600 1.600 0 0 0 0-3.200z" stroke="#111" stroke-width="1.250" fill="none"/></svg><div class="card" style="left:1730.3px;top:247.2px;width:101.9px;height:25.800px;"></div><svg style="left:1732.3px;top:249.2px" width="22" height="22" viewBox="0 0 22 22"><rect width="22" height="22" fill="#ddd"/><circle cx="11" cy="7" r="4.5" fill="#f01010"/><circle cx="6" cy="15" r="4.5" fill="#10e010"/><circle cx="16" cy="15" r="4.500" fill="#1010f0"/><rect x=".7" y=".7" width="20.6" height="20.6" fill="none" stroke="#111" stroke-width="1.4"/></svg><div class="t" style="left:1759.7px;top:254.0px;font-size:11.3px;color:#151515;letter-spacing:0.390px;line-height:12px;">Process06</div><svg style="left:0px;top:0px" width="1" height="1" viewBox="0 0 1 1"><path d="M1824.8 255.1v-3.600l3 3.600v-3.600" stroke="#111" stroke-width="1.150" stroke-linejoin="bevel" fill="none"/><path d="M1824.9 265.7v3.200h1.300a1.600 1.600 0 0 0 0-3.200z" stroke="#111" stroke-width="1.250" fill="none"/></svg><div class="card" style="left:1730.3px;top:277.2px;width:101.9px;height:25.800px;"></div><svg style="left:1732.3px;top:279.2px" width="22" height="22" viewBox="0 0 22 22"><defs><linearGradient id="bl10" x1="0" y1="0" x2="1" y2="1"><stop offset="0" stop-color="#d0e8e8"/><stop offset="1" stop-color="#1a1af0"/></linearGradient></defs><rect width="22" height="22" fill="url(#bl10)"/><path d="M1 21C7 19 7 4 11 4s4 15 10 17z" fill="#2a30f0"/><path d="M5 21C8 17 9 6 11.500 6s2 10 5 15z" fill="#7a84ff" opacity=".7"/></svg><div class="t" style="left:1759.7px;top:284.0px;font-size:11.3px;color:#151515;letter-spacing:0.390px;line-height:12px;">Process07</div><svg style="left:0px;top:0px" width="1" height="1" viewBox="0 0 1 1"><path d="M1824.8 285.1v-3.600l3 3.600v-3.600" stroke="#111" stroke-width="1.150" stroke-linejoin="bevel" fill="none"/><path d="M1824.9 295.7v3.200h1.300a1.600 1.600 0 0 0 0-3.200z" stroke="#111" stroke-width="1.250" fill="none"/></svg><div class="card" style="left:1759.3px;top:310px;width:101.9px;height:25.800px;"></div><svg style="left:1761.3px;top:312px" width="22" height="22" viewBox="0 0 22 22"><rect width="22" height="22" fill="#2a3af0"/><rect x="1" y="1" width="20" height="3" fill="#1a1ad0"/><path d="M3 19C4 10 9 6 19 6" stroke="#ff8a30" stroke-width="1.600" fill="none"/><path d="M3 6v13h16" stroke="#c0c8ff" stroke-width="1" fill="none"/><rect x="14" y="1.500" width="2" height="1.500" fill="#ffa050"/><rect x="17.500" y="1.500" width="2" height="1.500" fill="#ffa050"/></svg><div class="t" style="left:1788.7px;top:317.0px;font-size:11.3px;color:#151515;letter-spacing:0.390px;line-height:12px;">Process12</div><svg style="left:0px;top:0px" width="1" height="1" viewBox="0 0 1 1"><path d="M1853.8 317.90000000000003v-3.600l3 3.600v-3.600" stroke="#111" stroke-width="1.150" stroke-linejoin="bevel" fill="none"/><path d="M1853.9 328.5v3.200h1.300a1.600 1.600 0 0 0 0-3.200z" stroke="#111" stroke-width="1.250" fill="none"/></svg><div class="card" style="left:1759.3px;top:340px;width:101.9px;height:25.800px;"></div><svg style="left:1761.3px;top:342px" width="22" height="22" viewBox="0 0 22 22"><rect width="22" height="22" fill="#5a6af0"/><path d="M5.500 0v22M11 0v22M16.500 0v22M0 5.500h22M0 11h22M0 16.500h22" stroke="#aab4ff" stroke-width=".8"/><path d="M2 21C6 20 7 2 8.500 2s1.500 10 4 14 4 4.500 8 5z" fill="#ff8a30"/><rect x=".6" y=".6" width="20.800" height="20.800" fill="none" stroke="#2020e0" stroke-width="1.200"/></svg><div class="t" style="left:1788.7px;top:347.0px;font-size:11.3px;color:#151515;letter-spacing:0.390px;line-height:12px;">Process13</div><svg style="left:0px;top:0px" width="1" height="1" viewBox="0 0 1 1"><path d="M1853.8 347.90000000000003v-3.600l3 3.600v-3.600" stroke="#111" stroke-width="1.150" stroke-linejoin="bevel" fill="none"/><path d="M1853.9 358.5v3.200h1.300a1.600 1.600 0 0 0 0-3.200z" stroke="#111" stroke-width="1.250" fill="none"/></svg><div class="card" style="left:1759.3px;top:370px;width:108.3px;height:25.800px;"></div><svg style="left:1761.3px;top:372px" width="22" height="22" viewBox="0 0 22 22"><rect width="22" height="22" fill="#d0a0c0"/><rect x="1.500" y="1.500" width="19" height="19" fill="#8a94ff"/><path d="M13 3l-8 8 8 8h-4l-8-8 8-8zM21 3l-8 8 8 8h-4l-8-8 8-8z" fill="#1a24f0"/><rect x=".7" y=".7" width="20.6" height="20.6" fill="none" stroke="#1818e8" stroke-width="1.4"/></svg><div class="t" style="left:1788.7px;top:377.0px;font-size:11.3px;color:#151515;letter-spacing:0.483px;line-height:12px;">Process101</div><svg style="left:0px;top:0px" width="1" height="1" viewBox="0 0 1 1"><path d="M1860.1999999999998 377.90000000000003v-3.600l3 3.600v-3.600" stroke="#111" stroke-width="1.150" stroke-linejoin="bevel" fill="none"/><path d="M1860.3 388.5v3.200h1.300a1.600 1.600 0 0 0 0-3.200z" stroke="#111" stroke-width="1.250" fill="none"/></svg><div class="card" style="left:1759.3px;top:400px;width:101.9px;height:25.800px;"></div><svg style="left:1761.3px;top:402px" width="22" height="22" viewBox="0 0 22 22"><defs><linearGradient id="dt14" x1="0" y1="0" x2="0" y2="1"><stop offset="0" stop-color="#8a20c0"/><stop offset=".5" stop-color="#4a40a0"/><stop offset="1" stop-color="#20c020"/></linearGradient></defs><rect width="22" height="22" fill="url(#dt14)"/><circle cx="6.5" cy="6.5" r="3.400" fill="#4060ff"/><circle cx="6.5" cy="6.5" r="1.800" fill="#d0e0ff"/><circle cx="15.5" cy="6.5" r="3.400" fill="#4060ff"/><circle cx="15.5" cy="6.5" r="1.800" fill="#d0e0ff"/><circle cx="6.5" cy="15.5" r="3.400" fill="#4060ff"/><circle cx="6.5" cy="15.5" r="1.800" fill="#d0e0ff"/><circle cx="15.5" cy="15.5" r="3.400" fill="#4060ff"/><circle cx="15.5" cy="15.5" r="1.800" fill="#d0e0ff"/></svg><div class="t" style="left:1788.7px;top:407.0px;font-size:11.3px;color:#151515;letter-spacing:0.483px;line-height:12px;">Process11</div><svg style="left:0px;top:0px" width="1" height="1" viewBox="0 0 1 1"><path d="M1853.8 407.90000000000003v-3.600l3 3.600v-3.600" stroke="#111" stroke-width="1.150" stroke-linejoin="bevel" fill="none"/><path d="M1853.9 418.5v3.200h1.300a1.600 1.600 0 0 0 0-3.200z" stroke="#111" stroke-width="1.250" fill="none"/></svg><div class="card" style="left:1732.2px;top:429px;width:101.9px;height:25.800px;"></div><svg style="left:1734.2px;top:431px" width="22" height="22" viewBox="0 0 22 22"><defs><linearGradient id="pk15" x1="0" y1="0" x2="0" y2="1"><stop offset="0" stop-color="#3030d8"/><stop offset="1" stop-color="#20b040"/></linearGradient></defs><rect width="22" height="22" fill="url(#pk15)"/><path d="M0 22C8 21 10 14 11 1c1 13 3 20 11 21z" fill="#ff8010"/><path d="M2 9h5M7 9l-2.500-2.500M7 9l-2.500 2.500M20 9h-5M15 9l2.500-2.500M15 9l2.500 2.500" stroke="#40c0ff" stroke-width="1.400" fill="none"/></svg><div class="t" style="left:1761.6px;top:436.0px;font-size:11.3px;color:#151515;letter-spacing:0.390px;line-height:12px;">Process08</div><svg style="left:0px;top:0px" width="1" height="1" viewBox="0 0 1 1"><path d="M1826.7 436.90000000000003v-3.600l3 3.600v-3.600" stroke="#111" stroke-width="1.150" stroke-linejoin="bevel" fill="none"/><path d="M1826.8000000000002 447.5v3.200h1.300a1.600 1.600 0 0 0 0-3.200z" stroke="#111" stroke-width="1.250" fill="none"/></svg><div class="card" style="left:1732.2px;top:459px;width:101.9px;height:25.800px;"></div><svg style="left:1734.2px;top:461px" width="22" height="22" viewBox="0 0 22 22"><defs><pattern id="cc16" width="4" height="4" patternUnits="userSpaceOnUse"><rect width="4" height="4" fill="#fff"/><rect width="2" height="2" fill="#111"/><rect x="2" y="2" width="2" height="2" fill="#111"/></pattern></defs><rect width="22" height="22" fill="#4a5cf0"/><path d="M4 0v22M8 0v22M0 4h22M0 8h22M0 12h22M0 16h22M0 20h22" stroke="#aab4ff" stroke-width=".8"/><rect x="11" y="1" width="11" height="20" fill="url(#cc16)"/><rect x=".5" y=".5" width="21" height="21" fill="none" stroke="#2020e0" stroke-width="1"/><path d="M2 20C3 9 10 3 21 2" stroke="#ff7a10" stroke-width="1.8" fill="none"/></svg><div class="t" style="left:1761.6px;top:466.0px;font-size:11.3px;color:#151515;letter-spacing:0.390px;line-height:12px;">Process09</div><svg style="left:0px;top:0px" width="1" height="1" viewBox="0 0 1 1"><path d="M1826.7 466.90000000000003v-3.600l3 3.600v-3.600" stroke="#111" stroke-width="1.150" stroke-linejoin="bevel" fill="none"/><path d="M1826.8000000000002 477.5v3.200h1.300a1.600 1.600 0 0 0 0-3.200z" stroke="#111" stroke-width="1.250" fill="none"/></svg><div class="card" style="left:1756.5px;top:489.4px;width:101.9px;height:25.800px;"></div><svg style="left:1758.5px;top:491.4px" width="22" height="22" viewBox="0 0 22 22"><defs><linearGradient id="dt17" x1="0" y1="0" x2="0" y2="1"><stop offset="0" stop-color="#8a20c0"/><stop offset=".5" stop-color="#4a40a0"/><stop offset="1" stop-color="#20c020"/></linearGradient></defs><rect width="22" height="22" fill="url(#dt17)"/><circle cx="6.5" cy="6.5" r="3.400" fill="#4060ff"/><circle cx="6.5" cy="6.5" r="1.800" fill="#d0e0ff"/><circle cx="15.5" cy="6.5" r="3.400" fill="#4060ff"/><circle cx="15.5" cy="6.5" r="1.800" fill="#d0e0ff"/><circle cx="6.5" cy="15.5" r="3.400" fill="#4060ff"/><circle cx="6.5" cy="15.5" r="1.800" fill="#d0e0ff"/><circle cx="15.5" cy="15.5" r="3.400" fill="#4060ff"/><circle cx="15.5" cy="15.5" r="1.800" fill="#d0e0ff"/></svg><div class="t" style="left:1785.9px;top:496.0px;font-size:11.3px;color:#151515;letter-spacing:0.390px;line-height:12px;">Process15</div><svg style="left:0px;top:0px" width="1" height="1" viewBox="0 0 1 1"><path d="M1851.0 497.3v-3.600l3 3.600v-3.600" stroke="#111" stroke-width="1.150" stroke-linejoin="bevel" fill="none"/><path d="M1851.1000000000001 507.9v3.200h1.300a1.600 1.600 0 0 0 0-3.200z" stroke="#111" stroke-width="1.250" fill="none"/></svg><div class="card" style="left:1756.5px;top:518px;width:101.9px;height:25.800px;"></div><svg style="left:1758.5px;top:520px" width="22" height="22" viewBox="0 0 22 22"><defs><linearGradient id="pz18" x1="0" y1="0" x2="1" y2="1"><stop offset="0" stop-color="#0a5a12"/><stop offset="1" stop-color="#8af088"/></linearGradient></defs><rect width="22" height="22" fill="url(#pz18)"/><path d="M3 7.5h4.6c-1.6-3 .4-5 2.4-5s4 2 2.4 5h4.8v4.2c3-1.6 4.6.2 4.6 2.2s-1.8 3.8-4.6 2.2v3.4h-4.6c1-2.2-.4-3.4-2.4-3.4s-3.4 1.400-2.400 3.400h-4.800v-4.200c1.800 1 3.400-.200 3.400-2s-1.600-3-3.400-2z" fill="#a010a8" stroke="#5a0a60" stroke-width=".6"/></svg><div class="t" style="left:1785.9px;top:525.0px;font-size:11.3px;color:#151515;letter-spacing:0.390px;line-height:12px;">Process17</div><svg style="left:0px;top:0px" width="1" height="1" viewBox="0 0 1 1"><path d="M1851.0 525.9v-3.600l3 3.600v-3.600" stroke="#111" stroke-width="1.150" stroke-linejoin="bevel" fill="none"/><path d="M1851.1000000000001 536.5v3.200h1.300a1.600 1.600 0 0 0 0-3.200z" stroke="#111" stroke-width="1.250" fill="none"/></svg><div class="card" style="left:1729.8px;top:546px;width:101.9px;height:25.800px;"></div><svg style="left:1731.8px;top:548px" width="22" height="22" viewBox="0 0 22 22"><defs><linearGradient id="pz19" x1="0" y1="0" x2="1" y2="1"><stop offset="0" stop-color="#0a5a12"/><stop offset="1" stop-color="#8af088"/></linearGradient></defs><rect width="22" height="22" fill="url(#pz19)"/><path d="M3 7.5h4.6c-1.6-3 .4-5 2.4-5s4 2 2.4 5h4.8v4.2c3-1.6 4.6.2 4.6 2.2s-1.8 3.8-4.6 2.2v3.4h-4.6c1-2.2-.4-3.4-2.4-3.4s-3.4 1.400-2.400 3.400h-4.800v-4.200c1.800 1 3.400-.200 3.400-2s-1.600-3-3.400-2z" fill="#a010a8" stroke="#5a0a60" stroke-width=".6"/></svg><div class="t" style="left:1759.2px;top:553.0px;font-size:11.3px;color:#151515;letter-spacing:0.390px;line-height:12px;">Process16</div><svg style="left:0px;top:0px" width="1" height="1" viewBox="0 0 1 1"><path d="M1824.3 553.9v-3.600l3 3.600v-3.600" stroke="#111" stroke-width="1.150" stroke-linejoin="bevel" fill="none"/><path d="M1824.4 564.5v3.200h1.300a1.600 1.600 0 0 0 0-3.200z" stroke="#111" stroke-width="1.250" fill="none"/></svg><div class="card" style="left:1729.8px;top:576.2px;width:101.9px;height:25.800px;"></div><svg style="left:1731.8px;top:578.2px" width="22" height="22" viewBox="0 0 22 22"><defs><linearGradient id="pz20" x1="0" y1="0" x2="1" y2="1"><stop offset="0" stop-color="#0a5a12"/><stop offset="1" stop-color="#8af088"/></linearGradient></defs><rect width="22" height="22" fill="url(#pz20)"/><path d="M3 7.5h4.6c-1.6-3 .4-5 2.4-5s4 2 2.4 5h4.8v4.2c3-1.6 4.6.2 4.6 2.2s-1.8 3.8-4.6 2.2v3.4h-4.6c1-2.2-.4-3.4-2.4-3.4s-3.4 1.400-2.400 3.400h-4.800v-4.200c1.800 1 3.400-.200 3.400-2s-1.600-3-3.400-2z" fill="#a010a8" stroke="#5a0a60" stroke-width=".6"/></svg><div class="t" style="left:1759.2px;top:583.0px;font-size:11.3px;color:#151515;letter-spacing:0.390px;line-height:12px;">Process20</div><svg style="left:0px;top:0px" width="1" height="1" viewBox="0 0 1 1"><path d="M1824.3 584.1v-3.600l3 3.600v-3.600" stroke="#111" stroke-width="1.150" stroke-linejoin="bevel" fill="none"/><path d="M1824.4 594.7v3.200h1.300a1.600 1.600 0 0 0 0-3.200z" stroke="#111" stroke-width="1.250" fill="none"/></svg><div class="card" style="left:1729.8px;top:606.3px;width:101.9px;height:25.800px;"></div><svg style="left:1731.8px;top:608.3px" width="22" height="22" viewBox="0 0 22 22"><defs><linearGradient id="pz21" x1="0" y1="0" x2="1" y2="1"><stop offset="0" stop-color="#0a5a12"/><stop offset="1" stop-color="#8af088"/></linearGradient></defs><rect width="22" height="22" fill="url(#pz21)"/><path d="M3 7.5h4.6c-1.6-3 .4-5 2.4-5s4 2 2.4 5h4.8v4.2c3-1.6 4.6.2 4.6 2.2s-1.8 3.8-4.6 2.2v3.4h-4.6c1-2.2-.4-3.4-2.4-3.4s-3.4 1.400-2.400 3.400h-4.800v-4.200c1.800 1 3.400-.200 3.400-2s-1.600-3-3.400-2z" fill="#a010a8" stroke="#5a0a60" stroke-width=".6"/></svg><div class="t" style="left:1759.2px;top:613.0px;font-size:11.3px;color:#151515;letter-spacing:0.390px;line-height:12px;">Process21</div><svg style="left:0px;top:0px" width="1" height="1" viewBox="0 0 1 1"><path d="M1824.3 614.1999999999999v-3.600l3 3.600v-3.600" stroke="#111" stroke-width="1.150" stroke-linejoin="bevel" fill="none"/><path d="M1824.4 624.8v3.200h1.300a1.600 1.600 0 0 0 0-3.200z" stroke="#111" stroke-width="1.250" fill="none"/></svg><div class="card" style="left:1729.8px;top:636.4px;width:101.9px;height:25.800px;"></div><svg style="left:1731.8px;top:638.4px" width="22" height="22" viewBox="0 0 22 22"><defs><linearGradient id="pz22" x1="0" y1="0" x2="1" y2="1"><stop offset="0" stop-color="#0a5a12"/><stop offset="1" stop-color="#8af088"/></linearGradient></defs><rect width="22" height="22" fill="url(#pz22)"/><path d="M3 7.5h4.6c-1.6-3 .4-5 2.4-5s4 2 2.4 5h4.8v4.2c3-1.6 4.6.2 4.6 2.2s-1.8 3.8-4.6 2.2v3.4h-4.6c1-2.2-.4-3.4-2.4-3.4s-3.4 1.400-2.400 3.400h-4.800v-4.200c1.800 1 3.400-.200 3.400-2s-1.600-3-3.400-2z" fill="#a010a8" stroke="#5a0a60" stroke-width=".6"/></svg><div class="t" style="left:1759.2px;top:643.0px;font-size:11.3px;color:#151515;letter-spacing:0.390px;line-height:12px;">Process22</div><svg style="left:0px;top:0px" width="1" height="1" viewBox="0 0 1 1"><path d="M1824.3 644.3v-3.600l3 3.600v-3.600" stroke="#111" stroke-width="1.150" stroke-linejoin="bevel" fill="none"/><path d="M1824.4 654.9v3.200h1.300a1.600 1.600 0 0 0 0-3.200z" stroke="#111" stroke-width="1.250" fill="none"/></svg><div class="card" style="left:1729.8px;top:666px;width:101.9px;height:25.800px;"></div><svg style="left:1731.8px;top:668px" width="22" height="22" viewBox="0 0 22 22"><rect width="22" height="22" fill="#f4f4f4"/><path d="M1 1h10l-10 10z" fill="#f0a8a0"/><path d="M21 1v10l-10-10z" fill="#e4e4e4"/><path d="M1 21v-10l10 10z" fill="#a8f0b0"/><path d="M21 21h-10l10-10z" fill="#b0b8f0"/><path d="M11 1v10h-10z" fill="#0808f0"/><path d="M11 1l10 10h-10z" fill="#08f008"/><path d="M1 11h10v10z" fill="#8a8a8a"/><path d="M11 11h10l-10 10z" fill="#f00808"/><rect x=".7" y=".7" width="20.600" height="20.600" fill="none" stroke="#080808" stroke-width="1.400"/></svg><div class="t" style="left:1759.2px;top:673.0px;font-size:11.3px;color:#151515;letter-spacing:0.390px;line-height:12px;">Process24</div><svg style="left:0px;top:0px" width="1" height="1" viewBox="0 0 1 1"><path d="M1824.3 673.9v-3.600l3 3.600v-3.600" stroke="#111" stroke-width="1.150" stroke-linejoin="bevel" fill="none"/><path d="M1824.4 684.5v3.200h1.300a1.600 1.600 0 0 0 0-3.200z" stroke="#111" stroke-width="1.250" fill="none"/></svg><div class="card" style="left:1533.5px;top:709px;width:101.9px;height:25.800px;"></div><svg style="left:1535.5px;top:711px" width="22" height="22" viewBox="0 0 22 22"><rect width="22" height="22" fill="#b8c0f8"/><rect x="3" y="3" width="10" height="10" fill="#f0a0a0" stroke="#e05050"/><rect x="9" y="9" width="10" height="10" fill="#a0f0a0" stroke="#40c040"/><rect x="1" y="12" width="9" height="9" fill="#9090ff" stroke="#4040e0"/></svg><div class="t" style="left:1562.9px;top:716.0px;font-size:11.3px;color:#151515;letter-spacing:0.390px;line-height:12px;">Process14</div><svg style="left:0px;top:0px" width="1" height="1" viewBox="0 0 1 1"><path d="M1628.0 716.9v-3.600l3 3.600v-3.600" stroke="#111" stroke-width="1.150" stroke-linejoin="bevel" fill="none"/><path d="M1628.1000000000001 727.5v3.200h1.300a1.600 1.600 0 0 0 0-3.200z" stroke="#111" stroke-width="1.250" fill="none"/></svg><div class="card" style="left:1533.5px;top:738.4px;width:101.9px;height:25.800px;"></div><svg style="left:1535.5px;top:740.4px" width="22" height="22" viewBox="0 0 22 22"><rect width="22" height="22" fill="#c0b0e0"/><circle cx="7" cy="7" r="5" fill="#f04060"/><circle cx="15" cy="6" r="4" fill="#6070f0"/><circle cx="11" cy="15" r="5" fill="#60d060"/></svg><div class="t" style="left:1562.9px;top:745.0px;font-size:11.3px;color:#151515;letter-spacing:0.390px;line-height:12px;">Process33</div><svg style="left:0px;top:0px" width="1" height="1" viewBox="0 0 1 1"><path d="M1628.0 746.3v-3.600l3 3.600v-3.600" stroke="#111" stroke-width="1.150" stroke-linejoin="bevel" fill="none"/><path d="M1628.1000000000001 756.9v3.200h1.300a1.600 1.600 0 0 0 0-3.200z" stroke="#111" stroke-width="1.250" fill="none"/></svg><div class="card" style="left:1533.5px;top:768.4px;width:101.9px;height:25.800px;"></div><svg style="left:1535.5px;top:770.4px" width="22" height="22" viewBox="0 0 22 22"><rect width="22" height="22" fill="#b0a0e0"/><path d="M0 22L22 0v22z" fill="#d0a0b0"/><path d="M1 21C8 18 16 10 21 1" stroke="#e07030" stroke-width="1.500" fill="none"/></svg><div class="t" style="left:1562.9px;top:775.0px;font-size:11.3px;color:#151515;letter-spacing:0.390px;line-height:12px;">Process32</div><svg style="left:0px;top:0px" width="1" height="1" viewBox="0 0 1 1"><path d="M1628.0 776.3v-3.600l3 3.600v-3.600" stroke="#111" stroke-width="1.150" stroke-linejoin="bevel" fill="none"/><path d="M1628.1000000000001 786.9v3.200h1.300a1.600 1.600 0 0 0 0-3.200z" stroke="#111" stroke-width="1.250" fill="none"/></svg><div class="card" style="left:1584.2px;top:803px;width:101.9px;height:25.800px;"></div><svg style="left:1586.2px;top:805px" width="22" height="22" viewBox="0 0 22 22"><rect width="22" height="22" fill="#7a30b0"/><rect x="4" y="0" width="4" height="22" fill="#50a040"/><rect x="11" y="0" width="3.500" height="22" fill="#50a040"/><rect x="17" y="0" width="3" height="22" fill="#6a9a50"/><path d="M1 2l4 3-4 3z" fill="#60ff20"/><path d="M21 14l-4 3 4 3z" fill="#8010c0"/></svg><div class="t" style="left:1613.6px;top:810.0px;font-size:11.3px;color:#151515;letter-spacing:0.390px;line-height:12px;">Process34</div><svg style="left:0px;top:0px" width="1" height="1" viewBox="0 0 1 1"><path d="M1678.7 810.9v-3.600l3 3.600v-3.600" stroke="#111" stroke-width="1.150" stroke-linejoin="bevel" fill="none"/><path d="M1678.8000000000002 821.5v3.200h1.300a1.600 1.600 0 0 0 0-3.200z" stroke="#111" stroke-width="1.250" fill="none"/></svg><div class="card" style="left:1584.2px;top:831px;width:101.9px;height:25.800px;"></div><svg style="left:1586.2px;top:833px" width="22" height="22" viewBox="0 0 22 22"><rect width="22" height="22" fill="#c06070"/><path d="M12 22l10-10v10z" fill="#4050e0"/><path d="M0 0h10l-10 10z" fill="#4050e0" opacity=".6"/><path d="M11 11c-2-4-8-4-8 0s6 4 8 0 8-4 8 0-6 4-8 0z" fill="none" stroke="#20f020" stroke-width="2.200"/><rect x=".7" y=".7" width="20.6" height="20.6" fill="none" stroke="#1010e0" stroke-width="1.4"/></svg><div class="t" style="left:1613.6px;top:838.0px;font-size:11.3px;color:#151515;letter-spacing:0.390px;line-height:12px;">Process36</div><svg style="left:0px;top:0px" width="1" height="1" viewBox="0 0 1 1"><path d="M1678.7 838.9v-3.600l3 3.600v-3.600" stroke="#111" stroke-width="1.150" stroke-linejoin="bevel" fill="none"/><path d="M1678.8000000000002 849.5v3.200h1.300a1.600 1.600 0 0 0 0-3.200z" stroke="#111" stroke-width="1.250" fill="none"/></svg><div class="card" style="left:1531.5px;top:862.3px;width:101.9px;height:25.800px;"></div><svg style="left:1533.5px;top:864.3px" width="22" height="22" viewBox="0 0 22 22"><defs><pattern id="cb29" width="4" height="4" patternUnits="userSpaceOnUse"><rect width="4" height="4" fill="#fff"/><rect width="2" height="2" fill="#aaa"/><rect x="2" y="2" width="2" height="2" fill="#aaa"/></pattern><linearGradient id="cbg29" x1="0" y1="0" x2="1" y2="1"><stop offset="0" stop-color="#a0c0ff"/><stop offset="1" stop-color="#1030e0"/></linearGradient></defs><rect width="22" height="22" fill="url(#cb29)"/><path d="M21 1v20h-20c6-2 4-6 8-8s3-6 6-7 3-3 6-5z" fill="url(#cbg29)"/><rect x=".7" y=".7" width="20.6" height="20.6" fill="none" stroke="#111" stroke-width="1.4"/></svg><div class="t" style="left:1560.9px;top:869.0px;font-size:11.3px;color:#151515;letter-spacing:0.390px;line-height:12px;">Process35</div><svg style="left:0px;top:0px" width="1" height="1" viewBox="0 0 1 1"><path d="M1626.0 870.1999999999999v-3.600l3 3.600v-3.600" stroke="#111" stroke-width="1.150" stroke-linejoin="bevel" fill="none"/><path d="M1626.1000000000001 880.8v3.200h1.300a1.600 1.600 0 0 0 0-3.200z" stroke="#111" stroke-width="1.250" fill="none"/></svg><div class="card" style="left:1531.5px;top:892px;width:101.9px;height:25.800px;background:#6b80e2;border-color:#8da0f0 #3a50c0 #3a50c0 #8da0f0;"></div><svg style="left:1533.5px;top:894px" width="22" height="22" viewBox="0 0 22 22"><rect width="22" height="22" fill="#5a6af0"/><path d="M5.500 0v22M11 0v22M16.500 0v22M0 5.500h22M0 11h22M0 16.500h22" stroke="#aab4ff" stroke-width=".9"/><path d="M1 21C8 21 7 4 21 3" stroke="#ff5a30" stroke-width="1.600" fill="none"/><path d="M1 21C11 19 12 6 21 1" stroke="#30e030" stroke-width="1.600" fill="none"/><path d="M1 21C13 21 17 11 21 1" stroke="#e0e040" stroke-width="1.300" fill="none"/></svg><div class="t" style="left:1560.9px;top:899.0px;font-size:11.3px;color:#fff;letter-spacing:0.390px;line-height:12px;">Process37</div><svg style="left:0px;top:0px" width="1" height="1" viewBox="0 0 1 1"><path d="M1626.0 899.9v-3.600l3 3.600v-3.600" stroke="#fff" stroke-width="1.150" stroke-linejoin="bevel" fill="none"/><path d="M1626.1000000000001 910.5v3.200h1.300a1.600 1.600 0 0 0 0-3.200z" stroke="#fff" stroke-width="1.250" fill="none"/></svg><svg style="left:1860.2px;top:387px" width="6" height="6" viewBox="0 0 6 6"><circle cx="3" cy="3" r="1.700" fill="#e01010"/></svg><div class="a" style="left:1288px;top:227px;width:403px;height:570px;opacity:.9"><div class="a" style="left:0.5px;top:0.5px;width:402.5px;height:569.5px;background:#8f8f8f"></div><div class="a" style="left:3.0px;top:25.5px;width:398.0px;height:542.5px;background:#d3d3d3"></div><div class="a" style="left:0.5px;top:0.5px;width:402.5px;height:25.5px;background:rgba(102,102,102,.86)"></div><div class="a" style="left:3.0px;top:546px;width:398.0px;height:22.5px;background:#b4b0a9"></div><svg style="left:9px;top:32px" width="386" height="390" viewBox="0 0 386 390"><defs><linearGradient id="pv" x1="0" y1="0" x2="0" y2="1"><stop offset="0" stop-color="#6a10d0"/><stop offset=".5" stop-color="#8a48cc"/><stop offset="1" stop-color="#d0c8d8"/></linearGradient><linearGradient id="ph" x1="0" y1="0" x2="1" y2="0"><stop offset="0" stop-color="#d0c8d8"/><stop offset=".5" stop-color="#a070cc"/><stop offset="1" stop-color="#6a10e0"/></linearGradient></defs><rect x="-1" y="-1" width="388" height="392" fill="#8a8a8a"/><rect width="386" height="390" fill="#0b0b0b"/><rect x="0" y="0" width="8" height="390" fill="url(#pv)"/><rect x="0" y="382.5" width="386" height="7.500" fill="url(#ph)"/><path d="M48.2 0v390" stroke="#4a4a4a" stroke-width="1" stroke-dasharray="1 2"/><path d="M8 48.6h378" stroke="#4a4a4a" stroke-width="1" stroke-dasharray="1 2"/><path d="M96.5 0v390" stroke="#3b3b3b" stroke-width="1.100"/><path d="M8 97.2h378" stroke="#3b3b3b" stroke-width="1.100"/><path d="M144.8 0v390" stroke="#4a4a4a" stroke-width="1" stroke-dasharray="1 2"/><path d="M8 145.9h378" stroke="#4a4a4a" stroke-width="1" stroke-dasharray="1 2"/><path d="M193.0 0v390" stroke="#3b3b3b" stroke-width="1.100"/><path d="M8 194.5h378" stroke="#3b3b3b" stroke-width="1.100"/><path d="M241.2 0v390" stroke="#4a4a4a" stroke-width="1" stroke-dasharray="1 2"/><path d="M8 243.1h378" stroke="#4a4a4a" stroke-width="1" stroke-dasharray="1 2"/><path d="M289.5 0v390" stroke="#3b3b3b" stroke-width="1.100"/><path d="M8 291.8h378" stroke="#3b3b3b" stroke-width="1.100"/><path d="M337.8 0v390" stroke="#4a4a4a" stroke-width="1" stroke-dasharray="1 2"/><path d="M8 340.4h378" stroke="#4a4a4a" stroke-width="1" stroke-dasharray="1 2"/><path d="M1 389L384 2" stroke="#e4dce4" stroke-width="1" fill="none"/><path d="M1 389Q170 172 384 2" stroke="#dc7a14" stroke-width="1.100" fill="none"/><path d="M1 389L12 383L26 370L36 356L48 340L60 330" stroke="#d0d0d0" stroke-width=".9" fill="none"/><path d="M1 389l6 -8" stroke="#2a8aff" stroke-width="1.200"/></svg><div class="t" style="left:114.0px;top:5.0px;font-size:12.8px;color:#e9e9e9;font-weight:bold;letter-spacing:0.971px;line-height:15px;">CurvesTransformation</div><svg style="left:6.5px;top:6.5px" width="17" height="17" viewBox="0 0 17 17"><g transform="scale(1.0625)" opacity="0.8"><rect width="16" height="16" fill="#5a6af0"/><path d="M4 0v16M8 0v16M12 0v16M0 4h16M0 8h16M0 12h16" stroke="#9aa6ff" stroke-width="1"/><path d="M1 15C6 15 5 3 15 2" stroke="#ff5a30" stroke-width="1.3" fill="none"/><path d="M1 15C8 14 9 4 15 1" stroke="#30e030" stroke-width="1.3" fill="none"/><path d="M1 15C10 15 12 8 15 1" stroke="#e0e040" stroke-width="1" fill="none"/></g></svg><svg style="left:362px;top:6px" width="40" height="16" viewBox="0 0 40 16"><path d="M3 2.600h9.500" stroke="#f0f0f0" stroke-width="1.800"/><path d="M7.700 4.300l4.800 6h-9.600z" fill="#f0f0f0"/><path d="M24.600 4l8 8M32.600 4l-8 8" stroke="#f0f0f0" stroke-width="2"/></svg><svg style="left:0px;top:0px" width="403" height="570" viewBox="0 0 403 570"><rect x="7.5" y="429.5" width="19" height="19" fill="#e4e4e4" stroke="#8f8f8f"/><rect x="11.25" y="432.75" width="7.5" height="7.5" fill="#2a34f0" stroke="#6a74ff" stroke-width=".8"/><path d="M19 436.5h6M25.5 436.5l-3-2.800v5.600zM15 441v5M15 447.5l-2.800-3h5.600z" stroke="#f06010" stroke-width="1.300" fill="#f06010"/><rect x="35.75" y="433.75" width="7.5" height="7.5" fill="#2a34f0" stroke="#6a74ff" stroke-width=".8"/><path d="M41.0 439l4.500 6.500-2.200-.3-1 2z" fill="#f08040" stroke="#f08040" stroke-width=".8"/><rect x="61.0" y="435.0" width="8" height="8" fill="#2a34f0" stroke="#6a74ff" stroke-width=".8"/><path d="M59 433l12 12M71 433l-12 12" stroke="#e01030" stroke-width="1.100"/><g transform="translate(81,431)"><path d="M2 2l12 12M14 2l-12 12" stroke="#454545" stroke-width="2"/><path d="M0.3 0.3h6.2l-6.2 6.2z" fill="#454545"/><path d="M15.7 0.3h-6.2l6.2 6.2z" fill="#454545"/><path d="M0.3 15.7h6.2l-6.2 -6.2z" fill="#454545"/><path d="M15.7 15.7h-6.2l6.2 -6.2z" fill="#454545"/></g><g transform="translate(105,431)"><path d="M.8 .8l14.4 14.4M15.2 .8l-14.4 14.4" stroke="#454545" stroke-width="1.8"/><path d="M5.8 5.8h-5.4l5.4 -5.4z" fill="#454545"/><path d="M10.2 5.8h5.4l-5.4 -5.4z" fill="#454545"/><path d="M5.8 10.2h-5.4l5.4 5.4z" fill="#454545"/><path d="M10.2 10.2h5.4l-5.4 5.4z" fill="#454545"/><rect x="6.6" y="6.6" width="2.8" height="2.8" fill="#c3c3c3"/></g><g transform="translate(129,431)"><path d="M8 0l8 8-8 8-8-8z" fill="#454545"/><rect x="6.7" y="3.1000000000000005" width="2.600" height="2.600" fill="#c3c3c3"/><rect x="3.1000000000000005" y="6.7" width="2.600" height="2.600" fill="#c3c3c3"/><rect x="10.299999999999999" y="6.7" width="2.600" height="2.600" fill="#c3c3c3"/><rect x="6.7" y="10.299999999999999" width="2.600" height="2.600" fill="#c3c3c3"/><rect x="6.7" y="6.7" width="2.600" height="2.600" fill="#c3c3c3"/></g><g transform="translate(209,431)"><circle cx="6.6" cy="6.4" r="5" fill="#fff" stroke="#454545" stroke-width="1.7"/><path d="M10.2 10.2l4.6 4.8" stroke="#454545" stroke-width="2.6" stroke-linecap="round"/><rect x="5.3" y="5.1" width="2.6" height="2.6" fill="#1560bd"/></g><rect x="151.5" y="429.5" width="53" height="19" fill="#e4e4e4" stroke="#8f8f8f"/><rect x="189.5" y="430" width="14.500" height="18" fill="#d0d0d0"/><path d="M193 436.5l3.800-4.500 3.800 4.500zM193 441.5l3.800 4.500 3.800-4.500z" fill="#222"/><rect x="353.0" y="429.5" width="19" height="19" fill="#e4e4e4" stroke="#8f8f8f"/><rect x="377.0" y="429.5" width="19" height="19" fill="#e4e4e4" stroke="#8f8f8f"/><path d="M356.5 445v-12M356.5 445h12" stroke="#333" stroke-width="1.200"/><ellipse cx="363.5" cy="438.5" rx="7" ry="3.200" transform="rotate(-45 363.5 438.5)" fill="#f0b0b0" stroke="#9030c0" stroke-width="1.100"/><path d="M383.0 432v14M386.5 432v14M390.0 432v14M379.5 435.5h14M379.5 439h14M379.5 442.5h14" stroke="#2a34f0" stroke-width="1.200"/></svg><div class="t" style="left:159.0px;top:434.0px;font-size:11.4px;color:#111;line-height:12px;">1</div><div class="a" style="left:7.5px;top:453px;width:389px;height:15px;background:#c9c9c9;box-sizing:border-box;border:1px solid #8d8d8d;border-bottom-color:#e6e6e6;border-right-color:#e6e6e6"></div><svg style="left:0px;top:0px" width="403" height="570" viewBox="0 0 403 570"><defs><linearGradient id="c_bw" x1="0" y1="0" x2="1" y2="0"><stop offset="0" stop-color="#000"/><stop offset="1" stop-color="#fff"/></linearGradient><linearGradient id="c_rg" x1="0" y1="0" x2="1" y2="0"><stop offset="0" stop-color="#10c020"/><stop offset="1" stop-color="#e01010"/></linearGradient><linearGradient id="c_by" x1="0" y1="0" x2="1" y2="0"><stop offset="0" stop-color="#1010e0"/><stop offset="1" stop-color="#f0e010"/></linearGradient><linearGradient id="c_rb" x1="0" y1="0" x2="0" y2="1"><stop offset="0" stop-color="#666"/><stop offset=".3" stop-color="#e01010"/><stop offset=".5" stop-color="#e0d010"/><stop offset=".7" stop-color="#10c020"/><stop offset="1" stop-color="#2020e0"/></linearGradient><linearGradient id="c_hue" x1="0" y1="0" x2="1" y2="0"><stop offset="0" stop-color="#f00"/><stop offset=".2" stop-color="#ff0"/><stop offset=".4" stop-color="#0f0"/><stop offset=".6" stop-color="#0ff"/><stop offset=".8" stop-color="#00f"/><stop offset="1" stop-color="#f0f"/></linearGradient><pattern id="c_chk" width="3" height="3" patternUnits="userSpaceOnUse"><rect width="3" height="3" fill="#eee"/><rect width="1.500" height="1.500" fill="#667"/><rect x="1.500" y="1.500" width="1.500" height="1.500" fill="#667"/></pattern></defs><rect x="364.5" y="473.29999999999995" width="33" height="19" fill="#dedede" stroke="#8f8f8f"/><rect x="12.5" y="477.29999999999995" width="11" height="11" fill="#e01010" stroke="#222" stroke-width="1"/><rect x="45.5" y="477.29999999999995" width="11" height="11" fill="#10d010" stroke="#222" stroke-width="1"/><rect x="78.5" y="477.29999999999995" width="11" height="11" fill="#1010e0" stroke="#222" stroke-width="1"/><rect x="111" y="476.79999999999995" width="12" height="12" fill="#111"/><rect x="112" y="477.79999999999995" width="3.400" height="10" fill="#e01010"/><rect x="115.3" y="477.79999999999995" width="3.400" height="10" fill="#10c010"/><rect x="118.6" y="477.79999999999995" width="3.400" height="10" fill="#1010e0"/><rect x="171.5" y="477.29999999999995" width="11" height="11" fill="url(#c_chk)" stroke="#222" stroke-width="1"/><rect x="204.5" y="477.29999999999995" width="11" height="11" fill="url(#c_bw)" stroke="#222" stroke-width="1"/><rect x="237.5" y="477.29999999999995" width="11" height="11" fill="url(#c_rg)" stroke="#222" stroke-width="1"/><rect x="270.5" y="477.29999999999995" width="11" height="11" fill="url(#c_by)" stroke="#222" stroke-width="1"/><rect x="303.5" y="477.29999999999995" width="11" height="11" fill="url(#c_rb)" stroke="#222" stroke-width="1"/><rect x="336.5" y="477.29999999999995" width="11" height="11" fill="url(#c_hue)" stroke="#222" stroke-width="1"/><rect x="369.5" y="477.29999999999995" width="11" height="11" fill="url(#c_rb)" stroke="#222" stroke-width="1"/></svg><div class="t" style="left:28.3px;top:477.0px;font-size:11.4px;color:#111;line-height:12px;letter-spacing:.35px;">R</div><div class="t" style="left:61.3px;top:477.0px;font-size:11.4px;color:#111;line-height:12px;letter-spacing:.35px;">G</div><div class="t" style="left:94.3px;top:477.0px;font-size:11.4px;color:#111;line-height:12px;letter-spacing:.35px;">B</div><div class="t" style="left:127.3px;top:477.0px;font-size:11.4px;color:#111;line-height:12px;letter-spacing:.35px;">RGB/K</div><div class="t" style="left:187.3px;top:477.0px;font-size:11.4px;color:#111;line-height:12px;letter-spacing:.35px;">A</div><div class="t" style="left:220.3px;top:477.0px;font-size:11.4px;color:#111;line-height:12px;letter-spacing:.35px;">L</div><div class="t" style="left:253.3px;top:477.0px;font-size:11.4px;color:#111;line-height:12px;letter-spacing:.35px;">a</div><div class="t" style="left:286.3px;top:477.0px;font-size:11.4px;color:#111;line-height:12px;letter-spacing:.35px;">b</div><div class="t" style="left:319.3px;top:477.0px;font-size:11.4px;color:#111;line-height:12px;letter-spacing:.35px;">c</div><div class="t" style="left:352.3px;top:477.0px;font-size:11.4px;color:#111;line-height:12px;letter-spacing:.35px;">H</div><div class="t" style="left:385.3px;top:477.0px;font-size:11.4px;color:#111;line-height:12px;letter-spacing:.35px;">S</div><div class="t" style="left:26.4px;top:501.0px;font-size:11.4px;color:#7b7b7b;letter-spacing:0.346px;line-height:12px;">Input:</div><div class="t" style="left:16.2px;top:526.0px;font-size:11.4px;color:#111;letter-spacing:0.487px;line-height:12px;">Output:</div><div class="a" style="left:62.5px;top:497px;width:69px;height:19px;background:#c6c6c6;box-sizing:border-box;border:1px solid #8d8d8d"></div><div class="a" style="left:62.5px;top:522px;width:69px;height:19px;background:#e4e4e4;box-sizing:border-box;border:1px solid #8d8d8d"></div><div class="t" style="left:69.5px;top:501.0px;font-size:11.4px;color:#808080;letter-spacing:0.599px;line-height:12px;">0.00000</div><div class="t" style="left:69.5px;top:526.0px;font-size:11.4px;color:#111;letter-spacing:0.599px;line-height:12px;">0.00000</div><div class="t" style="left:193.0px;top:526.0px;font-size:11.4px;color:#111;letter-spacing:0.503px;line-height:12px;">1 / 2</div><svg style="left:0px;top:0px" width="403" height="570" viewBox="0 0 403 570"><path d="M150 501.29999999999995v10l-7-5z" fill="#8a8a8a"/><path d="M174 501.29999999999995v10l-6.500-5z" fill="#8a8a8a"/><rect x="165.5" y="501.29999999999995" width="2" height="10" fill="#8a8a8a"/><path d="M142 526.3v10l7-5z" fill="#222"/><path d="M166 526.3v10l6.500-5z" fill="#222"/><rect x="172.5" y="526.3" width="2" height="10" fill="#222"/><path d="M309 499.29999999999995h12" stroke="#1560bd" stroke-width="2"/><path d="M315 514.3v-9" stroke="#1560bd" stroke-width="2.400"/><path d="M315 500.79999999999995l5.500 6h-11z" fill="#1560bd"/><path d="M333 513.3h12" stroke="#9a9a9a" stroke-width="2"/><path d="M339 498.29999999999995v9" stroke="#9a9a9a" stroke-width="2.400"/><path d="M339 511.79999999999995l5.500-6h-11z" fill="#9a9a9a"/><path d="M369 499.29999999999995v6.500l-12 0z" fill="#9a9a9a"/><path d="M369 513.3v-6.500h-12z" fill="#8a20c0"/><path d="M381.5 500.79999999999995l11 11M392.5 500.79999999999995l-11 11" stroke="#d04020" stroke-width="2.600"/><rect x="329.5" y="521.8" width="19" height="19" fill="#eee" stroke="#8f8f8f"/><rect x="332.5" y="524.8" width="13" height="13" fill="#e8ecff" stroke="#1a30d0" stroke-width="1.300"/><path d="M334 536.8C337 534.3 336 527.3 339 527.3v9.500z" fill="#2a40e8"/><path d="M339 536.8h5l-5-5z" fill="#2a40e8"/><rect x="356.5" y="524.8" width="13" height="13" fill="#e8ecff" stroke="#1a30d0" stroke-width="1.300"/><path d="M357.5 536.8C361 533.3 361 526.3 363 526.3s2 7 5.500 10.500z" fill="#2a40e8"/><rect x="380.5" y="524.8" width="13" height="13" fill="#e8ecff" stroke="#1a30d0" stroke-width="1.300"/><path d="M381.5 536.8L387 526.3L392.5 536.8z" fill="#2a40e8"/><path d="M12.5 551.5v12h12z" fill="#1560bd"/><rect x="36.5" y="552.0" width="11" height="11" fill="#1560bd"/><rect x="57.5" y="548.0" width="19.500" height="19.500" fill="#ececec" stroke="#8f8f8f"/><circle cx="67.29999999999995" cy="557.5" r="4.600" fill="#f09070" stroke="#1560bd" stroke-width="1.500"/><rect x="306" y="553.5" width="10" height="8.500" fill="none" stroke="#1560bd" stroke-width="1.500"/><path d="M331 552.5h6l4.500 4.500v6h-10.500z" fill="none" stroke="#1560bd" stroke-width="1.500"/><path d="M355.5 557.5l3.500 4 7-8.500" fill="none" stroke="#1560bd" stroke-width="2.200"/><path d="M381 551.5l12 12M393 551.5l-12 12" stroke="#1560bd" stroke-width="1.500"/><path d="M385.2 555.7h-4l4 -4z" fill="#1560bd"/><path d="M388.8 555.7h4l-4 -4z" fill="#1560bd"/><path d="M385.2 559.3h-4l4 4z" fill="#1560bd"/><path d="M388.8 559.3h4l-4 4z" fill="#1560bd"/></svg></div><div class="a" style="left:234px;top:307px;width:1042px;height:739px;background:#5967b4"></div><div class="a" style="left:236.5px;top:333px;width:1037.5px;height:711px;background:#dfdfdf"></div><div class="a" style="left:1272px;top:333px;width:2px;height:677px;background:#6c6c6c"></div><div class="t" style="left:597.5px;top:313.0px;font-size:12.6px;color:#fff;font-weight:bold;letter-spacing:1.070px;line-height:14px;">Real-Time Preview: CurvesTransformation</div><svg style="left:0px;top:0px" width="1300" height="340" viewBox="0 0 1300 340"><circle cx="246.2" cy="320.3" r="6" fill="none" stroke="#f2555a" stroke-width="4.2"/><circle cx="246.2" cy="320.3" r="8.1" fill="none" stroke="#40202a" stroke-width=".8"/><circle cx="246.2" cy="320.3" r="3.9" fill="none" stroke="#40202a" stroke-width=".8"/><path d="M1238 321.5h9M1242.5 317v9" stroke="#fff" stroke-width="2.6"/><path d="M1259.4 317.6l7.8 7.8M1267.2 317.6l-7.8 7.8" stroke="#fff" stroke-width="2.2"/></svg><svg style="left:0px;top:0px" width="1300" height="700" viewBox="0 0 1300 700"><defs><pattern id="ck_p" width="2" height="2" patternUnits="userSpaceOnUse"><rect width="2" height="2" fill="#ddd"/><rect width="1" height="1" fill="#333"/><rect x="1" y="1" width="1" height="1" fill="#333"/></pattern></defs><rect x="240.5" y="341.5" width="18" height="18" fill="#fff" stroke="#8f8f8f"/><circle cx="249.5" cy="350.5" r="4.6" fill="none" stroke="#1560bd" stroke-width="1.8"/><rect x="240.5" y="364.5" width="18" height="18" fill="#fff" stroke="#8f8f8f"/><rect x="243.5" y="367.5" width="12" height="12" fill="#fff" stroke="#333" stroke-width="1.3"/><rect x="244" y="368.5" width="5.5" height="10.5" fill="url(#ck_p)"/><rect x="240.5" y="387.5" width="18" height="18" fill="#d3d3d3" stroke="#a7a7a7"/><rect x="244" y="391" width="8" height="8" fill="#e4e4e4" stroke="#8c8c8c"/><rect x="247.5" y="394.5" width="8" height="8" fill="#ece6e0" stroke="#8c8c8c"/><rect x="243.5" y="425.5" width="12.5" height="12.5" fill="#e60d0d" stroke="#222" stroke-width="1"/><text x="249.8" y="435.2" font-family="Liberation Mono" font-size="9" font-weight="bold" text-anchor="middle" fill="#fff">R</text><rect x="243.5" y="448.5" width="12.5" height="12.5" fill="#12d412" stroke="#222" stroke-width="1"/><text x="249.8" y="458.2" font-family="Liberation Mono" font-size="9" font-weight="bold" text-anchor="middle" fill="#053005">G</text><rect x="243.5" y="471.5" width="12.5" height="12.5" fill="#0d0de6" stroke="#222" stroke-width="1"/><text x="249.8" y="481.2" font-family="Liberation Mono" font-size="9" font-weight="bold" text-anchor="middle" fill="#fff">B</text><rect x="240.5" y="491.5" width="18" height="18" fill="#fff" stroke="#8f8f8f"/><rect x="243.5" y="494.5" width="12" height="12" fill="#bbb" stroke="#222"/><rect x="244.5" y="495.5" width="3.4" height="8" fill="#e01010"/><rect x="247.9" y="495.5" width="3.4" height="8" fill="#10c010"/><rect x="251.3" y="495.5" width="3.4" height="8" fill="#1010e8"/><rect x="243.5" y="517.5" width="12.5" height="12.5" fill="#b9b5b0" stroke="#8a8a8a"/><text x="249.8" y="527.4" font-family="Liberation Mono" font-size="9" font-weight="bold" text-anchor="middle" fill="#e8e8e8">A</text><path d="M241.5 553.5h4l1.2-2.2h5l1.2 2.2h4.3v11h-15.7z" fill="#454545"/><circle cx="250.8" cy="558.8" r="3.2" fill="#fff"/><circle cx="250.8" cy="558.8" r="1.7" fill="#454545"/><rect x="242.6" y="551.6" width="2.6" height="1.4" fill="#454545"/><rect x="240.5" y="584.5" width="18" height="18" fill="#fff" stroke="#8f8f8f"/><rect x="246" y="588" width="10" height="8" fill="#fff" stroke="#333" stroke-width="1.2"/><rect x="245.4" y="587.4" width="11.2" height="2.4" fill="#333"/><rect x="243" y="592" width="10" height="8" fill="#fff" stroke="#333" stroke-width="1.2"/><rect x="242.4" y="591.4" width="11.2" height="2.4" fill="#333"/></svg><div class="a" style="left:263px;top:333px;width:1009px;height:677px;overflow:hidden"><svg style="left:0;top:0" width="1009" height="677" viewBox="0 0 1009 677"><defs><filter id="pb05" x="-50%" y="-50%" width="200%" height="200%"><feGaussianBlur stdDeviation=".5"/></filter><filter id="pb1" x="-50%" y="-50%" width="200%" height="200%"><feGaussianBlur stdDeviation="1.3"/></filter><filter id="pb3" x="-50%" y="-50%" width="200%" height="200%"><feGaussianBlur stdDeviation="3"/></filter><filter id="pb6" x="-50%" y="-50%" width="200%" height="200%"><feGaussianBlur stdDeviation="7"/></filter><radialGradient id="m81"><stop offset="0" stop-color="#e8b838"/><stop offset=".1" stop-color="#b08a2a"/><stop offset=".26" stop-color="#6e5a22"/><stop offset=".5" stop-color="#403a1f" stop-opacity=".8"/><stop offset="1" stop-color="#25241e" stop-opacity="0"/></radialGradient></defs><rect width="1009" height="677" fill="#121215"/><circle cx="628.5" cy="502.2" r="0.76" fill="#8088d8" opacity="0.66"/><circle cx="534.8" cy="568.9" r="0.51" fill="#7d7fb8" opacity="0.80"/><circle cx="114.2" cy="317.6" r="0.62" fill="#b88440" opacity="0.44"/><circle cx="737.8" cy="276.3" r="0.73" fill="#a8a8b0" opacity="0.39"/><circle cx="804.3" cy="93.9" r="0.47" fill="#7d7fb8" opacity="0.83"/><circle cx="5.4" cy="523.7" r="0.84" fill="#a08c58" opacity="0.46"/><circle cx="970.1" cy="365.1" r="0.49" fill="#8088d8" opacity="0.41"/><circle cx="973.8" cy="259.4" r="0.57" fill="#a08c58" opacity="0.45"/><circle cx="334.8" cy="553.4" r="0.63" fill="#8088d8" opacity="0.49"/><circle cx="312.7" cy="554.1" r="0.53" fill="#a8a8b0" opacity="0.56"/><circle cx="177.7" cy="173.4" r="1.15" fill="#6a74c8" opacity="0.76"/><circle cx="18.2" cy="533.3" r="0.63" fill="#7d7fb8" opacity="0.55"/><circle cx="714.1" cy="422.3" r="0.83" fill="#a08c58" opacity="0.81"/><circle cx="950.5" cy="233.1" r="0.61" fill="#9090a0" opacity="0.55"/><circle cx="595.1" cy="528.7" r="0.53" fill="#a8a8b0" opacity="0.82"/><circle cx="92.0" cy="230.7" r="0.75" fill="#6a74c8" opacity="0.45"/><circle cx="708.9" cy="62.3" r="0.53" fill="#9090a0" opacity="0.34"/><circle cx="150.2" cy="466.6" r="0.84" fill="#7d7fb8" opacity="0.34"/><circle cx="606.1" cy="625.3" r="0.69" fill="#6a74c8" opacity="0.75"/><circle cx="459.8" cy="285.5" r="0.75" fill="#7d7fb8" opacity="0.74"/><circle cx="337.2" cy="140.2" r="1.00" fill="#a08c58" opacity="0.65"/><circle cx="795.1" cy="72.2" r="0.47" fill="#9090a0" opacity="0.53"/><circle cx="142.5" cy="624.2" r="0.48" fill="#b88440" opacity="0.55"/><circle cx="492.6" cy="493.9" r="0.52" fill="#a8a8b0" opacity="0.80"/><circle cx="113.6" cy="556.5" r="0.48" fill="#a8a8b0" opacity="0.78"/><circle cx="181.7" cy="333.0" r="0.62" fill="#b88440" opacity="0.50"/><circle cx="793.1" cy="524.6" r="0.66" fill="#9090a0" opacity="0.47"/><circle cx="564.3" cy="452.4" r="0.52" fill="#8088d8" opacity="0.69"/><circle cx="965.5" cy="230.2" r="0.73" fill="#a8a8b0" opacity="0.60"/><circle cx="252.9" cy="454.7" r="0.71" fill="#8088d8" opacity="0.67"/><circle cx="359.8" cy="185.4" r="0.76" fill="#a8a8b0" opacity="0.49"/><circle cx="850.5" cy="588.9" r="0.77" fill="#6a74c8" opacity="0.58"/><circle cx="534.1" cy="112.5" r="0.76" fill="#a8a8b0" opacity="0.46"/><circle cx="79.5" cy="454.2" r="0.64" fill="#b88440" opacity="0.58"/><circle cx="944.9" cy="204.9" r="0.73" fill="#6a74c8" opacity="0.70"/><circle cx="27.9" cy="108.3" r="0.65" fill="#a08c58" opacity="0.72"/><circle cx="182.2" cy="486.4" r="1.16" fill="#a08c58" opacity="0.33"/><circle cx="134.7" cy="214.8" r="0.49" fill="#7d7fb8" opacity="0.53"/><circle cx="354.3" cy="448.5" r="0.49" fill="#8088d8" opacity="0.80"/><circle cx="0.7" cy="274.4" r="0.57" fill="#7d7fb8" opacity="0.68"/><circle cx="552.2" cy="652.9" r="0.53" fill="#6a74c8" opacity="0.60"/><circle cx="342.4" cy="393.3" r="1.10" fill="#a8a8b0" opacity="0.53"/><circle cx="569.0" cy="364.5" r="0.48" fill="#a8a8b0" opacity="0.61"/><circle cx="965.8" cy="655.3" r="0.55" fill="#8088d8" opacity="0.30"/><circle cx="108.9" cy="383.1" r="0.47" fill="#8088d8" opacity="0.78"/><circle cx="569.4" cy="290.6" r="0.97" fill="#a8a8b0" opacity="0.83"/><circle cx="383.2" cy="650.7" r="1.01" fill="#6a74c8" opacity="0.71"/><circle cx="303.5" cy="170.0" r="0.76" fill="#6a74c8" opacity="0.57"/><circle cx="289.0" cy="322.9" r="0.64" fill="#a8a8b0" opacity="0.44"/><circle cx="40.3" cy="92.4" r="0.59" fill="#b88440" opacity="0.45"/><circle cx="943.7" cy="529.4" r="0.52" fill="#a08c58" opacity="0.70"/><circle cx="288.3" cy="333.3" r="0.98" fill="#9090a0" opacity="0.63"/><circle cx="750.2" cy="80.0" r="0.53" fill="#b88440" opacity="0.69"/><circle cx="619.1" cy="495.1" r="0.55" fill="#8088d8" opacity="0.71"/><circle cx="596.1" cy="24.7" r="0.58" fill="#7d7fb8" opacity="0.79"/><circle cx="550.5" cy="9.9" r="0.57" fill="#b88440" opacity="0.68"/><circle cx="961.8" cy="439.3" r="1.11" fill="#a8a8b0" opacity="0.52"/><circle cx="859.6" cy="133.0" r="0.72" fill="#7d7fb8" opacity="0.47"/><circle cx="3.3" cy="527.4" r="0.65" fill="#a8a8b0" opacity="0.80"/><circle cx="144.0" cy="323.9" r="0.60" fill="#6a74c8" opacity="0.60"/><circle cx="429.4" cy="366.5" r="0.68" fill="#6a74c8" opacity="0.75"/><circle cx="798.9" cy="449.3" r="0.68" fill="#7d7fb8" opacity="0.85"/><circle cx="707.6" cy="33.1" r="0.50" fill="#8088d8" opacity="0.75"/><circle cx="112.2" cy="605.8" r="1.06" fill="#a8a8b0" opacity="0.38"/><circle cx="616.1" cy="280.2" r="0.64" fill="#7d7fb8" opacity="0.61"/><circle cx="666.2" cy="504.7" r="0.63" fill="#7d7fb8" opacity="0.71"/><circle cx="886.4" cy="90.9" r="0.53" fill="#b88440" opacity="0.57"/><circle cx="356.6" cy="444.2" r="0.83" fill="#6a74c8" opacity="0.38"/><circle cx="637.0" cy="342.5" r="1.00" fill="#b88440" opacity="0.42"/><circle cx="63.8" cy="159.5" r="0.52" fill="#a08c58" opacity="0.74"/><circle cx="871.3" cy="306.9" r="0.47" fill="#7d7fb8" opacity="0.66"/><circle cx="86.0" cy="452.2" r="0.46" fill="#b88440" opacity="0.55"/><circle cx="393.4" cy="313.2" r="0.82" fill="#b88440" opacity="0.32"/><circle cx="731.5" cy="36.3" r="0.76" fill="#8088d8" opacity="0.74"/><circle cx="756.4" cy="56.7" r="0.97" fill="#a08c58" opacity="0.38"/><circle cx="630.4" cy="239.9" r="0.54" fill="#b88440" opacity="0.69"/><circle cx="803.2" cy="256.0" r="0.55" fill="#6a74c8" opacity="0.74"/><circle cx="437.3" cy="576.5" r="0.63" fill="#b88440" opacity="0.42"/><circle cx="182.2" cy="42.8" r="0.49" fill="#a08c58" opacity="0.32"/><circle cx="897.3" cy="325.6" r="0.42" fill="#a8a8b0" opacity="0.47"/><circle cx="943.0" cy="624.0" r="0.59" fill="#a08c58" opacity="0.39"/><circle cx="160.5" cy="253.6" r="0.74" fill="#a08c58" opacity="0.60"/><circle cx="111.2" cy="554.1" r="0.66" fill="#7d7fb8" opacity="0.57"/><circle cx="32.4" cy="625.9" r="0.76" fill="#8088d8" opacity="0.31"/><circle cx="460.8" cy="574.6" r="0.70" fill="#6a74c8" opacity="0.46"/><circle cx="680.5" cy="493.7" r="0.49" fill="#7d7fb8" opacity="0.62"/><circle cx="662.4" cy="418.1" r="1.06" fill="#8088d8" opacity="0.47"/><circle cx="472.2" cy="191.7" r="0.68" fill="#a08c58" opacity="0.73"/><circle cx="177.2" cy="141.3" r="0.64" fill="#8088d8" opacity="0.84"/><circle cx="6.3" cy="41.2" r="0.57" fill="#7d7fb8" opacity="0.32"/><circle cx="843.1" cy="566.8" r="0.76" fill="#8088d8" opacity="0.34"/><circle cx="906.9" cy="332.5" r="0.80" fill="#a08c58" opacity="0.65"/><circle cx="501.9" cy="529.1" r="0.72" fill="#a8a8b0" opacity="0.47"/><circle cx="51.8" cy="25.5" r="0.85" fill="#b88440" opacity="0.65"/><circle cx="189.8" cy="158.2" r="1.09" fill="#7d7fb8" opacity="0.60"/><circle cx="929.6" cy="405.0" r="0.86" fill="#7d7fb8" opacity="0.54"/><circle cx="360.8" cy="286.5" r="0.61" fill="#a08c58" opacity="0.70"/><circle cx="921.2" cy="208.3" r="0.72" fill="#a08c58" opacity="0.60"/><circle cx="140.0" cy="327.1" r="0.51" fill="#a8a8b0" opacity="0.47"/><circle cx="131.0" cy="55.5" r="0.45" fill="#a8a8b0" opacity="0.83"/><circle cx="672.3" cy="186.7" r="0.51" fill="#8088d8" opacity="0.41"/><circle cx="288.6" cy="253.0" r="0.57" fill="#6a74c8" opacity="0.51"/><circle cx="776.2" cy="0.1" r="0.76" fill="#a08c58" opacity="0.62"/><circle cx="446.2" cy="553.0" r="0.76" fill="#8088d8" opacity="0.33"/><circle cx="431.4" cy="72.1" r="0.62" fill="#6a74c8" opacity="0.34"/><circle cx="170.9" cy="177.8" r="0.52" fill="#7d7fb8" opacity="0.60"/><circle cx="745.6" cy="18.9" r="0.77" fill="#9090a0" opacity="0.50"/><circle cx="867.5" cy="642.6" r="0.50" fill="#a8a8b0" opacity="0.37"/><circle cx="203.0" cy="242.5" r="0.64" fill="#a08c58" opacity="0.70"/><circle cx="96.2" cy="359.0" r="0.68" fill="#a8a8b0" opacity="0.72"/><circle cx="438.5" cy="290.7" r="0.58" fill="#a08c58" opacity="0.55"/><circle cx="438.1" cy="298.8" r="0.76" fill="#b88440" opacity="0.56"/><circle cx="495.8" cy="1.1" r="0.73" fill="#8088d8" opacity="0.33"/><circle cx="986.8" cy="22.3" r="0.59" fill="#6a74c8" opacity="0.52"/><circle cx="217.6" cy="187.6" r="0.62" fill="#6a74c8" opacity="0.72"/><circle cx="792.3" cy="248.2" r="0.71" fill="#8088d8" opacity="0.76"/><circle cx="857.5" cy="418.5" r="0.47" fill="#9090a0" opacity="0.43"/><circle cx="385.0" cy="63.5" r="0.69" fill="#6a74c8" opacity="0.80"/><circle cx="201.1" cy="539.6" r="0.67" fill="#9090a0" opacity="0.59"/><circle cx="91.9" cy="134.7" r="0.46" fill="#b88440" opacity="0.62"/><circle cx="186.4" cy="263.4" r="0.43" fill="#6a74c8" opacity="0.58"/><circle cx="505.7" cy="369.4" r="0.58" fill="#9090a0" opacity="0.75"/><circle cx="932.2" cy="469.0" r="0.61" fill="#9090a0" opacity="0.53"/><circle cx="966.9" cy="13.6" r="0.49" fill="#6a74c8" opacity="0.34"/><circle cx="88.1" cy="240.9" r="0.69" fill="#8088d8" opacity="0.53"/><circle cx="977.3" cy="9.8" r="0.87" fill="#7d7fb8" opacity="0.71"/><circle cx="676.0" cy="647.8" r="1.05" fill="#9090a0" opacity="0.81"/><circle cx="611.2" cy="380.5" r="0.45" fill="#7d7fb8" opacity="0.43"/><circle cx="983.4" cy="368.3" r="0.42" fill="#a8a8b0" opacity="0.51"/><circle cx="757.6" cy="357.7" r="0.66" fill="#6a74c8" opacity="0.51"/><circle cx="109.9" cy="466.3" r="0.68" fill="#6a74c8" opacity="0.44"/><circle cx="101.0" cy="198.9" r="0.71" fill="#7d7fb8" opacity="0.79"/><circle cx="168.9" cy="428.4" r="0.50" fill="#7d7fb8" opacity="0.61"/><circle cx="632.1" cy="433.2" r="0.57" fill="#a08c58" opacity="0.53"/><circle cx="533.5" cy="612.5" r="0.52" fill="#b88440" opacity="0.79"/><circle cx="333.7" cy="285.6" r="0.53" fill="#b88440" opacity="0.63"/><circle cx="185.5" cy="128.8" r="0.65" fill="#8088d8" opacity="0.48"/><circle cx="76.9" cy="644.7" r="0.61" fill="#7d7fb8" opacity="0.48"/><circle cx="858.0" cy="436.8" r="0.87" fill="#8088d8" opacity="0.64"/><circle cx="805.0" cy="568.6" r="0.66" fill="#7d7fb8" opacity="0.35"/><circle cx="153.3" cy="416.9" r="0.69" fill="#8088d8" opacity="0.48"/><circle cx="776.5" cy="123.9" r="0.99" fill="#b88440" opacity="0.64"/><circle cx="973.8" cy="69.9" r="0.44" fill="#a08c58" opacity="0.48"/><circle cx="174.4" cy="603.1" r="1.08" fill="#a08c58" opacity="0.52"/><circle cx="548.4" cy="254.0" r="0.63" fill="#6a74c8" opacity="0.37"/><circle cx="3.3" cy="258.0" r="0.69" fill="#a8a8b0" opacity="0.72"/><circle cx="727.7" cy="200.3" r="0.59" fill="#6a74c8" opacity="0.71"/><circle cx="197.2" cy="232.6" r="0.75" fill="#8088d8" opacity="0.68"/><circle cx="796.1" cy="389.7" r="0.54" fill="#9090a0" opacity="0.33"/><circle cx="436.3" cy="149.2" r="0.89" fill="#8088d8" opacity="0.34"/><circle cx="273.5" cy="65.0" r="0.77" fill="#b88440" opacity="0.76"/><circle cx="863.2" cy="165.9" r="0.47" fill="#7d7fb8" opacity="0.30"/><circle cx="772.8" cy="244.4" r="0.51" fill="#a8a8b0" opacity="0.83"/><circle cx="876.0" cy="53.1" r="0.86" fill="#9090a0" opacity="0.54"/><circle cx="476.1" cy="57.8" r="0.76" fill="#8088d8" opacity="0.56"/><circle cx="22.7" cy="108.3" r="0.60" fill="#9090a0" opacity="0.63"/><circle cx="910.5" cy="436.8" r="0.43" fill="#7d7fb8" opacity="0.53"/><circle cx="729.8" cy="550.0" r="0.58" fill="#a8a8b0" opacity="0.31"/><circle cx="823.0" cy="112.8" r="0.53" fill="#a08c58" opacity="0.53"/><circle cx="980.8" cy="673.1" r="0.57" fill="#6a74c8" opacity="0.38"/><circle cx="366.7" cy="1.6" r="0.70" fill="#9090a0" opacity="0.55"/><circle cx="74.6" cy="258.1" r="1.13" fill="#a08c58" opacity="0.66"/><circle cx="754.1" cy="334.3" r="0.58" fill="#a8a8b0" opacity="0.43"/><circle cx="928.5" cy="634.7" r="0.49" fill="#a8a8b0" opacity="0.35"/><circle cx="132.5" cy="442.7" r="0.50" fill="#6a74c8" opacity="0.59"/><circle cx="983.7" cy="475.3" r="0.46" fill="#8088d8" opacity="0.52"/><circle cx="306.3" cy="613.7" r="0.58" fill="#9090a0" opacity="0.43"/><circle cx="573.8" cy="178.1" r="0.68" fill="#a08c58" opacity="0.43"/><circle cx="671.0" cy="37.8" r="0.50" fill="#a08c58" opacity="0.58"/><circle cx="616.0" cy="536.8" r="0.60" fill="#7d7fb8" opacity="0.68"/><circle cx="892.1" cy="525.7" r="0.58" fill="#7d7fb8" opacity="0.66"/><circle cx="933.1" cy="250.8" r="0.68" fill="#b88440" opacity="0.82"/><circle cx="996.9" cy="204.3" r="0.76" fill="#7d7fb8" opacity="0.65"/><circle cx="55.7" cy="143.6" r="0.46" fill="#b88440" opacity="0.46"/><circle cx="556.7" cy="561.7" r="0.55" fill="#a8a8b0" opacity="0.30"/><circle cx="569.8" cy="383.7" r="0.69" fill="#7d7fb8" opacity="0.49"/><circle cx="145.1" cy="655.0" r="0.52" fill="#9090a0" opacity="0.38"/><circle cx="125.5" cy="170.2" r="0.51" fill="#a08c58" opacity="0.65"/><circle cx="247.9" cy="178.3" r="0.95" fill="#9090a0" opacity="0.40"/><circle cx="138.5" cy="35.2" r="0.62" fill="#7d7fb8" opacity="0.55"/><circle cx="700.0" cy="413.6" r="0.65" fill="#7d7fb8" opacity="0.62"/><circle cx="118.5" cy="488.2" r="0.64" fill="#a08c58" opacity="0.60"/><circle cx="702.4" cy="477.8" r="0.63" fill="#7d7fb8" opacity="0.34"/><circle cx="464.4" cy="439.3" r="1.06" fill="#7d7fb8" opacity="0.83"/><circle cx="685.9" cy="185.1" r="0.53" fill="#a8a8b0" opacity="0.46"/><circle cx="1.5" cy="513.3" r="0.74" fill="#a8a8b0" opacity="0.51"/><circle cx="661.9" cy="638.7" r="0.64" fill="#a8a8b0" opacity="0.35"/><circle cx="355.9" cy="53.6" r="0.64" fill="#8088d8" opacity="0.52"/><circle cx="198.4" cy="619.5" r="0.60" fill="#b88440" opacity="0.49"/><circle cx="17.2" cy="293.7" r="0.60" fill="#a08c58" opacity="0.61"/><circle cx="668.3" cy="284.1" r="0.72" fill="#6a74c8" opacity="0.64"/><circle cx="197.8" cy="288.0" r="0.61" fill="#a8a8b0" opacity="0.65"/><circle cx="646.4" cy="647.4" r="0.70" fill="#6a74c8" opacity="0.35"/><circle cx="878.6" cy="192.7" r="0.48" fill="#9090a0" opacity="0.83"/><circle cx="387.6" cy="430.8" r="0.51" fill="#a8a8b0" opacity="0.77"/><circle cx="890.4" cy="211.2" r="0.54" fill="#9090a0" opacity="0.52"/><circle cx="66.8" cy="46.6" r="0.45" fill="#8088d8" opacity="0.79"/><circle cx="510.9" cy="70.5" r="0.50" fill="#7d7fb8" opacity="0.82"/><circle cx="546.0" cy="441.1" r="0.54" fill="#6a74c8" opacity="0.82"/><circle cx="470.3" cy="69.6" r="0.46" fill="#b88440" opacity="0.35"/><circle cx="660.6" cy="449.4" r="0.46" fill="#6a74c8" opacity="0.60"/><circle cx="981.7" cy="289.7" r="0.61" fill="#a08c58" opacity="0.51"/><circle cx="639.6" cy="622.0" r="0.71" fill="#b88440" opacity="0.34"/><circle cx="308.9" cy="579.5" r="0.53" fill="#b88440" opacity="0.80"/><circle cx="579.1" cy="338.6" r="0.69" fill="#6a74c8" opacity="0.55"/><circle cx="407.6" cy="480.7" r="0.63" fill="#a8a8b0" opacity="0.68"/><circle cx="735.6" cy="69.5" r="0.83" fill="#a08c58" opacity="0.65"/><circle cx="725.8" cy="174.0" r="0.66" fill="#9090a0" opacity="0.68"/><circle cx="106.2" cy="392.9" r="0.55" fill="#7d7fb8" opacity="0.60"/><circle cx="560.5" cy="139.9" r="0.63" fill="#a8a8b0" opacity="0.65"/><circle cx="493.1" cy="591.5" r="0.89" fill="#6a74c8" opacity="0.33"/><circle cx="291.2" cy="354.7" r="0.55" fill="#9090a0" opacity="0.37"/><circle cx="661.0" cy="512.5" r="0.42" fill="#a08c58" opacity="0.47"/><circle cx="860.7" cy="447.7" r="0.72" fill="#8088d8" opacity="0.55"/><circle cx="922.8" cy="354.9" r="0.67" fill="#9090a0" opacity="0.74"/><circle cx="160.7" cy="334.8" r="0.70" fill="#9090a0" opacity="0.56"/><circle cx="376.5" cy="153.9" r="0.77" fill="#8088d8" opacity="0.41"/><circle cx="983.1" cy="577.2" r="0.72" fill="#8088d8" opacity="0.36"/><circle cx="421.4" cy="584.5" r="0.75" fill="#a08c58" opacity="0.66"/><circle cx="586.6" cy="503.3" r="0.58" fill="#6a74c8" opacity="0.42"/><circle cx="94.6" cy="377.5" r="0.71" fill="#9090a0" opacity="0.68"/><circle cx="62.1" cy="176.3" r="0.47" fill="#7d7fb8" opacity="0.55"/><circle cx="191.2" cy="128.5" r="0.74" fill="#9090a0" opacity="0.56"/><circle cx="291.7" cy="50.5" r="0.67" fill="#b88440" opacity="0.64"/><circle cx="842.3" cy="415.7" r="0.73" fill="#b88440" opacity="0.41"/><circle cx="657.3" cy="300.6" r="0.77" fill="#8088d8" opacity="0.49"/><circle cx="101.0" cy="250.1" r="0.50" fill="#7d7fb8" opacity="0.32"/><circle cx="58.5" cy="126.9" r="0.93" fill="#9090a0" opacity="0.82"/><circle cx="902.5" cy="466.6" r="0.56" fill="#a8a8b0" opacity="0.38"/><circle cx="969.6" cy="185.4" r="0.49" fill="#8088d8" opacity="0.77"/><circle cx="689.1" cy="516.4" r="1.14" fill="#9090a0" opacity="0.75"/><circle cx="831.4" cy="609.1" r="0.72" fill="#8088d8" opacity="0.54"/><circle cx="192.5" cy="221.7" r="0.67" fill="#9090a0" opacity="0.33"/><circle cx="828.6" cy="656.6" r="0.65" fill="#8088d8" opacity="0.63"/><circle cx="365.7" cy="97.4" r="0.42" fill="#a08c58" opacity="0.69"/><circle cx="956.7" cy="502.9" r="0.59" fill="#9090a0" opacity="0.76"/><circle cx="329.1" cy="625.9" r="0.47" fill="#7d7fb8" opacity="0.84"/><circle cx="729.4" cy="250.3" r="0.88" fill="#b88440" opacity="0.55"/><circle cx="927.0" cy="411.6" r="0.48" fill="#a8a8b0" opacity="0.61"/><circle cx="986.9" cy="11.2" r="0.46" fill="#b88440" opacity="0.34"/><circle cx="541.8" cy="148.7" r="0.63" fill="#7d7fb8" opacity="0.34"/><circle cx="328.2" cy="117.9" r="0.70" fill="#7d7fb8" opacity="0.47"/><circle cx="683.8" cy="83.6" r="0.45" fill="#8088d8" opacity="0.78"/><circle cx="687.7" cy="57.6" r="0.74" fill="#a08c58" opacity="0.54"/><circle cx="152.5" cy="188.4" r="0.45" fill="#8088d8" opacity="0.58"/><circle cx="888.9" cy="562.9" r="0.45" fill="#a8a8b0" opacity="0.46"/><circle cx="96.8" cy="234.1" r="0.81" fill="#6a74c8" opacity="0.78"/><circle cx="359.4" cy="70.4" r="0.72" fill="#a8a8b0" opacity="0.48"/><circle cx="692.2" cy="306.6" r="0.80" fill="#a08c58" opacity="0.79"/><circle cx="312.3" cy="311.4" r="0.99" fill="#b88440" opacity="0.58"/><circle cx="853.4" cy="385.7" r="0.66" fill="#b88440" opacity="0.70"/><circle cx="942.5" cy="84.0" r="0.54" fill="#7d7fb8" opacity="0.47"/><circle cx="368.5" cy="408.4" r="0.48" fill="#a8a8b0" opacity="0.38"/><circle cx="308.1" cy="384.4" r="0.67" fill="#7d7fb8" opacity="0.34"/><circle cx="82.2" cy="424.2" r="0.66" fill="#7d7fb8" opacity="0.54"/><circle cx="299.2" cy="470.3" r="0.78" fill="#b88440" opacity="0.77"/><circle cx="849.3" cy="419.3" r="0.48" fill="#a8a8b0" opacity="0.85"/><circle cx="857.1" cy="59.9" r="0.52" fill="#9090a0" opacity="0.49"/><circle cx="633.3" cy="78.1" r="0.58" fill="#6a74c8" opacity="0.37"/><circle cx="754.2" cy="492.3" r="0.52" fill="#a08c58" opacity="0.84"/><circle cx="9.6" cy="462.7" r="0.49" fill="#a08c58" opacity="0.54"/><circle cx="619.1" cy="307.7" r="0.43" fill="#9090a0" opacity="0.41"/><circle cx="409.4" cy="468.0" r="1.04" fill="#7d7fb8" opacity="0.80"/><circle cx="785.6" cy="207.4" r="0.64" fill="#a08c58" opacity="0.77"/><circle cx="12.7" cy="132.8" r="0.59" fill="#a08c58" opacity="0.33"/><circle cx="226.2" cy="669.6" r="0.50" fill="#a8a8b0" opacity="0.31"/><circle cx="705.0" cy="513.8" r="0.67" fill="#7d7fb8" opacity="0.44"/><circle cx="65.9" cy="74.4" r="1.07" fill="#9090a0" opacity="0.49"/><circle cx="340.2" cy="278.1" r="0.53" fill="#a8a8b0" opacity="0.40"/><circle cx="726.4" cy="332.4" r="0.53" fill="#9090a0" opacity="0.43"/><circle cx="55.7" cy="505.5" r="0.76" fill="#a08c58" opacity="0.51"/><circle cx="578.4" cy="191.2" r="0.51" fill="#a8a8b0" opacity="0.38"/><circle cx="748.0" cy="625.8" r="0.51" fill="#b88440" opacity="0.57"/><circle cx="844.5" cy="503.9" r="0.54" fill="#a8a8b0" opacity="0.49"/><circle cx="270.2" cy="145.9" r="0.63" fill="#a8a8b0" opacity="0.38"/><circle cx="9.0" cy="395.7" r="0.42" fill="#6a74c8" opacity="0.35"/><circle cx="239.1" cy="259.2" r="0.50" fill="#9090a0" opacity="0.70"/><circle cx="208.3" cy="623.7" r="0.63" fill="#8088d8" opacity="0.76"/><circle cx="601.6" cy="150.2" r="0.53" fill="#6a74c8" opacity="0.34"/><circle cx="188.4" cy="315.3" r="0.45" fill="#8088d8" opacity="0.65"/><circle cx="572.7" cy="639.7" r="0.79" fill="#7d7fb8" opacity="0.61"/><circle cx="610.9" cy="443.7" r="0.52" fill="#a8a8b0" opacity="0.77"/><circle cx="611.1" cy="228.3" r="0.62" fill="#8088d8" opacity="0.41"/><circle cx="103.1" cy="628.9" r="0.60" fill="#6a74c8" opacity="0.60"/><circle cx="200.3" cy="485.1" r="0.72" fill="#6a74c8" opacity="0.34"/><circle cx="354.8" cy="470.5" r="0.43" fill="#a08c58" opacity="0.82"/><circle cx="813.4" cy="256.4" r="0.44" fill="#a8a8b0" opacity="0.57"/><circle cx="150.8" cy="451.6" r="0.59" fill="#b88440" opacity="0.33"/><circle cx="997.3" cy="269.4" r="0.49" fill="#9090a0" opacity="0.66"/><circle cx="333.9" cy="463.2" r="0.64" fill="#b88440" opacity="0.67"/><circle cx="164.1" cy="259.5" r="0.73" fill="#a08c58" opacity="0.61"/><circle cx="792.5" cy="446.9" r="0.77" fill="#a8a8b0" opacity="0.57"/><circle cx="528.5" cy="488.9" r="0.59" fill="#a8a8b0" opacity="0.54"/><circle cx="571.6" cy="671.3" r="0.68" fill="#a08c58" opacity="0.35"/><circle cx="784.2" cy="441.3" r="0.70" fill="#9090a0" opacity="0.67"/><circle cx="13.8" cy="472.5" r="0.47" fill="#7d7fb8" opacity="0.74"/><circle cx="835.9" cy="43.7" r="0.75" fill="#7d7fb8" opacity="0.72"/><circle cx="336.6" cy="521.2" r="0.66" fill="#8088d8" opacity="0.72"/><circle cx="342.8" cy="151.6" r="0.60" fill="#9090a0" opacity="0.66"/><circle cx="566.8" cy="33.2" r="0.90" fill="#a8a8b0" opacity="0.84"/><circle cx="205.3" cy="371.3" r="0.77" fill="#a08c58" opacity="0.75"/><circle cx="243.5" cy="451.9" r="0.74" fill="#a8a8b0" opacity="0.43"/><circle cx="418.1" cy="146.3" r="0.53" fill="#9090a0" opacity="0.38"/><circle cx="317.4" cy="520.2" r="0.92" fill="#a08c58" opacity="0.85"/><circle cx="105.2" cy="378.4" r="0.61" fill="#8088d8" opacity="0.45"/><circle cx="145.3" cy="531.6" r="0.58" fill="#9090a0" opacity="0.38"/><circle cx="938.5" cy="149.9" r="0.49" fill="#a8a8b0" opacity="0.79"/><circle cx="428.1" cy="2.1" r="0.78" fill="#8088d8" opacity="0.52"/><circle cx="88.5" cy="65.1" r="0.62" fill="#a08c58" opacity="0.80"/><circle cx="916.2" cy="101.2" r="1.00" fill="#6a74c8" opacity="0.45"/><circle cx="440.9" cy="652.3" r="0.59" fill="#8088d8" opacity="0.82"/><circle cx="479.6" cy="208.3" r="0.51" fill="#a8a8b0" opacity="0.36"/><circle cx="588.3" cy="434.3" r="0.56" fill="#a08c58" opacity="0.67"/><circle cx="678.2" cy="352.9" r="0.47" fill="#7d7fb8" opacity="0.31"/><circle cx="623.2" cy="279.9" r="0.96" fill="#b88440" opacity="0.43"/><circle cx="316.5" cy="333.6" r="0.73" fill="#a8a8b0" opacity="0.44"/><circle cx="268.7" cy="416.3" r="0.99" fill="#8088d8" opacity="0.54"/><circle cx="677.6" cy="316.9" r="0.48" fill="#a08c58" opacity="0.53"/><circle cx="844.4" cy="401.8" r="0.50" fill="#7d7fb8" opacity="0.73"/><circle cx="433.0" cy="150.9" r="1.16" fill="#8088d8" opacity="0.57"/><circle cx="791.0" cy="90.7" r="1.12" fill="#a8a8b0" opacity="0.36"/><circle cx="472.7" cy="48.7" r="0.66" fill="#6a74c8" opacity="0.76"/><circle cx="942.9" cy="492.2" r="0.52" fill="#8088d8" opacity="0.50"/><circle cx="309.4" cy="351.4" r="0.55" fill="#9090a0" opacity="0.39"/><circle cx="227.0" cy="349.4" r="0.52" fill="#a8a8b0" opacity="0.76"/><circle cx="222.0" cy="122.2" r="0.75" fill="#6a74c8" opacity="0.78"/><circle cx="96.0" cy="132.9" r="0.69" fill="#b88440" opacity="0.79"/><circle cx="677.8" cy="77.0" r="0.92" fill="#a8a8b0" opacity="0.36"/><circle cx="37.1" cy="644.5" r="0.92" fill="#a8a8b0" opacity="0.48"/><circle cx="846.4" cy="210.4" r="0.50" fill="#7d7fb8" opacity="0.72"/><circle cx="331.0" cy="59.0" r="0.77" fill="#7d7fb8" opacity="0.47"/><circle cx="612.8" cy="340.6" r="0.67" fill="#a8a8b0" opacity="0.41"/><circle cx="396.9" cy="666.2" r="0.65" fill="#b88440" opacity="0.31"/><circle cx="806.6" cy="404.9" r="0.69" fill="#b88440" opacity="0.31"/><circle cx="693.5" cy="222.6" r="0.43" fill="#7d7fb8" opacity="0.78"/><circle cx="564.6" cy="638.2" r="0.74" fill="#7d7fb8" opacity="0.69"/><circle cx="221.2" cy="669.6" r="0.63" fill="#8088d8" opacity="0.48"/><circle cx="704.7" cy="137.8" r="0.48" fill="#b88440" opacity="0.76"/><circle cx="289.9" cy="418.5" r="0.54" fill="#6a74c8" opacity="0.47"/><circle cx="34.9" cy="192.8" r="0.64" fill="#9090a0" opacity="0.66"/><circle cx="264.5" cy="51.4" r="0.63" fill="#b88440" opacity="0.52"/><circle cx="652.4" cy="72.3" r="0.47" fill="#a8a8b0" opacity="0.32"/><circle cx="606.9" cy="217.7" r="0.51" fill="#9090a0" opacity="0.83"/><circle cx="531.2" cy="506.9" r="0.63" fill="#b88440" opacity="0.69"/><circle cx="500.8" cy="612.2" r="0.52" fill="#8088d8" opacity="0.75"/><circle cx="754.7" cy="517.1" r="0.47" fill="#9090a0" opacity="0.34"/><circle cx="916.9" cy="298.1" r="0.69" fill="#7d7fb8" opacity="0.62"/><circle cx="797.4" cy="398.4" r="0.87" fill="#8088d8" opacity="0.79"/><circle cx="508.6" cy="336.3" r="0.47" fill="#a8a8b0" opacity="0.63"/><circle cx="917.8" cy="408.9" r="0.65" fill="#8088d8" opacity="0.77"/><circle cx="636.2" cy="90.7" r="0.69" fill="#a8a8b0" opacity="0.39"/><circle cx="362.2" cy="464.8" r="0.60" fill="#9090a0" opacity="0.42"/><circle cx="826.3" cy="322.2" r="1.16" fill="#7d7fb8" opacity="0.79"/><circle cx="26.6" cy="363.1" r="1.12" fill="#a08c58" opacity="0.67"/><circle cx="725.4" cy="302.5" r="0.54" fill="#8088d8" opacity="0.53"/><circle cx="80.4" cy="184.9" r="0.45" fill="#7d7fb8" opacity="0.34"/><circle cx="856.9" cy="98.9" r="0.76" fill="#a8a8b0" opacity="0.54"/><circle cx="843.4" cy="258.8" r="0.49" fill="#a08c58" opacity="0.35"/><circle cx="668.2" cy="660.3" r="0.43" fill="#a8a8b0" opacity="0.80"/><circle cx="598.2" cy="149.0" r="0.76" fill="#b88440" opacity="0.63"/><circle cx="12.0" cy="298.8" r="0.72" fill="#8088d8" opacity="0.51"/><circle cx="259.7" cy="334.1" r="0.62" fill="#8088d8" opacity="0.78"/><circle cx="175.4" cy="546.0" r="0.74" fill="#7d7fb8" opacity="0.65"/><circle cx="568.8" cy="557.1" r="0.46" fill="#9090a0" opacity="0.79"/><circle cx="856.1" cy="363.6" r="0.59" fill="#7d7fb8" opacity="0.69"/><circle cx="379.6" cy="77.1" r="0.68" fill="#a8a8b0" opacity="0.48"/><circle cx="223.3" cy="655.9" r="0.63" fill="#a08c58" opacity="0.84"/><circle cx="987.1" cy="119.7" r="0.68" fill="#a8a8b0" opacity="0.64"/><circle cx="15.9" cy="594.2" r="0.97" fill="#7d7fb8" opacity="0.42"/><circle cx="550.4" cy="289.6" r="0.84" fill="#9090a0" opacity="0.44"/><circle cx="346.0" cy="72.0" r="0.77" fill="#6a74c8" opacity="0.66"/><circle cx="545.8" cy="447.0" r="0.69" fill="#8088d8" opacity="0.39"/><circle cx="251.9" cy="226.8" r="0.66" fill="#b88440" opacity="0.60"/><circle cx="1004.6" cy="541.6" r="1.13" fill="#7d7fb8" opacity="0.37"/><circle cx="126.6" cy="499.9" r="0.44" fill="#a8a8b0" opacity="0.82"/><circle cx="938.0" cy="154.1" r="0.96" fill="#a08c58" opacity="0.56"/><circle cx="545.9" cy="175.2" r="0.55" fill="#a08c58" opacity="0.69"/><circle cx="432.8" cy="21.1" r="0.57" fill="#6a74c8" opacity="0.36"/><circle cx="894.0" cy="482.2" r="0.63" fill="#6a74c8" opacity="0.68"/><circle cx="692.7" cy="408.1" r="1.09" fill="#a8a8b0" opacity="0.69"/><circle cx="391.9" cy="521.0" r="0.68" fill="#9090a0" opacity="0.67"/><circle cx="492.8" cy="638.7" r="1.17" fill="#9090a0" opacity="0.32"/><circle cx="73.5" cy="229.6" r="0.62" fill="#6a74c8" opacity="0.41"/><circle cx="973.6" cy="524.7" r="0.77" fill="#7d7fb8" opacity="0.41"/><circle cx="168.4" cy="419.7" r="0.72" fill="#8088d8" opacity="0.63"/><circle cx="262.5" cy="392.1" r="0.65" fill="#7d7fb8" opacity="0.51"/><circle cx="395.5" cy="617.6" r="0.71" fill="#8088d8" opacity="0.80"/><circle cx="130.1" cy="658.9" r="0.72" fill="#b88440" opacity="0.44"/><circle cx="380.4" cy="310.8" r="0.75" fill="#b88440" opacity="0.37"/><circle cx="699.8" cy="53.8" r="0.66" fill="#9090a0" opacity="0.34"/><circle cx="662.3" cy="587.1" r="1.01" fill="#a8a8b0" opacity="0.36"/><circle cx="890.0" cy="200.0" r="0.66" fill="#b88440" opacity="0.41"/><circle cx="446.8" cy="566.1" r="0.54" fill="#a08c58" opacity="0.81"/><circle cx="445.3" cy="6.3" r="0.46" fill="#9090a0" opacity="0.64"/><circle cx="886.3" cy="252.4" r="0.62" fill="#8088d8" opacity="0.44"/><circle cx="634.1" cy="123.3" r="1.05" fill="#a08c58" opacity="0.44"/><circle cx="495.6" cy="305.6" r="0.48" fill="#b88440" opacity="0.32"/><circle cx="143.9" cy="500.2" r="0.49" fill="#9090a0" opacity="0.46"/><circle cx="945.1" cy="575.5" r="1.02" fill="#b88440" opacity="0.64"/><circle cx="780.8" cy="7.9" r="0.51" fill="#9090a0" opacity="0.38"/><circle cx="88.8" cy="670.8" r="1.03" fill="#7d7fb8" opacity="0.60"/><circle cx="800.0" cy="147.5" r="0.75" fill="#a08c58" opacity="0.65"/><circle cx="934.7" cy="338.2" r="0.47" fill="#6a74c8" opacity="0.69"/><circle cx="943.7" cy="100.1" r="0.67" fill="#a8a8b0" opacity="0.78"/><circle cx="227.7" cy="631.0" r="1.05" fill="#a8a8b0" opacity="0.54"/><circle cx="495.3" cy="267.8" r="0.54" fill="#a8a8b0" opacity="0.30"/><circle cx="1008.3" cy="531.4" r="0.72" fill="#6a74c8" opacity="0.49"/><circle cx="897.0" cy="636.6" r="0.65" fill="#a8a8b0" opacity="0.42"/><circle cx="85.2" cy="375.9" r="0.72" fill="#a8a8b0" opacity="0.44"/><circle cx="804.1" cy="265.2" r="0.71" fill="#b88440" opacity="0.77"/><circle cx="927.6" cy="136.0" r="0.45" fill="#6a74c8" opacity="0.65"/><circle cx="435.4" cy="568.5" r="0.52" fill="#8088d8" opacity="0.68"/><circle cx="267.7" cy="462.7" r="0.55" fill="#8088d8" opacity="0.33"/><circle cx="135.3" cy="452.0" r="0.73" fill="#a08c58" opacity="0.31"/><circle cx="315.7" cy="94.4" r="0.91" fill="#9090a0" opacity="0.43"/><circle cx="889.9" cy="576.3" r="0.53" fill="#a8a8b0" opacity="0.84"/><circle cx="531.6" cy="443.9" r="0.71" fill="#8088d8" opacity="0.63"/><circle cx="303.4" cy="619.7" r="1.04" fill="#6a74c8" opacity="0.75"/><circle cx="592.5" cy="102.6" r="0.50" fill="#9090a0" opacity="0.71"/><circle cx="708.9" cy="509.5" r="0.47" fill="#6a74c8" opacity="0.52"/><circle cx="879.3" cy="115.1" r="1.12" fill="#7d7fb8" opacity="0.78"/><circle cx="173.4" cy="70.5" r="0.54" fill="#8088d8" opacity="0.54"/><circle cx="541.5" cy="189.2" r="0.56" fill="#7d7fb8" opacity="0.75"/><circle cx="280.5" cy="594.0" r="0.56" fill="#9090a0" opacity="0.58"/><circle cx="755.5" cy="508.9" r="0.72" fill="#a08c58" opacity="0.44"/><circle cx="778.7" cy="516.2" r="0.73" fill="#8088d8" opacity="0.82"/><circle cx="62.8" cy="577.7" r="0.52" fill="#a08c58" opacity="0.79"/><circle cx="1005.7" cy="166.0" r="0.58" fill="#a08c58" opacity="0.43"/><circle cx="648.0" cy="403.7" r="0.70" fill="#b88440" opacity="0.83"/><circle cx="126.2" cy="152.7" r="1.01" fill="#9090a0" opacity="0.38"/><circle cx="732.2" cy="570.4" r="0.53" fill="#b88440" opacity="0.42"/><circle cx="328.1" cy="626.0" r="0.43" fill="#8088d8" opacity="0.40"/><circle cx="599.2" cy="204.3" r="0.44" fill="#6a74c8" opacity="0.64"/><circle cx="492.7" cy="611.6" r="1.09" fill="#8088d8" opacity="0.35"/><circle cx="236.3" cy="127.7" r="1.11" fill="#a08c58" opacity="0.82"/><circle cx="233.0" cy="551.8" r="0.57" fill="#7d7fb8" opacity="0.49"/><circle cx="122.9" cy="110.6" r="0.67" fill="#a8a8b0" opacity="0.39"/><circle cx="663.7" cy="529.2" r="0.62" fill="#b88440" opacity="0.83"/><circle cx="463.3" cy="168.5" r="0.69" fill="#a08c58" opacity="0.83"/><circle cx="689.7" cy="380.8" r="0.73" fill="#8088d8" opacity="0.83"/><circle cx="211.9" cy="294.1" r="0.59" fill="#a08c58" opacity="0.75"/><circle cx="648.5" cy="232.6" r="0.52" fill="#8088d8" opacity="0.47"/><circle cx="438.9" cy="64.9" r="0.70" fill="#b88440" opacity="0.72"/><circle cx="296.0" cy="489.2" r="0.62" fill="#6a74c8" opacity="0.84"/><circle cx="930.2" cy="145.9" r="0.49" fill="#b88440" opacity="0.40"/><circle cx="334.5" cy="84.3" r="0.77" fill="#7d7fb8" opacity="0.50"/><circle cx="260.5" cy="202.0" r="0.64" fill="#6a74c8" opacity="0.33"/><circle cx="547.6" cy="5.0" r="0.68" fill="#9090a0" opacity="0.70"/><circle cx="930.6" cy="239.9" r="0.55" fill="#b88440" opacity="0.44"/><circle cx="873.4" cy="233.4" r="0.76" fill="#b88440" opacity="0.77"/><circle cx="516.6" cy="173.5" r="0.64" fill="#a8a8b0" opacity="0.84"/><circle cx="694.9" cy="344.3" r="0.60" fill="#a08c58" opacity="0.72"/><circle cx="801.0" cy="637.9" r="0.49" fill="#8088d8" opacity="0.32"/><circle cx="364.0" cy="650.6" r="0.55" fill="#a8a8b0" opacity="0.63"/><circle cx="929.3" cy="662.3" r="0.67" fill="#b88440" opacity="0.68"/><circle cx="427.8" cy="477.6" r="0.65" fill="#a08c58" opacity="0.69"/><circle cx="664.5" cy="250.3" r="0.52" fill="#8088d8" opacity="0.72"/><circle cx="818.8" cy="571.3" r="0.77" fill="#a08c58" opacity="0.36"/><circle cx="790.0" cy="293.6" r="0.54" fill="#8088d8" opacity="0.38"/><circle cx="917.0" cy="141.8" r="0.63" fill="#8088d8" opacity="0.75"/><circle cx="557.4" cy="18.2" r="0.61" fill="#8088d8" opacity="0.74"/><circle cx="829.9" cy="582.8" r="0.44" fill="#a8a8b0" opacity="0.81"/><circle cx="197.1" cy="634.1" r="0.65" fill="#8088d8" opacity="0.70"/><circle cx="699.8" cy="225.3" r="0.65" fill="#a08c58" opacity="0.35"/><circle cx="549.0" cy="111.6" r="0.99" fill="#8088d8" opacity="0.56"/><circle cx="749.0" cy="570.1" r="0.63" fill="#a8a8b0" opacity="0.58"/><circle cx="352.8" cy="544.9" r="0.49" fill="#a08c58" opacity="0.56"/><circle cx="80.6" cy="296.9" r="0.51" fill="#9090a0" opacity="0.40"/><circle cx="255.8" cy="120.7" r="0.78" fill="#b88440" opacity="0.73"/><circle cx="431.7" cy="125.9" r="0.62" fill="#8088d8" opacity="0.69"/><circle cx="68.4" cy="450.8" r="0.64" fill="#7d7fb8" opacity="0.70"/><circle cx="403.3" cy="127.8" r="0.53" fill="#6a74c8" opacity="0.58"/><circle cx="319.0" cy="503.4" r="0.62" fill="#8088d8" opacity="0.57"/><circle cx="892.4" cy="93.8" r="0.78" fill="#6a74c8" opacity="0.36"/><circle cx="581.8" cy="419.7" r="0.45" fill="#9090a0" opacity="0.75"/><circle cx="842.9" cy="17.6" r="0.51" fill="#6a74c8" opacity="0.85"/><circle cx="873.3" cy="637.0" r="0.51" fill="#8088d8" opacity="0.84"/><circle cx="109.2" cy="90.8" r="0.89" fill="#b88440" opacity="0.55"/><circle cx="705.0" cy="19.0" r="0.59" fill="#6a74c8" opacity="0.40"/><circle cx="280.6" cy="173.8" r="0.69" fill="#b88440" opacity="0.52"/><circle cx="832.0" cy="262.1" r="0.48" fill="#8088d8" opacity="0.32"/><circle cx="874.1" cy="603.5" r="0.54" fill="#9090a0" opacity="0.65"/><circle cx="744.8" cy="35.9" r="0.74" fill="#b88440" opacity="0.59"/><circle cx="79.5" cy="131.9" r="0.50" fill="#7d7fb8" opacity="0.66"/><circle cx="977.2" cy="275.9" r="0.54" fill="#6a74c8" opacity="0.32"/><circle cx="368.5" cy="75.3" r="0.55" fill="#7d7fb8" opacity="0.37"/><circle cx="791.4" cy="498.4" r="0.71" fill="#7d7fb8" opacity="0.32"/><circle cx="466.1" cy="525.1" r="0.60" fill="#a08c58" opacity="0.62"/><circle cx="602.3" cy="644.5" r="0.48" fill="#8088d8" opacity="0.77"/><circle cx="647.7" cy="116.3" r="1.07" fill="#8088d8" opacity="0.41"/><circle cx="699.6" cy="123.3" r="0.88" fill="#9090a0" opacity="0.60"/><circle cx="537.0" cy="473.9" r="0.64" fill="#a08c58" opacity="0.39"/><circle cx="39.9" cy="603.6" r="0.62" fill="#b88440" opacity="0.34"/><circle cx="302.0" cy="366.4" r="0.46" fill="#7d7fb8" opacity="0.47"/><circle cx="217.9" cy="270.2" r="0.69" fill="#a8a8b0" opacity="0.60"/><circle cx="337.7" cy="339.4" r="0.67" fill="#9090a0" opacity="0.76"/><circle cx="755.8" cy="375.3" r="0.61" fill="#b88440" opacity="0.61"/><circle cx="164.5" cy="633.9" r="0.48" fill="#9090a0" opacity="0.64"/><circle cx="214.3" cy="572.5" r="0.64" fill="#a8a8b0" opacity="0.47"/><circle cx="280.2" cy="386.0" r="0.67" fill="#a8a8b0" opacity="0.43"/><circle cx="372.8" cy="567.7" r="0.51" fill="#7d7fb8" opacity="0.74"/><circle cx="856.0" cy="383.7" r="0.54" fill="#6a74c8" opacity="0.40"/><circle cx="710.2" cy="220.1" r="0.69" fill="#6a74c8" opacity="0.61"/><circle cx="804.3" cy="601.8" r="0.74" fill="#7d7fb8" opacity="0.46"/><circle cx="417.2" cy="620.0" r="0.58" fill="#a08c58" opacity="0.75"/><circle cx="225.6" cy="124.1" r="0.74" fill="#a08c58" opacity="0.78"/><circle cx="783.0" cy="320.7" r="0.44" fill="#7d7fb8" opacity="0.73"/><circle cx="415.9" cy="99.2" r="0.84" fill="#7d7fb8" opacity="0.47"/><circle cx="131.6" cy="462.0" r="0.68" fill="#6a74c8" opacity="0.44"/><circle cx="721.7" cy="144.5" r="0.42" fill="#7d7fb8" opacity="0.40"/><circle cx="541.6" cy="242.2" r="0.75" fill="#6a74c8" opacity="0.47"/><circle cx="181.9" cy="295.9" r="0.54" fill="#b88440" opacity="0.57"/><circle cx="172.9" cy="464.7" r="1.04" fill="#8088d8" opacity="0.62"/><circle cx="478.0" cy="268.9" r="0.63" fill="#8088d8" opacity="0.73"/><circle cx="390.8" cy="228.7" r="0.62" fill="#a08c58" opacity="0.43"/><circle cx="207.7" cy="584.5" r="0.69" fill="#7d7fb8" opacity="0.62"/><circle cx="40.8" cy="467.5" r="0.74" fill="#9090a0" opacity="0.75"/><circle cx="291.6" cy="62.9" r="0.70" fill="#9090a0" opacity="0.34"/><circle cx="79.9" cy="203.4" r="0.43" fill="#a8a8b0" opacity="0.78"/><circle cx="827.2" cy="301.7" r="0.69" fill="#9090a0" opacity="0.42"/><circle cx="219.9" cy="500.9" r="0.63" fill="#6a74c8" opacity="0.52"/><circle cx="988.4" cy="672.5" r="0.60" fill="#8088d8" opacity="0.78"/><circle cx="508.9" cy="89.4" r="0.47" fill="#6a74c8" opacity="0.31"/><circle cx="781.6" cy="509.6" r="1.15" fill="#9090a0" opacity="0.47"/><circle cx="962.8" cy="218.4" r="0.69" fill="#a8a8b0" opacity="0.58"/><circle cx="802.9" cy="559.2" r="0.64" fill="#8088d8" opacity="0.31"/><circle cx="125.3" cy="590.7" r="0.57" fill="#9090a0" opacity="0.31"/><circle cx="30.5" cy="82.6" r="0.76" fill="#a08c58" opacity="0.57"/><circle cx="11.3" cy="674.7" r="0.52" fill="#9090a0" opacity="0.36"/><circle cx="336.8" cy="529.1" r="0.73" fill="#9090a0" opacity="0.62"/><circle cx="792.5" cy="374.2" r="0.51" fill="#9090a0" opacity="0.59"/><circle cx="832.3" cy="604.7" r="0.56" fill="#8088d8" opacity="0.41"/><circle cx="471.3" cy="176.0" r="0.64" fill="#a08c58" opacity="0.31"/><circle cx="706.1" cy="170.0" r="0.66" fill="#9090a0" opacity="0.36"/><circle cx="12.4" cy="649.0" r="0.80" fill="#9090a0" opacity="0.81"/><circle cx="648.1" cy="72.2" r="0.96" fill="#8088d8" opacity="0.54"/><circle cx="695.4" cy="126.2" r="0.98" fill="#8088d8" opacity="0.63"/><circle cx="746.1" cy="22.0" r="0.77" fill="#a8a8b0" opacity="0.35"/><circle cx="62.8" cy="576.7" r="0.68" fill="#b88440" opacity="0.78"/><circle cx="114.1" cy="233.5" r="0.71" fill="#8088d8" opacity="0.51"/><circle cx="753.9" cy="26.0" r="1.11" fill="#6a74c8" opacity="0.35"/><circle cx="14.6" cy="414.3" r="0.60" fill="#b88440" opacity="0.84"/><circle cx="476.5" cy="587.7" r="0.75" fill="#a8a8b0" opacity="0.81"/><circle cx="11.1" cy="399.6" r="0.55" fill="#b88440" opacity="0.63"/><circle cx="175.8" cy="237.2" r="0.42" fill="#a8a8b0" opacity="0.58"/><circle cx="789.7" cy="617.5" r="1.09" fill="#6a74c8" opacity="0.31"/><circle cx="265.9" cy="356.8" r="0.48" fill="#9090a0" opacity="0.64"/><circle cx="317.8" cy="619.9" r="0.67" fill="#7d7fb8" opacity="0.80"/><circle cx="857.9" cy="110.5" r="0.57" fill="#9090a0" opacity="0.84"/><circle cx="108.0" cy="50.2" r="0.78" fill="#7d7fb8" opacity="0.60"/><circle cx="68.2" cy="241.3" r="0.53" fill="#7d7fb8" opacity="0.57"/><circle cx="203.2" cy="609.4" r="0.48" fill="#b88440" opacity="0.69"/><circle cx="377.1" cy="159.3" r="0.48" fill="#7d7fb8" opacity="0.53"/><circle cx="155.0" cy="508.4" r="0.72" fill="#b88440" opacity="0.49"/><circle cx="541.0" cy="209.5" r="0.74" fill="#9090a0" opacity="0.60"/><circle cx="522.6" cy="19.5" r="0.67" fill="#a8a8b0" opacity="0.38"/><circle cx="450.2" cy="165.0" r="0.71" fill="#8088d8" opacity="0.76"/><circle cx="236.8" cy="411.3" r="0.63" fill="#7d7fb8" opacity="0.57"/><circle cx="425.7" cy="39.6" r="0.81" fill="#b88440" opacity="0.63"/><circle cx="444.5" cy="363.7" r="0.54" fill="#b88440" opacity="0.79"/><circle cx="122.3" cy="80.5" r="0.95" fill="#8088d8" opacity="0.41"/><circle cx="55.2" cy="644.0" r="0.44" fill="#9090a0" opacity="0.44"/><circle cx="76.6" cy="201.0" r="0.71" fill="#b88440" opacity="0.61"/><circle cx="687.3" cy="118.9" r="0.52" fill="#a8a8b0" opacity="0.68"/><circle cx="510.7" cy="68.2" r="0.71" fill="#7d7fb8" opacity="0.73"/><circle cx="586.6" cy="488.7" r="0.46" fill="#8088d8" opacity="0.35"/><circle cx="259.9" cy="423.1" r="0.71" fill="#a08c58" opacity="0.41"/><circle cx="248.9" cy="394.9" r="0.67" fill="#7d7fb8" opacity="0.39"/><circle cx="38.1" cy="660.6" r="0.69" fill="#a8a8b0" opacity="0.33"/><circle cx="217.2" cy="652.9" r="0.56" fill="#6a74c8" opacity="0.73"/><circle cx="871.6" cy="65.8" r="1.03" fill="#b88440" opacity="0.61"/><circle cx="634.1" cy="544.3" r="0.43" fill="#a8a8b0" opacity="0.38"/><circle cx="534.7" cy="474.1" r="0.74" fill="#9090a0" opacity="0.30"/><circle cx="441.7" cy="161.7" r="0.56" fill="#6a74c8" opacity="0.38"/><circle cx="325.3" cy="268.4" r="0.69" fill="#a8a8b0" opacity="0.32"/><circle cx="434.1" cy="81.9" r="0.54" fill="#a08c58" opacity="0.54"/><circle cx="205.5" cy="417.6" r="0.43" fill="#6a74c8" opacity="0.60"/><circle cx="968.4" cy="559.2" r="1.12" fill="#8088d8" opacity="0.63"/><circle cx="691.3" cy="149.2" r="0.57" fill="#8088d8" opacity="0.45"/><circle cx="1008.7" cy="160.1" r="0.69" fill="#b88440" opacity="0.43"/><circle cx="993.8" cy="256.5" r="0.56" fill="#9090a0" opacity="0.69"/><circle cx="98.4" cy="300.8" r="0.78" fill="#8088d8" opacity="0.75"/><circle cx="549.8" cy="389.8" r="0.63" fill="#b88440" opacity="0.72"/><circle cx="871.6" cy="348.0" r="0.76" fill="#8088d8" opacity="0.54"/><circle cx="714.4" cy="65.7" r="1.05" fill="#7d7fb8" opacity="0.63"/><circle cx="169.4" cy="11.4" r="0.74" fill="#a8a8b0" opacity="0.73"/><circle cx="915.9" cy="423.8" r="0.44" fill="#b88440" opacity="0.65"/><circle cx="216.2" cy="638.4" r="0.75" fill="#b88440" opacity="0.32"/><circle cx="753.4" cy="246.1" r="0.42" fill="#9090a0" opacity="0.37"/><circle cx="798.5" cy="602.7" r="1.04" fill="#8088d8" opacity="0.64"/><circle cx="360.8" cy="369.9" r="0.74" fill="#6a74c8" opacity="0.82"/><circle cx="954.7" cy="17.7" r="0.42" fill="#8088d8" opacity="0.36"/><circle cx="437.0" cy="533.1" r="0.55" fill="#a8a8b0" opacity="0.53"/><circle cx="117.2" cy="423.8" r="0.59" fill="#8088d8" opacity="0.50"/><circle cx="527.4" cy="20.4" r="0.49" fill="#a08c58" opacity="0.75"/><circle cx="249.8" cy="139.1" r="0.81" fill="#7d7fb8" opacity="0.61"/><circle cx="285.7" cy="586.6" r="0.57" fill="#7d7fb8" opacity="0.36"/><circle cx="991.3" cy="116.9" r="0.54" fill="#a08c58" opacity="0.59"/><circle cx="374.0" cy="201.3" r="1.15" fill="#9090a0" opacity="0.71"/><circle cx="147.6" cy="572.6" r="0.62" fill="#a08c58" opacity="0.38"/><circle cx="104.8" cy="263.8" r="0.50" fill="#7d7fb8" opacity="0.70"/><circle cx="106.7" cy="245.3" r="0.43" fill="#7d7fb8" opacity="0.44"/><circle cx="830.7" cy="190.1" r="0.61" fill="#a08c58" opacity="0.34"/><circle cx="972.0" cy="432.5" r="0.59" fill="#a08c58" opacity="0.40"/><circle cx="8.8" cy="297.1" r="1.03" fill="#6a74c8" opacity="0.33"/><circle cx="844.9" cy="565.3" r="0.75" fill="#b88440" opacity="0.85"/><circle cx="39.2" cy="92.0" r="0.54" fill="#b88440" opacity="0.58"/><circle cx="618.8" cy="367.6" r="0.60" fill="#8088d8" opacity="0.39"/><circle cx="112.9" cy="346.2" r="0.68" fill="#a08c58" opacity="0.64"/><circle cx="25.2" cy="104.1" r="0.46" fill="#8088d8" opacity="0.70"/><circle cx="66.9" cy="422.7" r="0.43" fill="#a08c58" opacity="0.73"/><circle cx="275.5" cy="641.2" r="1.02" fill="#b88440" opacity="0.31"/><circle cx="545.7" cy="132.1" r="0.76" fill="#6a74c8" opacity="0.71"/><circle cx="529.1" cy="7.5" r="1.11" fill="#7d7fb8" opacity="0.66"/><circle cx="127.3" cy="69.0" r="0.54" fill="#8088d8" opacity="0.60"/><circle cx="857.7" cy="326.9" r="0.52" fill="#a08c58" opacity="0.54"/><circle cx="474.5" cy="350.4" r="0.65" fill="#8088d8" opacity="0.32"/><circle cx="106.2" cy="54.8" r="0.57" fill="#a08c58" opacity="0.79"/><circle cx="740.6" cy="310.0" r="1.15" fill="#7d7fb8" opacity="0.35"/><circle cx="945.0" cy="18.4" r="0.95" fill="#a08c58" opacity="0.49"/><circle cx="288.9" cy="119.4" r="0.46" fill="#a08c58" opacity="0.73"/><circle cx="247.3" cy="49.2" r="0.58" fill="#b88440" opacity="0.40"/><circle cx="904.5" cy="76.5" r="0.72" fill="#7d7fb8" opacity="0.68"/><circle cx="770.2" cy="546.9" r="0.48" fill="#7d7fb8" opacity="0.60"/><circle cx="784.6" cy="94.5" r="0.61" fill="#a8a8b0" opacity="0.69"/><circle cx="872.6" cy="534.8" r="0.44" fill="#b88440" opacity="0.61"/><circle cx="219.6" cy="278.5" r="0.67" fill="#8088d8" opacity="0.48"/><circle cx="52.6" cy="635.1" r="0.65" fill="#a08c58" opacity="0.70"/><circle cx="634.1" cy="17.8" r="0.65" fill="#9090a0" opacity="0.64"/><circle cx="449.6" cy="129.1" r="0.71" fill="#7d7fb8" opacity="0.43"/><circle cx="112.2" cy="264.3" r="0.62" fill="#b88440" opacity="0.51"/><circle cx="722.3" cy="604.2" r="0.64" fill="#a8a8b0" opacity="0.74"/><circle cx="689.7" cy="67.4" r="0.66" fill="#a08c58" opacity="0.35"/><circle cx="532.2" cy="434.5" r="0.53" fill="#6a74c8" opacity="0.53"/><circle cx="780.3" cy="667.4" r="0.74" fill="#8088d8" opacity="0.58"/><circle cx="624.4" cy="19.5" r="0.72" fill="#6a74c8" opacity="0.68"/><circle cx="502.2" cy="622.0" r="0.70" fill="#9090a0" opacity="0.42"/><circle cx="878.3" cy="645.3" r="0.61" fill="#6a74c8" opacity="0.80"/><circle cx="482.7" cy="390.2" r="0.58" fill="#a08c58" opacity="0.83"/><circle cx="24.6" cy="423.2" r="0.46" fill="#6a74c8" opacity="0.70"/><circle cx="818.2" cy="42.7" r="0.47" fill="#7d7fb8" opacity="0.36"/><circle cx="295.4" cy="330.6" r="0.49" fill="#b88440" opacity="0.63"/><circle cx="245.2" cy="625.1" r="0.78" fill="#b88440" opacity="0.81"/><circle cx="632.9" cy="355.6" r="0.65" fill="#a8a8b0" opacity="0.47"/><circle cx="975.9" cy="673.1" r="0.73" fill="#9090a0" opacity="0.39"/><circle cx="43.0" cy="293.6" r="0.53" fill="#6a74c8" opacity="0.76"/><circle cx="802.6" cy="668.0" r="0.71" fill="#7d7fb8" opacity="0.59"/><circle cx="640.6" cy="334.4" r="0.57" fill="#b88440" opacity="0.57"/><circle cx="426.2" cy="606.0" r="0.77" fill="#8088d8" opacity="0.78"/><circle cx="518.6" cy="118.5" r="0.74" fill="#8088d8" opacity="0.37"/><circle cx="603.5" cy="336.2" r="0.69" fill="#6a74c8" opacity="0.69"/><circle cx="717.3" cy="575.9" r="1.07" fill="#a08c58" opacity="0.35"/><circle cx="564.8" cy="591.7" r="0.45" fill="#b88440" opacity="0.39"/><circle cx="878.7" cy="641.0" r="0.61" fill="#7d7fb8" opacity="0.63"/><circle cx="114.4" cy="126.4" r="0.62" fill="#7d7fb8" opacity="0.63"/><circle cx="62.5" cy="642.8" r="0.72" fill="#9090a0" opacity="0.39"/><circle cx="570.7" cy="248.4" r="0.59" fill="#b88440" opacity="0.60"/><circle cx="922.8" cy="340.5" r="0.69" fill="#8088d8" opacity="0.55"/><circle cx="454.5" cy="231.9" r="0.76" fill="#a08c58" opacity="0.44"/><circle cx="986.7" cy="660.9" r="0.49" fill="#8088d8" opacity="0.58"/><circle cx="733.2" cy="173.4" r="0.65" fill="#a08c58" opacity="0.55"/><circle cx="943.9" cy="347.8" r="0.66" fill="#9090a0" opacity="0.72"/><circle cx="227.7" cy="656.1" r="0.69" fill="#b88440" opacity="0.30"/><circle cx="310.3" cy="279.1" r="0.55" fill="#a08c58" opacity="0.61"/><circle cx="382.8" cy="186.5" r="0.70" fill="#8088d8" opacity="0.72"/><circle cx="138.8" cy="326.0" r="0.45" fill="#a08c58" opacity="0.54"/><circle cx="471.9" cy="49.6" r="0.61" fill="#9090a0" opacity="0.82"/><circle cx="402.7" cy="346.6" r="0.72" fill="#a08c58" opacity="0.48"/><circle cx="462.7" cy="108.0" r="0.60" fill="#a8a8b0" opacity="0.48"/><circle cx="924.9" cy="67.1" r="0.53" fill="#b88440" opacity="0.44"/><circle cx="879.3" cy="576.4" r="0.49" fill="#8088d8" opacity="0.71"/><circle cx="674.8" cy="426.2" r="0.58" fill="#a8a8b0" opacity="0.68"/><circle cx="269.6" cy="389.6" r="0.48" fill="#6a74c8" opacity="0.48"/><circle cx="144.1" cy="36.1" r="0.48" fill="#9090a0" opacity="0.49"/><circle cx="892.2" cy="338.1" r="0.48" fill="#a8a8b0" opacity="0.74"/><circle cx="53.8" cy="570.5" r="0.45" fill="#a08c58" opacity="0.55"/><circle cx="886.9" cy="646.4" r="1.07" fill="#a08c58" opacity="0.43"/><circle cx="845.4" cy="494.6" r="0.71" fill="#a08c58" opacity="0.38"/><circle cx="228.7" cy="672.4" r="0.63" fill="#a8a8b0" opacity="0.58"/><circle cx="292.5" cy="491.1" r="0.54" fill="#a8a8b0" opacity="0.49"/><circle cx="699.3" cy="142.8" r="0.71" fill="#b88440" opacity="0.39"/><circle cx="28.9" cy="238.9" r="0.58" fill="#b88440" opacity="0.80"/><circle cx="718.7" cy="56.6" r="0.75" fill="#7d7fb8" opacity="0.59"/><circle cx="819.7" cy="314.7" r="0.56" fill="#6a74c8" opacity="0.42"/><circle cx="346.6" cy="460.3" r="0.63" fill="#9090a0" opacity="0.76"/><circle cx="239.9" cy="130.8" r="0.65" fill="#9090a0" opacity="0.43"/><circle cx="505.0" cy="268.9" r="0.45" fill="#6a74c8" opacity="0.59"/><circle cx="15.0" cy="301.4" r="0.58" fill="#8088d8" opacity="0.51"/><circle cx="895.2" cy="336.5" r="0.91" fill="#6a74c8" opacity="0.33"/><circle cx="944.9" cy="482.9" r="0.99" fill="#9090a0" opacity="0.51"/><circle cx="426.5" cy="596.4" r="0.57" fill="#7d7fb8" opacity="0.34"/><circle cx="966.9" cy="672.8" r="0.57" fill="#9090a0" opacity="0.57"/><circle cx="646.8" cy="262.4" r="0.60" fill="#a08c58" opacity="0.34"/><circle cx="662.0" cy="142.6" r="0.52" fill="#7d7fb8" opacity="0.80"/><circle cx="265.2" cy="502.2" r="0.94" fill="#b88440" opacity="0.42"/><circle cx="363.6" cy="413.4" r="0.59" fill="#a8a8b0" opacity="0.63"/><circle cx="13.7" cy="373.3" r="0.47" fill="#a08c58" opacity="0.69"/><circle cx="269.5" cy="512.2" r="0.45" fill="#6a74c8" opacity="0.68"/><circle cx="335.2" cy="384.6" r="0.65" fill="#8088d8" opacity="0.73"/><circle cx="880.8" cy="338.4" r="0.89" fill="#a8a8b0" opacity="0.84"/><circle cx="826.7" cy="650.0" r="0.66" fill="#7d7fb8" opacity="0.47"/><circle cx="300.2" cy="241.5" r="0.44" fill="#a08c58" opacity="0.71"/><circle cx="280.5" cy="407.5" r="0.74" fill="#b88440" opacity="0.80"/><circle cx="286.5" cy="304.9" r="0.95" fill="#7d7fb8" opacity="0.67"/><circle cx="575.6" cy="71.7" r="0.47" fill="#b88440" opacity="0.35"/><circle cx="812.9" cy="544.5" r="0.60" fill="#a08c58" opacity="0.73"/><circle cx="33.2" cy="496.6" r="0.74" fill="#b88440" opacity="0.81"/><circle cx="613.7" cy="131.9" r="0.57" fill="#8088d8" opacity="0.55"/><circle cx="237.0" cy="257.1" r="0.66" fill="#8088d8" opacity="0.37"/><circle cx="981.0" cy="590.5" r="0.69" fill="#a8a8b0" opacity="0.65"/><circle cx="176.9" cy="193.4" r="0.53" fill="#8088d8" opacity="0.57"/><circle cx="731.7" cy="383.3" r="0.62" fill="#a8a8b0" opacity="0.82"/><circle cx="606.2" cy="318.0" r="0.45" fill="#b88440" opacity="0.84"/><circle cx="752.9" cy="405.1" r="0.64" fill="#a08c58" opacity="0.51"/><circle cx="247.2" cy="342.2" r="1.01" fill="#9090a0" opacity="0.68"/><circle cx="634.2" cy="128.7" r="0.71" fill="#a08c58" opacity="0.53"/><circle cx="871.0" cy="171.3" r="0.71" fill="#8088d8" opacity="0.52"/><circle cx="750.1" cy="622.5" r="0.43" fill="#b88440" opacity="0.79"/><circle cx="532.3" cy="596.4" r="0.64" fill="#a8a8b0" opacity="0.30"/><circle cx="904.0" cy="496.3" r="0.74" fill="#9090a0" opacity="0.53"/><circle cx="638.4" cy="655.0" r="0.76" fill="#6a74c8" opacity="0.49"/><circle cx="201.7" cy="274.7" r="0.68" fill="#9090a0" opacity="0.84"/><circle cx="794.0" cy="331.7" r="0.72" fill="#a08c58" opacity="0.75"/><circle cx="935.0" cy="547.9" r="0.57" fill="#7d7fb8" opacity="0.32"/><circle cx="469.6" cy="296.6" r="0.56" fill="#a8a8b0" opacity="0.39"/><circle cx="546.8" cy="204.9" r="1.07" fill="#a08c58" opacity="0.58"/><circle cx="13.1" cy="427.0" r="0.76" fill="#b88440" opacity="0.42"/><circle cx="322.9" cy="352.7" r="0.55" fill="#b88440" opacity="0.52"/><circle cx="533.3" cy="33.4" r="0.45" fill="#a8a8b0" opacity="0.84"/><circle cx="328.4" cy="206.2" r="0.46" fill="#9090a0" opacity="0.60"/><circle cx="669.7" cy="663.1" r="0.67" fill="#a8a8b0" opacity="0.69"/><circle cx="836.5" cy="534.3" r="0.73" fill="#a08c58" opacity="0.83"/><circle cx="220.0" cy="617.2" r="0.71" fill="#a08c58" opacity="0.67"/><circle cx="141.4" cy="14.6" r="1.17" fill="#7d7fb8" opacity="0.33"/><circle cx="752.7" cy="301.3" r="0.53" fill="#8088d8" opacity="0.41"/><circle cx="128.8" cy="191.6" r="0.72" fill="#b88440" opacity="0.70"/><circle cx="579.9" cy="652.9" r="1.13" fill="#b88440" opacity="0.79"/><circle cx="846.7" cy="552.6" r="0.75" fill="#9090a0" opacity="0.55"/><circle cx="499.0" cy="330.8" r="0.64" fill="#6a74c8" opacity="0.49"/><circle cx="915.7" cy="577.8" r="0.59" fill="#8088d8" opacity="0.73"/><circle cx="333.4" cy="192.4" r="0.43" fill="#a08c58" opacity="0.34"/><circle cx="537.1" cy="45.1" r="0.56" fill="#7d7fb8" opacity="0.60"/><circle cx="979.3" cy="178.6" r="0.76" fill="#b88440" opacity="0.72"/><circle cx="167.7" cy="572.3" r="0.98" fill="#a08c58" opacity="0.47"/><circle cx="28.6" cy="428.7" r="0.48" fill="#a08c58" opacity="0.50"/><circle cx="908.0" cy="461.9" r="0.65" fill="#a08c58" opacity="0.75"/><circle cx="247.1" cy="398.2" r="0.71" fill="#b88440" opacity="0.58"/><circle cx="231.4" cy="163.4" r="0.74" fill="#7d7fb8" opacity="0.52"/><circle cx="21.7" cy="39.3" r="0.53" fill="#9090a0" opacity="0.69"/><circle cx="375.9" cy="23.0" r="0.56" fill="#b88440" opacity="0.42"/><circle cx="706.7" cy="607.1" r="0.44" fill="#9090a0" opacity="0.37"/><circle cx="935.9" cy="325.5" r="0.42" fill="#9090a0" opacity="0.60"/><circle cx="603.5" cy="68.6" r="0.57" fill="#a08c58" opacity="0.83"/><circle cx="325.3" cy="542.8" r="0.59" fill="#b88440" opacity="0.35"/><circle cx="238.5" cy="94.1" r="0.66" fill="#a8a8b0" opacity="0.81"/><circle cx="154.5" cy="482.0" r="0.64" fill="#a8a8b0" opacity="0.65"/><circle cx="841.0" cy="138.0" r="0.85" fill="#a8a8b0" opacity="0.52"/><circle cx="129.1" cy="394.7" r="0.75" fill="#8088d8" opacity="0.46"/><circle cx="464.5" cy="312.0" r="0.49" fill="#a08c58" opacity="0.70"/><circle cx="933.3" cy="620.6" r="0.52" fill="#6a74c8" opacity="0.72"/><circle cx="471.8" cy="319.6" r="0.43" fill="#b88440" opacity="0.75"/><circle cx="264.0" cy="59.2" r="0.47" fill="#b88440" opacity="0.62"/><circle cx="641.0" cy="499.0" r="0.50" fill="#9090a0" opacity="0.55"/><circle cx="65.3" cy="162.1" r="0.75" fill="#9090a0" opacity="0.70"/><circle cx="924.1" cy="192.5" r="0.74" fill="#8088d8" opacity="0.47"/><circle cx="975.0" cy="68.8" r="0.46" fill="#a08c58" opacity="0.61"/><circle cx="934.5" cy="466.9" r="0.86" fill="#9090a0" opacity="0.62"/><circle cx="383.5" cy="565.4" r="0.57" fill="#b88440" opacity="0.69"/><circle cx="65.0" cy="432.8" r="0.60" fill="#b88440" opacity="0.53"/><circle cx="206.1" cy="603.6" r="0.97" fill="#8088d8" opacity="0.46"/><circle cx="605.3" cy="335.0" r="0.66" fill="#a8a8b0" opacity="0.38"/><circle cx="142.4" cy="201.5" r="0.55" fill="#8088d8" opacity="0.54"/><circle cx="682.1" cy="604.3" r="0.42" fill="#b88440" opacity="0.83"/><circle cx="376.5" cy="369.9" r="0.49" fill="#6a74c8" opacity="0.69"/><circle cx="524.9" cy="197.7" r="0.69" fill="#a8a8b0" opacity="0.61"/><circle cx="463.5" cy="672.2" r="0.55" fill="#b88440" opacity="0.65"/><circle cx="241.4" cy="487.6" r="0.70" fill="#a08c58" opacity="0.52"/><circle cx="40.9" cy="169.4" r="0.52" fill="#8088d8" opacity="0.36"/><circle cx="459.2" cy="521.0" r="0.69" fill="#7d7fb8" opacity="0.40"/><circle cx="262.9" cy="521.2" r="0.85" fill="#7d7fb8" opacity="0.65"/><circle cx="270.0" cy="256.4" r="0.60" fill="#7d7fb8" opacity="0.80"/><circle cx="43.0" cy="14.9" r="0.59" fill="#7d7fb8" opacity="0.47"/><circle cx="329.9" cy="389.8" r="0.49" fill="#8088d8" opacity="0.58"/><circle cx="615.0" cy="402.9" r="0.55" fill="#b88440" opacity="0.46"/><circle cx="690.7" cy="309.5" r="0.71" fill="#6a74c8" opacity="0.61"/><circle cx="247.8" cy="666.1" r="0.55" fill="#a8a8b0" opacity="0.51"/><circle cx="114.7" cy="668.0" r="0.77" fill="#a08c58" opacity="0.72"/><circle cx="364.6" cy="427.2" r="0.43" fill="#b88440" opacity="0.60"/><circle cx="298.9" cy="456.9" r="0.50" fill="#8088d8" opacity="0.53"/><circle cx="208.1" cy="38.6" r="0.92" fill="#9090a0" opacity="0.79"/><circle cx="164.0" cy="126.9" r="0.42" fill="#a08c58" opacity="0.69"/><circle cx="873.3" cy="395.5" r="0.71" fill="#8088d8" opacity="0.39"/><circle cx="858.4" cy="10.2" r="0.55" fill="#b88440" opacity="0.55"/><circle cx="714.6" cy="492.4" r="0.68" fill="#a8a8b0" opacity="0.54"/><circle cx="430.1" cy="217.9" r="0.47" fill="#7d7fb8" opacity="0.49"/><circle cx="599.4" cy="663.7" r="0.52" fill="#7d7fb8" opacity="0.46"/><circle cx="60.6" cy="133.5" r="0.64" fill="#b88440" opacity="0.62"/><circle cx="160.3" cy="324.3" r="0.60" fill="#a8a8b0" opacity="0.71"/><circle cx="902.7" cy="185.8" r="0.77" fill="#9090a0" opacity="0.83"/><circle cx="369.5" cy="284.6" r="0.60" fill="#9090a0" opacity="0.32"/><circle cx="45.6" cy="167.6" r="0.50" fill="#a8a8b0" opacity="0.65"/><circle cx="193.4" cy="189.7" r="0.58" fill="#6a74c8" opacity="0.52"/><circle cx="49.8" cy="337.9" r="0.85" fill="#b88440" opacity="0.65"/><circle cx="607.3" cy="386.5" r="0.64" fill="#9090a0" opacity="0.36"/><circle cx="204.2" cy="443.6" r="0.52" fill="#7d7fb8" opacity="0.72"/><circle cx="750.8" cy="365.7" r="0.53" fill="#a8a8b0" opacity="0.32"/><circle cx="570.0" cy="208.8" r="0.77" fill="#b88440" opacity="0.34"/><circle cx="976.2" cy="664.9" r="0.60" fill="#b88440" opacity="0.31"/><circle cx="334.5" cy="472.5" r="0.42" fill="#6a74c8" opacity="0.85"/><circle cx="587.9" cy="64.3" r="0.71" fill="#8088d8" opacity="0.72"/><circle cx="642.8" cy="332.3" r="0.52" fill="#b88440" opacity="0.55"/><circle cx="938.5" cy="432.9" r="0.70" fill="#8088d8" opacity="0.80"/><circle cx="724.5" cy="232.3" r="0.72" fill="#8088d8" opacity="0.52"/><circle cx="288.1" cy="263.7" r="0.55" fill="#b88440" opacity="0.71"/><circle cx="837.0" cy="339.4" r="1.11" fill="#9090a0" opacity="0.76"/><circle cx="358.7" cy="517.4" r="0.52" fill="#8088d8" opacity="0.60"/><circle cx="721.4" cy="115.1" r="0.78" fill="#8088d8" opacity="0.82"/><circle cx="429.4" cy="630.2" r="0.58" fill="#8088d8" opacity="0.79"/><circle cx="43.4" cy="127.6" r="1.04" fill="#6a74c8" opacity="0.59"/><circle cx="306.6" cy="194.1" r="0.43" fill="#a08c58" opacity="0.84"/><circle cx="627.8" cy="241.7" r="0.62" fill="#6a74c8" opacity="0.44"/><circle cx="682.6" cy="592.1" r="0.47" fill="#a08c58" opacity="0.80"/><circle cx="696.4" cy="145.0" r="0.46" fill="#9090a0" opacity="0.62"/><circle cx="486.0" cy="3.8" r="0.61" fill="#8088d8" opacity="0.77"/><circle cx="772.2" cy="493.1" r="0.52" fill="#a8a8b0" opacity="0.68"/><circle cx="966.2" cy="342.8" r="0.57" fill="#8088d8" opacity="0.37"/><circle cx="634.5" cy="72.9" r="0.65" fill="#b88440" opacity="0.37"/><circle cx="350.2" cy="19.6" r="0.46" fill="#b88440" opacity="0.67"/><circle cx="339.3" cy="270.9" r="0.45" fill="#8088d8" opacity="0.62"/><circle cx="150.5" cy="267.1" r="0.43" fill="#9090a0" opacity="0.70"/><circle cx="326.8" cy="168.7" r="0.65" fill="#8088d8" opacity="0.52"/><circle cx="335.4" cy="252.8" r="0.46" fill="#7d7fb8" opacity="0.71"/><circle cx="406.8" cy="571.2" r="0.51" fill="#9090a0" opacity="0.70"/><circle cx="19.3" cy="37.1" r="0.47" fill="#a8a8b0" opacity="0.47"/><circle cx="951.1" cy="616.8" r="0.49" fill="#8088d8" opacity="0.42"/><circle cx="235.1" cy="446.7" r="0.65" fill="#a8a8b0" opacity="0.50"/><circle cx="708.8" cy="657.0" r="0.57" fill="#9090a0" opacity="0.62"/><circle cx="681.2" cy="611.3" r="0.46" fill="#7d7fb8" opacity="0.31"/><circle cx="783.4" cy="378.6" r="0.56" fill="#a08c58" opacity="0.54"/><circle cx="491.3" cy="234.7" r="1.07" fill="#7d7fb8" opacity="0.43"/><circle cx="547.8" cy="250.8" r="0.49" fill="#9090a0" opacity="0.60"/><circle cx="375.2" cy="371.3" r="0.58" fill="#b88440" opacity="0.82"/><circle cx="883.1" cy="120.5" r="0.69" fill="#6a74c8" opacity="0.67"/><circle cx="946.6" cy="71.5" r="0.58" fill="#9090a0" opacity="0.78"/><circle cx="223.4" cy="415.1" r="0.71" fill="#7d7fb8" opacity="0.75"/><circle cx="27.7" cy="125.4" r="0.75" fill="#a08c58" opacity="0.50"/><circle cx="213.0" cy="22.1" r="0.72" fill="#9090a0" opacity="0.82"/><circle cx="103.3" cy="1.8" r="0.57" fill="#a08c58" opacity="0.78"/><circle cx="196.8" cy="360.9" r="0.58" fill="#7d7fb8" opacity="0.50"/><circle cx="978.8" cy="435.8" r="0.47" fill="#b88440" opacity="0.77"/><circle cx="311.6" cy="38.2" r="0.92" fill="#7d7fb8" opacity="0.63"/><circle cx="956.1" cy="36.4" r="0.87" fill="#a08c58" opacity="0.37"/><circle cx="118.5" cy="667.7" r="0.47" fill="#6a74c8" opacity="0.39"/><circle cx="418.8" cy="536.2" r="0.51" fill="#7d7fb8" opacity="0.76"/><circle cx="691.0" cy="410.2" r="0.53" fill="#6a74c8" opacity="0.59"/><circle cx="907.8" cy="457.4" r="0.60" fill="#6a74c8" opacity="0.31"/><circle cx="79.0" cy="302.3" r="0.78" fill="#7d7fb8" opacity="0.78"/><circle cx="259.7" cy="289.1" r="0.72" fill="#a8a8b0" opacity="0.56"/><circle cx="488.0" cy="78.5" r="0.69" fill="#8088d8" opacity="0.75"/><circle cx="813.5" cy="131.4" r="0.81" fill="#a08c58" opacity="0.59"/><circle cx="995.5" cy="166.8" r="0.65" fill="#a8a8b0" opacity="0.42"/><circle cx="585.7" cy="398.1" r="0.44" fill="#b88440" opacity="0.33"/><circle cx="615.6" cy="576.8" r="0.89" fill="#a8a8b0" opacity="0.51"/><circle cx="983.1" cy="343.8" r="0.66" fill="#a08c58" opacity="0.48"/><circle cx="108.4" cy="584.4" r="0.69" fill="#9090a0" opacity="0.58"/><circle cx="464.9" cy="611.4" r="0.57" fill="#7d7fb8" opacity="0.31"/><circle cx="357.8" cy="415.0" r="0.47" fill="#a8a8b0" opacity="0.60"/><circle cx="293.9" cy="226.4" r="0.50" fill="#8088d8" opacity="0.37"/><circle cx="468.8" cy="444.3" r="0.64" fill="#9090a0" opacity="0.71"/><circle cx="516.9" cy="44.9" r="0.61" fill="#8088d8" opacity="0.80"/><circle cx="608.4" cy="142.3" r="0.73" fill="#8088d8" opacity="0.57"/><circle cx="759.7" cy="17.4" r="0.69" fill="#9090a0" opacity="0.37"/><circle cx="515.5" cy="613.8" r="1.11" fill="#8088d8" opacity="0.82"/><circle cx="871.9" cy="15.6" r="0.75" fill="#6a74c8" opacity="0.75"/><circle cx="7.0" cy="144.6" r="0.74" fill="#8088d8" opacity="0.39"/><circle cx="754.5" cy="518.0" r="0.73" fill="#a08c58" opacity="0.57"/><circle cx="777.4" cy="134.7" r="0.43" fill="#8088d8" opacity="0.57"/><circle cx="547.6" cy="184.2" r="0.71" fill="#a8a8b0" opacity="0.80"/><circle cx="360.7" cy="522.1" r="0.73" fill="#6a74c8" opacity="0.48"/><circle cx="267.5" cy="29.5" r="0.66" fill="#9090a0" opacity="0.39"/><circle cx="717.1" cy="411.5" r="0.67" fill="#6a74c8" opacity="0.68"/><circle cx="282.8" cy="244.6" r="0.99" fill="#9090a0" opacity="0.73"/><circle cx="208.1" cy="437.1" r="0.67" fill="#9090a0" opacity="0.31"/><circle cx="764.7" cy="16.8" r="0.47" fill="#9090a0" opacity="0.83"/><circle cx="114.5" cy="609.6" r="0.54" fill="#7d7fb8" opacity="0.37"/><circle cx="568.7" cy="576.2" r="0.73" fill="#8088d8" opacity="0.60"/><circle cx="394.1" cy="439.5" r="0.66" fill="#9090a0" opacity="0.40"/><circle cx="276.5" cy="563.3" r="0.46" fill="#9090a0" opacity="0.61"/><circle cx="592.6" cy="238.8" r="0.63" fill="#a08c58" opacity="0.66"/><circle cx="619.4" cy="328.4" r="0.55" fill="#a8a8b0" opacity="0.44"/><circle cx="154.9" cy="318.3" r="0.75" fill="#9090a0" opacity="0.67"/><circle cx="111.1" cy="151.7" r="0.57" fill="#6a74c8" opacity="0.66"/><circle cx="408.4" cy="334.5" r="0.60" fill="#6a74c8" opacity="0.33"/><circle cx="262.6" cy="264.8" r="0.63" fill="#9090a0" opacity="0.31"/><circle cx="459.8" cy="244.4" r="0.90" fill="#8088d8" opacity="0.61"/><circle cx="858.0" cy="149.9" r="0.45" fill="#a8a8b0" opacity="0.44"/><circle cx="399.4" cy="284.7" r="0.76" fill="#9090a0" opacity="0.55"/><circle cx="601.7" cy="658.3" r="0.91" fill="#6a74c8" opacity="0.63"/><circle cx="826.2" cy="209.6" r="0.68" fill="#8088d8" opacity="0.77"/><circle cx="605.2" cy="54.2" r="0.46" fill="#b88440" opacity="0.78"/><circle cx="467.2" cy="252.7" r="1.11" fill="#8088e0" opacity="0.72"/><circle cx="467.9" cy="409.4" r="1.13" fill="#8088e0" opacity="0.85"/><circle cx="170.9" cy="640.6" r="1.39" fill="#c09048" opacity="0.68"/><circle cx="111.9" cy="342.7" r="1.49" fill="#6a78e0" opacity="0.88"/><circle cx="895.2" cy="622.1" r="0.92" fill="#6a78e0" opacity="0.91"/><circle cx="779.5" cy="617.0" r="0.95" fill="#8088e0" opacity="0.67"/><circle cx="894.4" cy="595.3" r="0.96" fill="#6a78e0" opacity="0.65"/><circle cx="238.9" cy="498.4" r="1.70" fill="#8088e0" opacity="0.64"/><circle cx="583.9" cy="606.1" r="0.85" fill="#8088e0" opacity="0.65"/><circle cx="925.9" cy="339.0" r="1.01" fill="#c09048" opacity="0.75"/><circle cx="401.7" cy="432.4" r="1.02" fill="#c09048" opacity="0.93"/><circle cx="726.1" cy="27.9" r="1.05" fill="#c09048" opacity="0.86"/><circle cx="743.5" cy="389.5" r="1.11" fill="#6a78e0" opacity="0.93"/><circle cx="238.9" cy="413.7" r="0.96" fill="#8088e0" opacity="0.90"/><circle cx="111.0" cy="596.9" r="0.91" fill="#c09048" opacity="0.95"/><circle cx="579.6" cy="12.4" r="0.95" fill="#6a78e0" opacity="0.64"/><circle cx="223.7" cy="182.5" r="0.94" fill="#b0b0c8" opacity="0.64"/><circle cx="791.2" cy="17.2" r="1.09" fill="#6a78e0" opacity="0.72"/><circle cx="784.8" cy="383.2" r="1.04" fill="#8088e0" opacity="0.94"/><circle cx="404.5" cy="252.5" r="1.36" fill="#b0b0c8" opacity="0.66"/><circle cx="850.9" cy="175.3" r="1.14" fill="#c09048" opacity="0.69"/><circle cx="165.7" cy="81.4" r="0.86" fill="#6a78e0" opacity="0.67"/><circle cx="392.4" cy="414.0" r="1.35" fill="#c09048" opacity="0.77"/><circle cx="280.2" cy="651.1" r="0.94" fill="#8088e0" opacity="0.62"/><circle cx="455.5" cy="476.5" r="0.96" fill="#c09048" opacity="0.83"/><circle cx="276.6" cy="404.4" r="0.95" fill="#8088e0" opacity="0.70"/><circle cx="129.5" cy="540.5" r="0.90" fill="#c09048" opacity="0.90"/><circle cx="204.7" cy="320.7" r="1.01" fill="#8088e0" opacity="0.66"/><circle cx="486.4" cy="640.7" r="1.13" fill="#8088e0" opacity="0.80"/><circle cx="590.5" cy="295.0" r="1.01" fill="#8088e0" opacity="0.91"/><circle cx="579.0" cy="646.8" r="0.92" fill="#c09048" opacity="0.64"/><circle cx="705.8" cy="307.0" r="1.04" fill="#8088e0" opacity="0.84"/><circle cx="29.5" cy="164.9" r="0.96" fill="#6a78e0" opacity="0.91"/><circle cx="36.3" cy="404.1" r="1.05" fill="#6a78e0" opacity="0.81"/><circle cx="81.5" cy="23.1" r="0.88" fill="#8088e0" opacity="0.72"/><circle cx="474.5" cy="362.6" r="1.08" fill="#b0b0c8" opacity="0.63"/><circle cx="324.4" cy="314.0" r="0.89" fill="#6a78e0" opacity="0.95"/><circle cx="840.3" cy="71.9" r="0.92" fill="#c09048" opacity="0.67"/><circle cx="223.1" cy="74.9" r="1.13" fill="#8088e0" opacity="0.73"/><circle cx="747.7" cy="316.5" r="0.96" fill="#8088e0" opacity="0.68"/><circle cx="258.7" cy="350.6" r="0.98" fill="#8088e0" opacity="0.94"/><circle cx="524.1" cy="282.4" r="1.42" fill="#b0b0c8" opacity="0.81"/><circle cx="222.7" cy="39.7" r="0.94" fill="#c09048" opacity="0.94"/><circle cx="793.4" cy="610.5" r="1.65" fill="#b0b0c8" opacity="0.94"/><circle cx="95.3" cy="215.1" r="1.03" fill="#6a78e0" opacity="0.80"/><circle cx="888.8" cy="604.2" r="0.87" fill="#b0b0c8" opacity="0.76"/><circle cx="616.0" cy="384.8" r="0.91" fill="#6a78e0" opacity="0.62"/><circle cx="92.7" cy="215.0" r="0.91" fill="#b0b0c8" opacity="0.83"/><circle cx="138.9" cy="423.4" r="0.98" fill="#6a78e0" opacity="0.67"/><circle cx="546.8" cy="227.0" r="1.02" fill="#6a78e0" opacity="0.68"/><circle cx="733.8" cy="517.2" r="1.00" fill="#6a78e0" opacity="0.85"/><circle cx="287.2" cy="361.2" r="0.85" fill="#b0b0c8" opacity="0.61"/><circle cx="150.5" cy="110.6" r="1.10" fill="#6a78e0" opacity="0.83"/><circle cx="399.0" cy="601.5" r="0.89" fill="#b0b0c8" opacity="0.73"/><circle cx="272.4" cy="216.9" r="0.90" fill="#c09048" opacity="0.80"/><circle cx="9.5" cy="463.2" r="0.99" fill="#6a78e0" opacity="0.92"/><circle cx="761.4" cy="184.7" r="0.99" fill="#c09048" opacity="0.66"/><circle cx="148.0" cy="459.4" r="0.87" fill="#b0b0c8" opacity="0.93"/><circle cx="26.5" cy="126.2" r="1.05" fill="#8088e0" opacity="0.76"/><circle cx="343.8" cy="506.3" r="0.98" fill="#c09048" opacity="0.89"/><circle cx="573.7" cy="6.8" r="0.86" fill="#b0b0c8" opacity="0.77"/><circle cx="61.5" cy="547.1" r="0.99" fill="#c09048" opacity="0.79"/><circle cx="926.1" cy="652.7" r="0.96" fill="#c09048" opacity="0.87"/><circle cx="977.8" cy="126.1" r="1.13" fill="#b0b0c8" opacity="0.83"/><circle cx="983.7" cy="117.3" r="1.11" fill="#c09048" opacity="0.83"/><circle cx="341.9" cy="478.7" r="0.97" fill="#8088e0" opacity="0.74"/><circle cx="786.6" cy="307.4" r="1.17" fill="#c09048" opacity="0.89"/><circle cx="891.0" cy="481.3" r="1.09" fill="#6a78e0" opacity="0.90"/><circle cx="797.0" cy="624.4" r="0.96" fill="#6a78e0" opacity="0.65"/><circle cx="419.9" cy="506.6" r="1.05" fill="#8088e0" opacity="0.78"/><g transform="translate(461,79.80000000000001) rotate(26)"><ellipse rx="38" ry="5" fill="#3c4450" filter="url(#pb3)"/><ellipse rx="28" ry="2.400" fill="#8a94a6" filter="url(#pb1)"/><ellipse cx="-6" cy="-.6" rx="5.500" ry="1.600" fill="#e8e0c8" filter="url(#pb1)"/><ellipse cx="5" cy="1.500" rx="7" ry="2" fill="#b87828" filter="url(#pb1)"/><ellipse cx="0" cy="1.800" rx="3.400" ry="3.200" fill="#f53a2a" filter="url(#pb1)"/></g><g transform="translate(476.79999999999995,445) rotate(-62)"><ellipse rx="64" ry="30" fill="#26282f" opacity=".75" filter="url(#pb6)"/><ellipse rx="50" ry="21" fill="none" stroke="#8a3260" stroke-width="1.300" stroke-dasharray="2 6 6 5 2 10" opacity=".45" filter="url(#pb1)"/><ellipse rx="48" ry="24" fill="url(#m81)"/><ellipse rx="2.600" ry="2" fill="#ffd860" filter="url(#pb05)"/></g><circle cx="81" cy="603" r="3.0" fill="#5560ff" opacity=".35" filter="url(#pb1)"/><circle cx="81" cy="603" r="1.5" fill="#5560ff" filter="url(#pb05)"/><circle cx="81" cy="603" r="0.6000000000000001" fill="#fff" opacity=".8"/><circle cx="154" cy="645" r="2.8" fill="#5560ff" opacity=".35" filter="url(#pb1)"/><circle cx="154" cy="645" r="1.4" fill="#5560ff" filter="url(#pb05)"/><circle cx="154" cy="645" r="0.5599999999999999" fill="#fff" opacity=".8"/><circle cx="112" cy="453" r="2.6" fill="#b0a0d8" opacity=".35" filter="url(#pb1)"/><circle cx="112" cy="453" r="1.3" fill="#b0a0d8" filter="url(#pb05)"/><circle cx="112" cy="453" r="0.52" fill="#fff" opacity=".8"/><circle cx="503" cy="542" r="2.6" fill="#5a64ff" opacity=".35" filter="url(#pb1)"/><circle cx="503" cy="542" r="1.3" fill="#5a64ff" filter="url(#pb05)"/><circle cx="503" cy="542" r="0.52" fill="#fff" opacity=".8"/><circle cx="535" cy="216" r="2.2" fill="#8aa0ff" opacity=".35" filter="url(#pb1)"/><circle cx="535" cy="216" r="1.1" fill="#8aa0ff" filter="url(#pb05)"/><circle cx="535" cy="216" r="0.44000000000000006" fill="#fff" opacity=".8"/><circle cx="126" cy="235" r="2.4" fill="#9ab0ff" opacity=".35" filter="url(#pb1)"/><circle cx="126" cy="235" r="1.2" fill="#9ab0ff" filter="url(#pb05)"/><circle cx="126" cy="235" r="0.48" fill="#fff" opacity=".8"/><circle cx="626" cy="93" r="1.8" fill="#c04040" opacity=".35" filter="url(#pb1)"/><circle cx="626" cy="93" r="0.9" fill="#c04040" filter="url(#pb05)"/><circle cx="626" cy="93" r="0.36000000000000004" fill="#fff" opacity=".8"/><circle cx="813" cy="139" r="1.8" fill="#7a84e0" opacity=".35" filter="url(#pb1)"/><circle cx="813" cy="139" r="0.9" fill="#7a84e0" filter="url(#pb05)"/><circle cx="813" cy="139" r="0.36000000000000004" fill="#fff" opacity=".8"/><circle cx="539" cy="25" r="2" fill="#d09040" opacity=".35" filter="url(#pb1)"/><circle cx="539" cy="25" r="1" fill="#d09040" filter="url(#pb05)"/><circle cx="539" cy="25" r="0.4" fill="#fff" opacity=".8"/><circle cx="879" cy="629" r="2" fill="#d08030" opacity=".35" filter="url(#pb1)"/><circle cx="879" cy="629" r="1" fill="#d08030" filter="url(#pb05)"/><circle cx="879" cy="629" r="0.4" fill="#fff" opacity=".8"/><circle cx="398" cy="541" r="2" fill="#d0b070" opacity=".35" filter="url(#pb1)"/><circle cx="398" cy="541" r="1" fill="#d0b070" filter="url(#pb05)"/><circle cx="398" cy="541" r="0.4" fill="#fff" opacity=".8"/><circle cx="179" cy="352" r="2" fill="#7078d8" opacity=".35" filter="url(#pb1)"/><circle cx="179" cy="352" r="1" fill="#7078d8" filter="url(#pb05)"/><circle cx="179" cy="352" r="0.4" fill="#fff" opacity=".8"/><circle cx="347" cy="299" r="2" fill="#d0a040" opacity=".35" filter="url(#pb1)"/><circle cx="347" cy="299" r="1" fill="#d0a040" filter="url(#pb05)"/><circle cx="347" cy="299" r="0.4" fill="#fff" opacity=".8"/><circle cx="475.5" cy="98.5" r="2.4" fill="#4a54ff" opacity=".35" filter="url(#pb1)"/><circle cx="475.5" cy="98.5" r="1.2" fill="#4a54ff" filter="url(#pb05)"/><circle cx="475.5" cy="98.5" r="0.48" fill="#fff" opacity=".8"/><circle cx="385" cy="7" r="1.8" fill="#9098e0" opacity=".35" filter="url(#pb1)"/><circle cx="385" cy="7" r="0.9" fill="#9098e0" filter="url(#pb05)"/><circle cx="385" cy="7" r="0.36000000000000004" fill="#fff" opacity=".8"/><circle cx="799" cy="555" r="1.8" fill="#8088d0" opacity=".35" filter="url(#pb1)"/><circle cx="799" cy="555" r="0.9" fill="#8088d0" filter="url(#pb05)"/><circle cx="799" cy="555" r="0.36000000000000004" fill="#fff" opacity=".8"/><circle cx="230" cy="187" r="1.8" fill="#c0a060" opacity=".35" filter="url(#pb1)"/><circle cx="230" cy="187" r="0.9" fill="#c0a060" filter="url(#pb05)"/><circle cx="230" cy="187" r="0.36000000000000004" fill="#fff" opacity=".8"/><circle cx="51" cy="241" r="1.8" fill="#7880d0" opacity=".35" filter="url(#pb1)"/><circle cx="51" cy="241" r="0.9" fill="#7880d0" filter="url(#pb05)"/><circle cx="51" cy="241" r="0.36000000000000004" fill="#fff" opacity=".8"/><circle cx="269" cy="183" r="1.8" fill="#b09050" opacity=".35" filter="url(#pb1)"/><circle cx="269" cy="183" r="0.9" fill="#b09050" filter="url(#pb05)"/><circle cx="269" cy="183" r="0.36000000000000004" fill="#fff" opacity=".8"/><circle cx="699" cy="459" r="1.8" fill="#7078c8" opacity=".35" filter="url(#pb1)"/><circle cx="699" cy="459" r="0.9" fill="#7078c8" filter="url(#pb05)"/><circle cx="699" cy="459" r="0.36000000000000004" fill="#fff" opacity=".8"/><circle cx="466.20000000000005" cy="466.20000000000005" r="2.6" fill="#b090f0" opacity=".35" filter="url(#pb1)"/><circle cx="466.20000000000005" cy="466.20000000000005" r="1.3" fill="#b090f0" filter="url(#pb05)"/><circle cx="466.20000000000005" cy="466.20000000000005" r="0.52" fill="#fff" opacity=".8"/><circle cx="469.4" cy="478.6" r="2.4" fill="#9080f0" opacity=".35" filter="url(#pb1)"/><circle cx="469.4" cy="478.6" r="1.2" fill="#9080f0" filter="url(#pb05)"/><circle cx="469.4" cy="478.6" r="0.48" fill="#fff" opacity=".8"/><circle cx="521.6" cy="425.4" r="2.4" fill="#b0a0f0" opacity=".35" filter="url(#pb1)"/><circle cx="521.6" cy="425.4" r="1.2" fill="#b0a0f0" filter="url(#pb05)"/><circle cx="521.6" cy="425.4" r="0.48" fill="#fff" opacity=".8"/><circle cx="533.7" cy="351.29999999999995" r="2.6" fill="#50a0e0" opacity=".35" filter="url(#pb1)"/><circle cx="533.7" cy="351.29999999999995" r="1.3" fill="#50a0e0" filter="url(#pb05)"/><circle cx="533.7" cy="351.29999999999995" r="0.52" fill="#fff" opacity=".8"/><circle cx="504.29999999999995" cy="519.9" r="2.8" fill="#a0b0ff" opacity=".35" filter="url(#pb1)"/><circle cx="504.29999999999995" cy="519.9" r="1.4" fill="#a0b0ff" filter="url(#pb05)"/><circle cx="504.29999999999995" cy="519.9" r="0.5599999999999999" fill="#fff" opacity=".8"/><circle cx="492.5" cy="332.29999999999995" r="2" fill="#c0b080" opacity=".35" filter="url(#pb1)"/><circle cx="492.5" cy="332.29999999999995" r="1" fill="#c0b080" filter="url(#pb05)"/><circle cx="492.5" cy="332.29999999999995" r="0.4" fill="#fff" opacity=".8"/><circle cx="413.70000000000005" cy="384.1" r="2" fill="#d09030" opacity=".35" filter="url(#pb1)"/><circle cx="413.70000000000005" cy="384.1" r="1" fill="#d09030" filter="url(#pb05)"/><circle cx="413.70000000000005" cy="384.1" r="0.4" fill="#fff" opacity=".8"/><circle cx="460.29999999999995" cy="363.5" r="2" fill="#90a0e0" opacity=".35" filter="url(#pb1)"/><circle cx="460.29999999999995" cy="363.5" r="1" fill="#90a0e0" filter="url(#pb05)"/><circle cx="460.29999999999995" cy="363.5" r="0.4" fill="#fff" opacity=".8"/><circle cx="588" cy="496" r="2" fill="#c0c0c0" opacity=".35" filter="url(#pb1)"/><circle cx="588" cy="496" r="1" fill="#c0c0c0" filter="url(#pb05)"/><circle cx="588" cy="496" r="0.4" fill="#fff" opacity=".8"/><circle cx="596" cy="456" r="2.4" fill="#d0b030" opacity=".35" filter="url(#pb1)"/><circle cx="596" cy="456" r="1.2" fill="#d0b030" filter="url(#pb05)"/><circle cx="596" cy="456" r="0.48" fill="#fff" opacity=".8"/><circle cx="531" cy="469.5" r="2" fill="#c0b0e0" opacity=".35" filter="url(#pb1)"/><circle cx="531" cy="469.5" r="1" fill="#c0b0e0" filter="url(#pb05)"/><circle cx="531" cy="469.5" r="0.4" fill="#fff" opacity=".8"/><circle cx="542.5" cy="457.5" r="2" fill="#c0c0c0" opacity=".35" filter="url(#pb1)"/><circle cx="542.5" cy="457.5" r="1" fill="#c0c0c0" filter="url(#pb05)"/><circle cx="542.5" cy="457.5" r="0.4" fill="#fff" opacity=".8"/><circle cx="557" cy="415" r="2" fill="#b0b0b8" opacity=".35" filter="url(#pb1)"/><circle cx="557" cy="415" r="1" fill="#b0b0b8" filter="url(#pb05)"/><circle cx="557" cy="415" r="0.4" fill="#fff" opacity=".8"/><circle cx="575.6" cy="403.29999999999995" r="2" fill="#b0b0b8" opacity=".35" filter="url(#pb1)"/><circle cx="575.6" cy="403.29999999999995" r="1" fill="#b0b0b8" filter="url(#pb05)"/><circle cx="575.6" cy="403.29999999999995" r="0.4" fill="#fff" opacity=".8"/><circle cx="409" cy="162" r="2" fill="#7a84e0" opacity=".35" filter="url(#pb1)"/><circle cx="409" cy="162" r="1" fill="#7a84e0" filter="url(#pb05)"/><circle cx="409" cy="162" r="0.4" fill="#fff" opacity=".8"/><circle cx="287" cy="104.5" r="2" fill="#8a90e0" opacity=".35" filter="url(#pb1)"/><circle cx="287" cy="104.5" r="1" fill="#8a90e0" filter="url(#pb05)"/><circle cx="287" cy="104.5" r="0.4" fill="#fff" opacity=".8"/><circle cx="226" cy="56.60000000000002" r="2" fill="#d0a040" opacity=".35" filter="url(#pb1)"/><circle cx="226" cy="56.60000000000002" r="1" fill="#d0a040" filter="url(#pb05)"/><circle cx="226" cy="56.60000000000002" r="0.4" fill="#fff" opacity=".8"/><circle cx="154.5" cy="57" r="2" fill="#7a84e0" opacity=".35" filter="url(#pb1)"/><circle cx="154.5" cy="57" r="1" fill="#7a84e0" filter="url(#pb05)"/><circle cx="154.5" cy="57" r="0.4" fill="#fff" opacity=".8"/><circle cx="24" cy="104" r="2" fill="#7a84e0" opacity=".35" filter="url(#pb1)"/><circle cx="24" cy="104" r="1" fill="#7a84e0" filter="url(#pb05)"/><circle cx="24" cy="104" r="0.4" fill="#fff" opacity=".8"/><circle cx="330.5" cy="186.5" r="2" fill="#d0a040" opacity=".35" filter="url(#pb1)"/><circle cx="330.5" cy="186.5" r="1" fill="#d0a040" filter="url(#pb05)"/><circle cx="330.5" cy="186.5" r="0.4" fill="#fff" opacity=".8"/><circle cx="211.5" cy="172.5" r="2" fill="#8a94e0" opacity=".35" filter="url(#pb1)"/><circle cx="211.5" cy="172.5" r="1" fill="#8a94e0" filter="url(#pb05)"/><circle cx="211.5" cy="172.5" r="0.4" fill="#fff" opacity=".8"/><circle cx="119.5" cy="204.5" r="1.8" fill="#8a94e0" opacity=".35" filter="url(#pb1)"/><circle cx="119.5" cy="204.5" r="0.9" fill="#8a94e0" filter="url(#pb05)"/><circle cx="119.5" cy="204.5" r="0.36000000000000004" fill="#fff" opacity=".8"/><circle cx="51.5" cy="241.5" r="1.8" fill="#8a94e0" opacity=".35" filter="url(#pb1)"/><circle cx="51.5" cy="241.5" r="0.9" fill="#8a94e0" filter="url(#pb05)"/><circle cx="51.5" cy="241.5" r="0.36000000000000004" fill="#fff" opacity=".8"/><circle cx="245.5" cy="259" r="1.8" fill="#8a94e0" opacity=".35" filter="url(#pb1)"/><circle cx="245.5" cy="259" r="0.9" fill="#8a94e0" filter="url(#pb05)"/><circle cx="245.5" cy="259" r="0.36000000000000004" fill="#fff" opacity=".8"/><circle cx="379.6" cy="7.5" r="1.8" fill="#8a94e0" opacity=".35" filter="url(#pb1)"/><circle cx="379.6" cy="7.5" r="0.9" fill="#8a94e0" filter="url(#pb05)"/><circle cx="379.6" cy="7.5" r="0.36000000000000004" fill="#fff" opacity=".8"/><circle cx="367" cy="49" r="1.8" fill="#c0a050" opacity=".35" filter="url(#pb1)"/><circle cx="367" cy="49" r="0.9" fill="#c0a050" filter="url(#pb05)"/><circle cx="367" cy="49" r="0.36000000000000004" fill="#fff" opacity=".8"/><circle cx="419" cy="258" r="1.8" fill="#8a94e0" opacity=".35" filter="url(#pb1)"/><circle cx="419" cy="258" r="0.9" fill="#8a94e0" filter="url(#pb05)"/><circle cx="419" cy="258" r="0.36000000000000004" fill="#fff" opacity=".8"/><circle cx="450" cy="301.5" r="1.8" fill="#c0a040" opacity=".35" filter="url(#pb1)"/><circle cx="450" cy="301.5" r="0.9" fill="#c0a040" filter="url(#pb05)"/><circle cx="450" cy="301.5" r="0.36000000000000004" fill="#fff" opacity=".8"/><g transform="translate(58,634) rotate(35)"><ellipse rx="9" ry="6.5" fill="#5a5660" opacity=".8" filter="url(#pb3)"/><ellipse rx="2" ry="1.6" fill="#e0a0e0" filter="url(#pb05)"/></g></svg></div><div class="a" style="left:242px;top:1017px;width:830px;height:20.5px;background:linear-gradient(#f4f4f4,#a9c4ee);border:1px solid #8f8f8f;box-sizing:border-box;border-radius:2px;"></div><div class="a" style="left:1053px;top:1019px;width:1px;height:16.5px;background:#9c9c9c"></div><svg style="left:0px;top:0px" width="1" height="1" viewBox="0 0 1 1"><path d="M1058.0 1024.65h10l-5 5.6z" fill="#1a1a1a"/></svg><svg style="left:248px;top:1021px" width="14" height="13" viewBox="0 0 14 13"><rect x="1" y="1" width="10.5" height="10.5" fill="#fff" stroke="#444" stroke-width="1.6"/><rect x=".2" y=".2" width="12.1" height="3" fill="#444"/></svg><div class="t" style="left:269.7px;top:1021.0px;font-size:11.4px;color:#111;letter-spacing:0.605px;line-height:12px;">Image14</div><div class="t" style="left:1088.5px;top:1021.0px;font-size:11.6px;color:#111;letter-spacing:0.397px;line-height:12px;">Quality:</div><div class="a" style="left:1139.5px;top:1017.5px;width:91.5px;height:19.5px;background:linear-gradient(#f6f6f6,#cfcfcf);border:1px solid #8f8f8f;box-sizing:border-box;border-radius:2px;box-shadow:0 0 0 1.5px #7aa7ee;border-color:#7aa7ee;"></div><div class="a" style="left:1213.0px;top:1019.5px;width:1px;height:15.5px;background:#9c9c9c"></div><svg style="left:0px;top:0px" width="1" height="1" viewBox="0 0 1 1"><path d="M1217.5 1024.65h10l-5 5.6z" fill="#1a1a1a"/></svg><div class="t" style="left:1144.2px;top:1021.0px;font-size:11.4px;color:#111;letter-spacing:0.485px;line-height:12px;">Smooth</div><svg style="left:1250px;top:1019px" width="15" height="15" viewBox="0 0 15 15"><g transform="scale(0.9375)" opacity="1.0"><rect width="16" height="16" fill="#5a6af0"/><path d="M4 0v16M8 0v16M12 0v16M0 4h16M0 8h16M0 12h16" stroke="#9aa6ff" stroke-width="1"/><path d="M1 15C6 15 5 3 15 2" stroke="#ff5a30" stroke-width="1.3" fill="none"/><path d="M1 15C8 14 9 4 15 1" stroke="#30e030" stroke-width="1.3" fill="none"/><path d="M1 15C10 15 12 8 15 1" stroke="#e0e040" stroke-width="1" fill="none"/></g></svg><div class="a" style="left:0px;top:1047px;width:1920px;height:33px;background:#efefef"></div><svg style="left:0px;top:0px" width="1920" height="1080" viewBox="0 0 1920 1080"><defs><pattern id="ck_s" width="2" height="2" patternUnits="userSpaceOnUse"><rect width="2" height="2" fill="#ddd"/><rect width="1" height="1" fill="#444"/><rect x="1" y="1" width="1" height="1" fill="#444"/></pattern><pattern id="grip_s" width="4" height="4" patternUnits="userSpaceOnUse"><rect width="4" height="4" fill="#efefef"/><rect width="2" height="2" fill="#7a7a7a"/><rect x="2" y="2" width="2" height="2" fill="#7a7a7a"/></pattern><pattern id="grip2_s" width="3" height="3" patternUnits="userSpaceOnUse"><rect width="3" height="3" fill="#ececec"/><rect width="1.500" height="1.500" fill="#8c8c8c"/><rect x="1.500" y="1.500" width="1.500" height="1.500" fill="#8c8c8c"/></pattern></defs><rect x="6" y="1052" width="6" height="22" fill="url(#grip2_s)"/><rect x="349" y="1052" width="6" height="22" fill="url(#grip2_s)"/><rect x="459" y="1052" width="6" height="22" fill="url(#grip2_s)"/><rect x="665" y="1052" width="6" height="22" fill="url(#grip2_s)"/><rect x="1124" y="1052" width="6" height="22" fill="url(#grip2_s)"/><path d="M1095 1057l10.5 6-10.5 6z" fill="#333"/><defs><linearGradient id="sqb" x1="0" y1="0" x2="0" y2="1"><stop offset="0" stop-color="#6ea2f5"/><stop offset="1" stop-color="#1f55c8"/></linearGradient><linearGradient id="sqg" x1="0" y1="0" x2="0" y2="1"><stop offset="0" stop-color="#8a8a8a"/><stop offset="1" stop-color="#2e2e2e"/></linearGradient></defs><rect x="362.5" y="1053.5" width="19" height="19" fill="url(#sqb)" stroke="#2a4fa8" stroke-width="1"/><rect x="385.5" y="1053.5" width="19" height="19" fill="url(#sqg)" stroke="#2b2b2b" stroke-width="1"/><rect x="408.5" y="1053.5" width="19" height="19" fill="url(#sqg)" stroke="#2b2b2b" stroke-width="1"/><rect x="431.5" y="1053.5" width="19" height="19" fill="url(#sqg)" stroke="#2b2b2b" stroke-width="1"/><rect x="317.5" y="1053.5" width="19" height="19" fill="#fff" stroke="#8f8f8f"/><path d="M323 1058.5h8.5v10h-8.5z" fill="#fff" stroke="#444" stroke-width="1.6"/><path d="M321.5 1060.5v8.5h2" stroke="#444" stroke-width="1.6" fill="none"/></svg><div class="a" style="left:20px;top:1053.5px;width:293px;height:19.5px;background:linear-gradient(#f6f6f6,#cfcfcf);border:1px solid #8f8f8f;box-sizing:border-box;border-radius:2px;"></div><div class="a" style="left:294px;top:1055.5px;width:1px;height:15.5px;background:#9c9c9c"></div><svg style="left:0px;top:0px" width="1" height="1" viewBox="0 0 1 1"><path d="M299.0 1060.65h10l-5 5.6z" fill="#1a1a1a"/></svg><svg style="left:26px;top:1057.5px" width="14" height="13" viewBox="0 0 14 13"><rect x="1" y="1" width="10.5" height="10.5" fill="#fff" stroke="#444" stroke-width="1.6"/><rect x=".2" y=".2" width="12.1" height="3" fill="#444"/></svg><div class="t" style="left:48.0px;top:1057.0px;font-size:11.7px;color:#111;font-family:'Liberation Mono',monospace;line-height:14px;">Image14</div><div class="t" style="left:1149.0px;top:1057.0px;font-size:11.7px;color:#111;font-family:'Liberation Mono',monospace;letter-spacing:-0.029px;line-height:14px;">w:6400 · h:4297 · n:3 · f32 · RGB · 314.722 MiB · Modified · Masked</div></div></body></html>
